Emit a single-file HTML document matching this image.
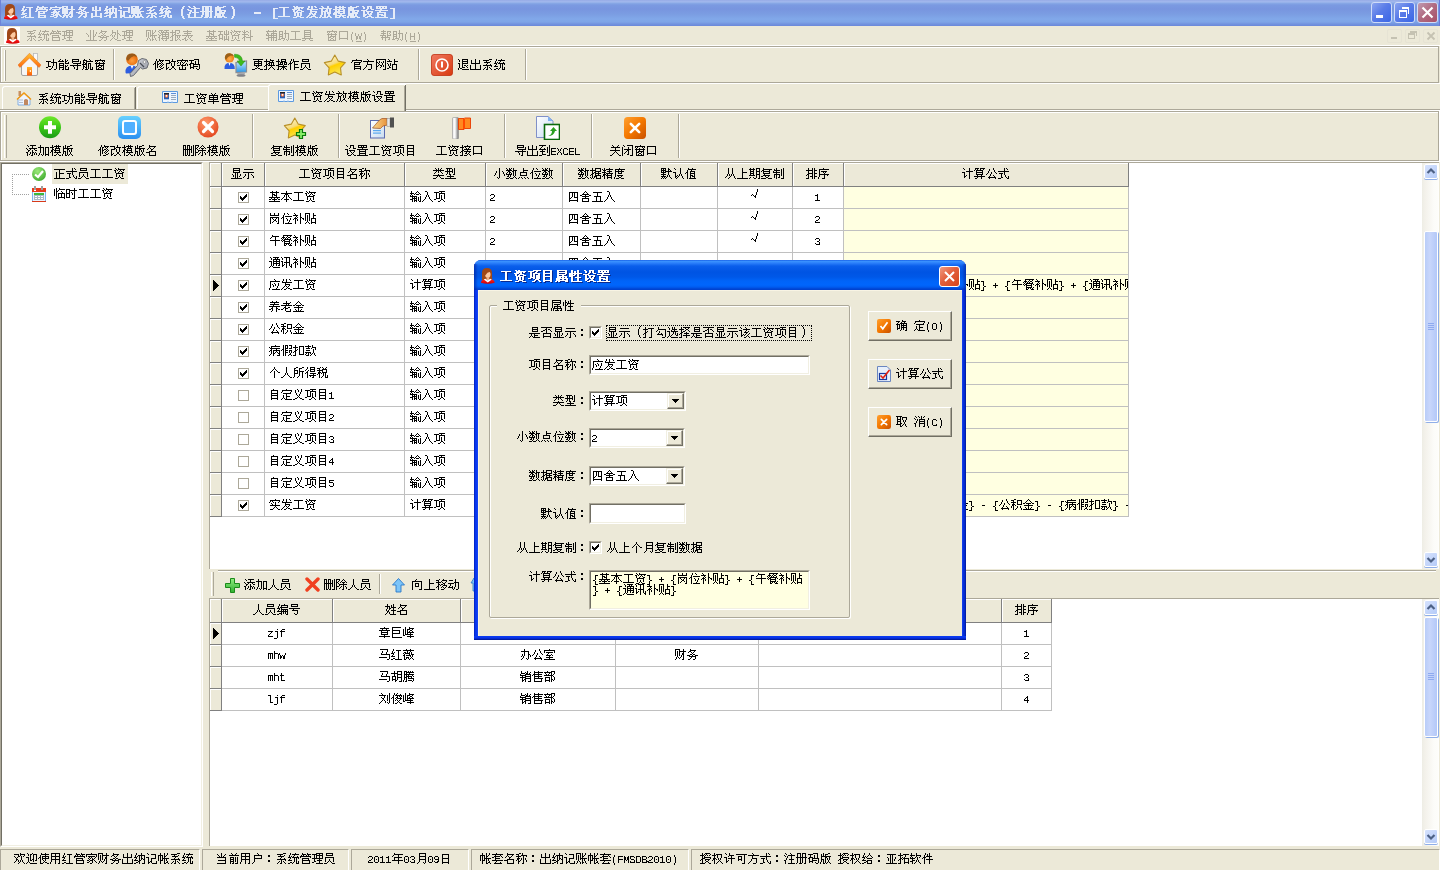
<!DOCTYPE html><html><head><meta charset="utf-8"><title>红管家财务出纳记账系统</title><style>
*{margin:0;padding:0;box-sizing:border-box}
html,body{width:1440px;height:870px;overflow:hidden}
body{position:relative;background:#ece9d8;font-family:"Liberation Sans",sans-serif;font-size:12px;color:#000}
.a{position:absolute}
.t{white-space:nowrap;line-height:12px;height:12px}
</style></head><body>
<svg width="0" height="0" style="position:absolute"><defs><path id="g0" d="M2 0h1v1h-1zM2 1h1v1h-1zM5 1h6v1h-6zM1 2h1v1h-1zM8 2h1v1h-1zM1 3h1v1h-1zM4 3h1v1h-1zM8 3h1v1h-1zM0 4h4v1h-4zM8 4h1v1h-1zM2 5h1v1h-1zM8 5h1v1h-1zM1 6h1v1h-1zM8 6h1v1h-1zM1 7h1v1h-1zM3 7h2v1h-2zM8 7h1v1h-1zM0 8h3v1h-3zM8 8h1v1h-1zM4 9h1v1h-1zM8 9h1v1h-1zM2 10h2v1h-2zM8 10h1v1h-1zM0 11h2v1h-2zM4 11h8v1h-8z"/><path id="g1" d="M2 0h1v1h-1zM7 0h1v1h-1zM2 1h4v1h-4zM7 1h5v1h-5zM1 2h1v1h-1zM4 2h1v1h-1zM6 2h1v1h-1zM9 2h1v1h-1zM1 3h11v1h-11zM1 4h1v1h-1zM11 4h1v1h-1zM0 5h1v1h-1zM3 5h6v1h-6zM10 5h1v1h-1zM3 6h1v1h-1zM8 6h1v1h-1zM3 7h6v1h-6zM3 8h1v1h-1zM3 9h7v1h-7zM3 10h1v1h-1zM9 10h1v1h-1zM3 11h7v1h-7z"/><path id="g2" d="M6 0h1v1h-1zM1 1h11v1h-11zM1 2h1v1h-1zM10 2h1v1h-1zM0 3h1v1h-1zM3 3h7v1h-7zM5 4h1v1h-1zM4 5h1v1h-1zM6 5h1v1h-1zM9 5h1v1h-1zM2 6h2v1h-2zM5 6h2v1h-2zM8 6h1v1h-1zM4 7h1v1h-1zM7 7h2v1h-2zM2 8h2v1h-2zM6 8h2v1h-2zM9 8h1v1h-1zM4 9h2v1h-2zM7 9h1v1h-1zM10 9h1v1h-1zM1 10h3v1h-3zM7 10h1v1h-1zM11 10h1v1h-1zM5 11h2v1h-2z"/><path id="g3" d="M0 0h5v1h-5zM9 0h1v1h-1zM0 1h1v1h-1zM4 1h1v1h-1zM9 1h1v1h-1zM0 2h1v1h-1zM2 2h1v1h-1zM4 2h1v1h-1zM9 2h1v1h-1zM0 3h1v1h-1zM2 3h1v1h-1zM4 3h1v1h-1zM6 3h6v1h-6zM0 4h1v1h-1zM2 4h1v1h-1zM4 4h1v1h-1zM9 4h1v1h-1zM0 5h1v1h-1zM2 5h1v1h-1zM4 5h1v1h-1zM8 5h2v1h-2zM0 6h1v1h-1zM2 6h1v1h-1zM4 6h1v1h-1zM7 6h1v1h-1zM9 6h1v1h-1zM0 7h1v1h-1zM2 7h1v1h-1zM4 7h1v1h-1zM7 7h1v1h-1zM9 7h1v1h-1zM2 8h1v1h-1zM6 8h1v1h-1zM9 8h1v1h-1zM1 9h1v1h-1zM3 9h1v1h-1zM5 9h1v1h-1zM9 9h1v1h-1zM1 10h1v1h-1zM4 10h1v1h-1zM7 10h1v1h-1zM9 10h1v1h-1zM0 11h1v1h-1zM4 11h1v1h-1zM8 11h1v1h-1z"/><path id="g4" d="M4 0h1v1h-1zM3 1h7v1h-7zM3 2h1v1h-1zM8 2h1v1h-1zM2 3h1v1h-1zM4 3h1v1h-1zM7 3h1v1h-1zM5 4h2v1h-2zM3 5h2v1h-2zM7 5h2v1h-2zM0 6h3v1h-3zM5 6h1v1h-1zM9 6h3v1h-3zM2 7h8v1h-8zM5 8h1v1h-1zM9 8h1v1h-1zM4 9h1v1h-1zM9 9h1v1h-1zM3 10h1v1h-1zM7 10h1v1h-1zM9 10h1v1h-1zM2 11h1v1h-1zM8 11h1v1h-1z"/><path id="g5" d="M4 0h1v1h-1zM1 1h1v1h-1zM4 1h1v1h-1zM8 1h1v1h-1zM1 2h1v1h-1zM4 2h1v1h-1zM8 2h1v1h-1zM1 3h1v1h-1zM4 3h1v1h-1zM8 3h1v1h-1zM1 4h8v1h-8zM4 5h1v1h-1zM4 6h1v1h-1zM0 7h1v1h-1zM4 7h1v1h-1zM9 7h1v1h-1zM0 8h1v1h-1zM4 8h1v1h-1zM9 8h1v1h-1zM0 9h1v1h-1zM4 9h1v1h-1zM9 9h1v1h-1zM0 10h10v1h-10zM0 11h1v1h-1zM9 11h1v1h-1z"/><path id="g6" d="M2 0h1v1h-1zM8 0h1v1h-1zM2 1h1v1h-1zM8 1h1v1h-1zM1 2h1v1h-1zM5 2h7v1h-7zM1 3h1v1h-1zM3 3h1v1h-1zM5 3h1v1h-1zM8 3h1v1h-1zM11 3h1v1h-1zM0 4h3v1h-3zM5 4h1v1h-1zM8 4h1v1h-1zM11 4h1v1h-1zM2 5h1v1h-1zM5 5h1v1h-1zM8 5h1v1h-1zM11 5h1v1h-1zM1 6h1v1h-1zM3 6h1v1h-1zM5 6h1v1h-1zM7 6h1v1h-1zM9 6h1v1h-1zM11 6h1v1h-1zM0 7h3v1h-3zM5 7h1v1h-1zM7 7h1v1h-1zM10 7h2v1h-2zM5 8h2v1h-2zM11 8h1v1h-1zM2 9h2v1h-2zM5 9h1v1h-1zM11 9h1v1h-1zM0 10h2v1h-2zM5 10h1v1h-1zM11 10h1v1h-1zM5 11h1v1h-1zM9 11h3v1h-3z"/><path id="g7" d="M1 0h1v1h-1zM2 1h1v1h-1zM5 1h6v1h-6zM2 2h1v1h-1zM10 2h1v1h-1zM10 3h1v1h-1zM0 4h3v1h-3zM10 4h1v1h-1zM2 5h1v1h-1zM5 5h6v1h-6zM2 6h1v1h-1zM5 6h1v1h-1zM10 6h1v1h-1zM2 7h1v1h-1zM5 7h1v1h-1zM2 8h1v1h-1zM5 8h1v1h-1zM2 9h1v1h-1zM4 9h2v1h-2zM11 9h1v1h-1zM2 10h2v1h-2zM5 10h1v1h-1zM11 10h1v1h-1zM2 11h1v1h-1zM6 11h6v1h-6z"/><path id="g8" d="M0 0h5v1h-5zM6 0h1v1h-1zM0 1h1v1h-1zM4 1h1v1h-1zM6 1h1v1h-1zM10 1h1v1h-1zM0 2h1v1h-1zM2 2h1v1h-1zM4 2h1v1h-1zM6 2h1v1h-1zM9 2h1v1h-1zM0 3h1v1h-1zM2 3h1v1h-1zM4 3h1v1h-1zM6 3h1v1h-1zM8 3h1v1h-1zM0 4h1v1h-1zM2 4h1v1h-1zM4 4h1v1h-1zM6 4h2v1h-2zM0 5h1v1h-1zM2 5h1v1h-1zM4 5h8v1h-8zM0 6h1v1h-1zM2 6h1v1h-1zM4 6h1v1h-1zM6 6h1v1h-1zM8 6h1v1h-1zM0 7h1v1h-1zM2 7h1v1h-1zM4 7h1v1h-1zM6 7h1v1h-1zM8 7h1v1h-1zM2 8h1v1h-1zM6 8h1v1h-1zM9 8h1v1h-1zM1 9h1v1h-1zM3 9h1v1h-1zM6 9h1v1h-1zM9 9h1v1h-1zM1 10h1v1h-1zM4 10h1v1h-1zM6 10h1v1h-1zM8 10h1v1h-1zM10 10h1v1h-1zM0 11h1v1h-1zM4 11h1v1h-1zM6 11h2v1h-2zM11 11h1v1h-1z"/><path id="g9" d="M6 0h4v1h-4zM0 1h6v1h-6zM4 2h1v1h-1zM3 3h1v1h-1zM7 3h1v1h-1zM1 4h6v1h-6zM4 5h1v1h-1zM3 6h1v1h-1zM8 6h1v1h-1zM0 7h10v1h-10zM5 8h1v1h-1zM9 8h1v1h-1zM2 9h1v1h-1zM5 9h1v1h-1zM7 9h1v1h-1zM1 10h1v1h-1zM5 10h1v1h-1zM8 10h1v1h-1zM0 11h1v1h-1zM4 11h2v1h-2zM9 11h1v1h-1z"/><path id="g10" d="M2 0h1v1h-1zM7 0h1v1h-1zM2 1h1v1h-1zM8 1h1v1h-1zM1 2h1v1h-1zM4 2h8v1h-8zM1 3h1v1h-1zM3 3h1v1h-1zM7 3h1v1h-1zM0 4h3v1h-3zM6 4h1v1h-1zM9 4h1v1h-1zM2 5h1v1h-1zM5 5h6v1h-6zM1 6h1v1h-1zM3 6h1v1h-1zM6 6h1v1h-1zM8 6h1v1h-1zM10 6h1v1h-1zM0 7h3v1h-3zM6 7h1v1h-1zM8 7h1v1h-1zM6 8h1v1h-1zM8 8h1v1h-1zM2 9h2v1h-2zM5 9h1v1h-1zM8 9h1v1h-1zM11 9h1v1h-1zM0 10h2v1h-2zM5 10h1v1h-1zM8 10h1v1h-1zM11 10h1v1h-1zM4 11h1v1h-1zM9 11h3v1h-3z"/><path id="g11" d="M2 0h1v1h-1zM1 1h1v1h-1zM1 2h1v1h-1zM0 3h1v1h-1zM0 4h1v1h-1zM0 5h1v1h-1zM0 6h1v1h-1zM0 7h1v1h-1zM0 8h1v1h-1zM0 9h1v1h-1zM1 10h1v1h-1zM1 11h1v1h-1zM2 12h1v1h-1z"/><path id="g12" d="M1 0h1v1h-1zM6 0h1v1h-1zM2 1h1v1h-1zM7 1h1v1h-1zM4 2h8v1h-8zM0 3h1v1h-1zM7 3h1v1h-1zM1 4h1v1h-1zM3 4h1v1h-1zM7 4h1v1h-1zM3 5h1v1h-1zM7 5h1v1h-1zM2 6h1v1h-1zM5 6h6v1h-6zM2 7h1v1h-1zM7 7h1v1h-1zM0 8h2v1h-2zM7 8h1v1h-1zM1 9h1v1h-1zM7 9h1v1h-1zM1 10h1v1h-1zM7 10h1v1h-1zM1 11h1v1h-1zM3 11h9v1h-9z"/><path id="g13" d="M2 0h4v1h-4zM7 0h4v1h-4zM2 1h1v1h-1zM5 1h1v1h-1zM7 1h1v1h-1zM10 1h1v1h-1zM2 2h1v1h-1zM5 2h1v1h-1zM7 2h1v1h-1zM10 2h1v1h-1zM2 3h1v1h-1zM5 3h1v1h-1zM7 3h1v1h-1zM10 3h1v1h-1zM2 4h1v1h-1zM5 4h1v1h-1zM7 4h1v1h-1zM10 4h1v1h-1zM0 5h12v1h-12zM2 6h1v1h-1zM5 6h1v1h-1zM7 6h1v1h-1zM10 6h1v1h-1zM2 7h1v1h-1zM5 7h1v1h-1zM7 7h1v1h-1zM10 7h1v1h-1zM2 8h1v1h-1zM5 8h1v1h-1zM7 8h1v1h-1zM10 8h1v1h-1zM1 9h1v1h-1zM5 9h1v1h-1zM7 9h1v1h-1zM10 9h1v1h-1zM1 10h1v1h-1zM5 10h1v1h-1zM7 10h1v1h-1zM10 10h1v1h-1zM0 11h1v1h-1zM4 11h1v1h-1zM6 11h1v1h-1zM9 11h2v1h-2z"/><path id="g14" d="M3 0h1v1h-1zM9 0h2v1h-2zM1 1h1v1h-1zM3 1h1v1h-1zM5 1h4v1h-4zM1 2h1v1h-1zM3 2h1v1h-1zM5 2h1v1h-1zM1 3h1v1h-1zM3 3h1v1h-1zM5 3h1v1h-1zM1 4h10v1h-10zM1 5h1v1h-1zM5 5h2v1h-2zM10 5h1v1h-1zM1 6h1v1h-1zM5 6h1v1h-1zM7 6h1v1h-1zM9 6h1v1h-1zM1 7h3v1h-3zM5 7h1v1h-1zM7 7h1v1h-1zM9 7h1v1h-1zM1 8h1v1h-1zM3 8h1v1h-1zM5 8h1v1h-1zM8 8h1v1h-1zM1 9h1v1h-1zM3 9h1v1h-1zM5 9h1v1h-1zM8 9h1v1h-1zM0 10h1v1h-1zM3 10h1v1h-1zM5 10h1v1h-1zM7 10h1v1h-1zM9 10h1v1h-1zM0 11h1v1h-1zM3 11h2v1h-2zM6 11h1v1h-1zM10 11h2v1h-2z"/><path id="g15" d="M0 0h1v1h-1zM1 1h1v1h-1zM1 2h1v1h-1zM2 3h1v1h-1zM2 4h1v1h-1zM2 5h1v1h-1zM2 6h1v1h-1zM2 7h1v1h-1zM2 8h1v1h-1zM2 9h1v1h-1zM1 10h1v1h-1zM1 11h1v1h-1zM0 12h1v1h-1z"/><path id="g16" d="M0 0h4v1h-4zM0 1h1v1h-1zM0 2h1v1h-1zM0 3h1v1h-1zM0 4h1v1h-1zM0 5h1v1h-1zM0 6h1v1h-1zM0 7h1v1h-1zM0 8h1v1h-1zM0 9h1v1h-1zM0 10h4v1h-4z"/><path id="g17" d="M1 0h9v1h-9zM5 1h1v1h-1zM5 2h1v1h-1zM5 3h1v1h-1zM5 4h1v1h-1zM5 5h1v1h-1zM5 6h1v1h-1zM5 7h1v1h-1zM5 8h1v1h-1zM0 9h11v1h-11z"/><path id="g18" d="M1 0h1v1h-1zM4 0h1v1h-1zM2 1h1v1h-1zM4 1h7v1h-7zM2 2h1v1h-1zM4 2h1v1h-1zM6 2h1v1h-1zM9 2h1v1h-1zM0 3h2v1h-2zM3 3h1v1h-1zM6 3h1v1h-1zM1 4h1v1h-1zM5 4h1v1h-1zM7 4h2v1h-2zM1 5h1v1h-1zM4 5h1v1h-1zM9 5h2v1h-2zM2 6h7v1h-7zM2 7h1v1h-1zM5 7h1v1h-1zM8 7h1v1h-1zM2 8h1v1h-1zM5 8h1v1h-1zM8 8h1v1h-1zM2 9h1v1h-1zM5 9h1v1h-1zM8 9h1v1h-1zM4 10h1v1h-1zM6 10h2v1h-2zM1 11h3v1h-3zM8 11h3v1h-3z"/><path id="g19" d="M2 0h1v1h-1zM5 0h1v1h-1zM8 0h1v1h-1zM2 1h1v1h-1zM5 1h1v1h-1zM9 1h1v1h-1zM1 2h1v1h-1zM5 2h1v1h-1zM1 3h10v1h-10zM4 4h1v1h-1zM4 5h6v1h-6zM4 6h1v1h-1zM9 6h1v1h-1zM3 7h1v1h-1zM5 7h1v1h-1zM8 7h1v1h-1zM3 8h1v1h-1zM6 8h1v1h-1zM8 8h1v1h-1zM2 9h1v1h-1zM7 9h1v1h-1zM1 10h1v1h-1zM5 10h2v1h-2zM8 10h1v1h-1zM0 11h1v1h-1zM3 11h2v1h-2zM9 11h2v1h-2z"/><path id="g20" d="M2 0h1v1h-1zM8 0h1v1h-1zM3 1h1v1h-1zM8 1h1v1h-1zM0 2h6v1h-6zM7 2h5v1h-5zM2 3h1v1h-1zM7 3h1v1h-1zM10 3h1v1h-1zM2 4h1v1h-1zM6 4h2v1h-2zM10 4h1v1h-1zM2 5h4v1h-4zM7 5h1v1h-1zM10 5h1v1h-1zM2 6h1v1h-1zM5 6h1v1h-1zM8 6h1v1h-1zM10 6h1v1h-1zM2 7h1v1h-1zM5 7h1v1h-1zM8 7h1v1h-1zM10 7h1v1h-1zM2 8h1v1h-1zM5 8h1v1h-1zM9 8h1v1h-1zM1 9h1v1h-1zM5 9h1v1h-1zM9 9h1v1h-1zM1 10h1v1h-1zM5 10h1v1h-1zM8 10h1v1h-1zM10 10h1v1h-1zM0 11h1v1h-1zM3 11h2v1h-2zM6 11h2v1h-2zM11 11h1v1h-1z"/><path id="g21" d="M2 0h1v1h-1zM6 0h1v1h-1zM9 0h1v1h-1zM2 1h1v1h-1zM4 1h8v1h-8zM2 2h1v1h-1zM6 2h1v1h-1zM9 2h1v1h-1zM0 3h11v1h-11zM2 4h1v1h-1zM5 4h1v1h-1zM10 4h1v1h-1zM2 5h2v1h-2zM5 5h6v1h-6zM1 6h2v1h-2zM4 6h2v1h-2zM10 6h1v1h-1zM0 7h1v1h-1zM2 7h1v1h-1zM5 7h6v1h-6zM0 8h1v1h-1zM2 8h1v1h-1zM7 8h1v1h-1zM2 9h1v1h-1zM4 9h8v1h-8zM2 10h1v1h-1zM6 10h1v1h-1zM9 10h1v1h-1zM2 11h1v1h-1zM4 11h2v1h-2zM10 11h2v1h-2z"/><path id="g22" d="M1 0h1v1h-1zM6 0h4v1h-4zM2 1h1v1h-1zM6 1h1v1h-1zM9 1h1v1h-1zM2 2h1v1h-1zM6 2h1v1h-1zM9 2h1v1h-1zM5 3h1v1h-1zM10 3h2v1h-2zM0 4h3v1h-3zM4 4h1v1h-1zM2 5h1v1h-1zM5 5h6v1h-6zM2 6h1v1h-1zM6 6h1v1h-1zM10 6h1v1h-1zM2 7h1v1h-1zM6 7h1v1h-1zM9 7h1v1h-1zM2 8h1v1h-1zM4 8h1v1h-1zM7 8h1v1h-1zM9 8h1v1h-1zM2 9h2v1h-2zM8 9h1v1h-1zM2 10h1v1h-1zM6 10h2v1h-2zM9 10h1v1h-1zM4 11h2v1h-2zM10 11h2v1h-2z"/><path id="g23" d="M1 0h10v1h-10zM1 1h1v1h-1zM4 1h1v1h-1zM7 1h1v1h-1zM10 1h1v1h-1zM1 2h10v1h-10zM5 3h1v1h-1zM0 4h12v1h-12zM4 5h1v1h-1zM2 6h8v1h-8zM2 7h1v1h-1zM9 7h1v1h-1zM2 8h5v1h-5zM9 8h1v1h-1zM2 9h1v1h-1zM6 9h4v1h-4zM2 10h1v1h-1zM9 10h1v1h-1zM0 11h12v1h-12z"/><path id="g24" d="M0 0h4v1h-4zM3 1h1v1h-1zM3 2h1v1h-1zM3 3h1v1h-1zM3 4h1v1h-1zM3 5h1v1h-1zM3 6h1v1h-1zM3 7h1v1h-1zM3 8h1v1h-1zM3 9h1v1h-1zM0 10h4v1h-4z"/><path id="g25" d="M6 0h3v1h-3zM0 1h6v1h-6zM3 2h1v1h-1zM7 2h1v1h-1zM1 3h6v1h-6zM4 4h1v1h-1zM3 5h1v1h-1zM7 5h1v1h-1zM0 6h9v1h-9zM4 7h1v1h-1zM8 7h1v1h-1zM2 8h1v1h-1zM4 8h1v1h-1zM6 8h1v1h-1zM1 9h1v1h-1zM4 9h1v1h-1zM7 9h1v1h-1zM0 10h1v1h-1zM3 10h2v1h-2zM8 10h1v1h-1z"/><path id="g26" d="M2 0h1v1h-1zM7 0h1v1h-1zM2 1h1v1h-1zM4 1h7v1h-7zM1 2h1v1h-1zM6 2h1v1h-1zM1 3h1v1h-1zM3 3h1v1h-1zM5 3h1v1h-1zM9 3h1v1h-1zM0 4h3v1h-3zM4 4h7v1h-7zM2 5h1v1h-1zM6 5h1v1h-1zM8 5h1v1h-1zM10 5h1v1h-1zM1 6h1v1h-1zM6 6h1v1h-1zM8 6h1v1h-1zM0 7h4v1h-4zM6 7h1v1h-1zM8 7h1v1h-1zM6 8h1v1h-1zM8 8h1v1h-1zM10 8h1v1h-1zM2 9h2v1h-2zM5 9h1v1h-1zM8 9h1v1h-1zM10 9h1v1h-1zM0 10h2v1h-2zM4 10h1v1h-1zM8 10h3v1h-3z"/><path id="g27" d="M2 0h1v1h-1zM7 0h1v1h-1zM2 1h4v1h-4zM7 1h4v1h-4zM1 2h1v1h-1zM3 2h1v1h-1zM6 2h1v1h-1zM8 2h1v1h-1zM0 3h11v1h-11zM0 4h1v1h-1zM10 4h1v1h-1zM2 5h7v1h-7zM2 6h1v1h-1zM8 6h1v1h-1zM2 7h8v1h-8zM2 8h1v1h-1zM9 8h1v1h-1zM2 9h1v1h-1zM9 9h1v1h-1zM2 10h8v1h-8z"/><path id="g28" d="M4 0h7v1h-7zM0 1h5v1h-5zM7 1h1v1h-1zM10 1h1v1h-1zM2 2h1v1h-1zM4 2h7v1h-7zM2 3h1v1h-1zM4 3h1v1h-1zM7 3h1v1h-1zM10 3h1v1h-1zM2 4h1v1h-1zM4 4h1v1h-1zM7 4h1v1h-1zM10 4h1v1h-1zM0 5h11v1h-11zM2 6h1v1h-1zM7 6h1v1h-1zM2 7h1v1h-1zM5 7h5v1h-5zM2 8h2v1h-2zM7 8h1v1h-1zM0 9h2v1h-2zM7 9h1v1h-1zM4 10h7v1h-7z"/><path id="g29" d="M4 0h1v1h-1zM7 0h1v1h-1zM4 1h1v1h-1zM7 1h1v1h-1zM4 2h1v1h-1zM7 2h1v1h-1zM10 2h1v1h-1zM0 3h1v1h-1zM4 3h1v1h-1zM7 3h1v1h-1zM10 3h1v1h-1zM1 4h1v1h-1zM4 4h1v1h-1zM7 4h1v1h-1zM9 4h1v1h-1zM2 5h1v1h-1zM4 5h1v1h-1zM7 5h1v1h-1zM9 5h1v1h-1zM2 6h1v1h-1zM4 6h1v1h-1zM7 6h2v1h-2zM4 7h1v1h-1zM7 7h1v1h-1zM4 8h1v1h-1zM7 8h1v1h-1zM4 9h1v1h-1zM7 9h1v1h-1zM0 10h11v1h-11z"/><path id="g30" d="M3 0h1v1h-1zM3 1h6v1h-6zM2 2h2v1h-2zM7 2h1v1h-1zM1 3h1v1h-1zM4 3h1v1h-1zM6 3h1v1h-1zM5 4h1v1h-1zM3 5h2v1h-2zM6 5h2v1h-2zM0 6h3v1h-3zM5 6h1v1h-1zM8 6h3v1h-3zM2 7h7v1h-7zM4 8h1v1h-1zM8 8h1v1h-1zM3 9h1v1h-1zM8 9h1v1h-1zM1 10h2v1h-2zM6 10h2v1h-2z"/><path id="g31" d="M2 0h1v1h-1zM7 0h1v1h-1zM2 1h1v1h-1zM7 1h1v1h-1zM2 2h4v1h-4zM7 2h1v1h-1zM2 3h1v1h-1zM5 3h1v1h-1zM7 3h2v1h-2zM1 4h1v1h-1zM5 4h1v1h-1zM7 4h1v1h-1zM9 4h1v1h-1zM0 5h1v1h-1zM2 5h1v1h-1zM4 5h1v1h-1zM7 5h1v1h-1zM10 5h1v1h-1zM2 6h1v1h-1zM4 6h1v1h-1zM7 6h1v1h-1zM3 7h1v1h-1zM7 7h1v1h-1zM2 8h1v1h-1zM4 8h1v1h-1zM7 8h1v1h-1zM1 9h1v1h-1zM5 9h2v1h-2zM0 10h1v1h-1zM7 10h4v1h-4z"/><path id="g32" d="M0 0h5v1h-5zM6 0h1v1h-1zM9 0h1v1h-1zM0 1h1v1h-1zM4 1h1v1h-1zM6 1h1v1h-1zM9 1h1v1h-1zM0 2h1v1h-1zM2 2h1v1h-1zM4 2h1v1h-1zM6 2h1v1h-1zM8 2h1v1h-1zM0 3h1v1h-1zM2 3h1v1h-1zM4 3h1v1h-1zM6 3h2v1h-2zM0 4h1v1h-1zM2 4h1v1h-1zM4 4h1v1h-1zM6 4h1v1h-1zM0 5h1v1h-1zM2 5h1v1h-1zM4 5h7v1h-7zM0 6h1v1h-1zM2 6h1v1h-1zM4 6h1v1h-1zM6 6h1v1h-1zM8 6h1v1h-1zM2 7h1v1h-1zM6 7h1v1h-1zM8 7h1v1h-1zM1 8h1v1h-1zM3 8h1v1h-1zM6 8h1v1h-1zM9 8h1v1h-1zM1 9h1v1h-1zM4 9h1v1h-1zM6 9h2v1h-2zM9 9h1v1h-1zM0 10h1v1h-1zM4 10h1v1h-1zM6 10h1v1h-1zM10 10h1v1h-1z"/><path id="g33" d="M1 0h4v1h-4zM6 0h5v1h-5zM0 1h1v1h-1zM3 1h1v1h-1zM5 1h1v1h-1zM8 1h1v1h-1zM1 2h1v1h-1zM3 2h8v1h-8zM2 3h1v1h-1zM4 3h1v1h-1zM7 3h1v1h-1zM10 3h1v1h-1zM0 4h1v1h-1zM3 4h8v1h-8zM1 5h2v1h-2zM4 5h1v1h-1zM7 5h1v1h-1zM10 5h1v1h-1zM1 6h1v1h-1zM4 6h7v1h-7zM0 7h2v1h-2zM4 7h1v1h-1zM8 7h1v1h-1zM10 7h1v1h-1zM1 8h1v1h-1zM3 8h8v1h-8zM1 9h1v1h-1zM4 9h1v1h-1zM8 9h1v1h-1zM1 10h1v1h-1zM5 10h1v1h-1zM7 10h2v1h-2z"/><path id="g34" d="M2 0h1v1h-1zM5 0h5v1h-5zM2 1h1v1h-1zM5 1h1v1h-1zM9 1h1v1h-1zM0 2h6v1h-6zM9 2h1v1h-1zM2 3h1v1h-1zM5 3h1v1h-1zM7 3h2v1h-2zM2 4h1v1h-1zM4 4h2v1h-2zM2 5h2v1h-2zM5 5h6v1h-6zM1 6h2v1h-2zM5 6h1v1h-1zM7 6h1v1h-1zM9 6h1v1h-1zM0 7h1v1h-1zM2 7h1v1h-1zM5 7h1v1h-1zM7 7h1v1h-1zM9 7h1v1h-1zM2 8h1v1h-1zM5 8h1v1h-1zM8 8h1v1h-1zM2 9h1v1h-1zM5 9h1v1h-1zM7 9h1v1h-1zM9 9h1v1h-1zM0 10h3v1h-3zM5 10h2v1h-2zM10 10h1v1h-1z"/><path id="g35" d="M5 0h1v1h-1zM1 1h9v1h-9zM5 2h1v1h-1zM2 3h7v1h-7zM5 4h1v1h-1zM0 5h11v1h-11zM4 6h1v1h-1zM6 6h1v1h-1zM9 6h1v1h-1zM3 7h1v1h-1zM6 7h1v1h-1zM8 7h1v1h-1zM2 8h2v1h-2zM7 8h1v1h-1zM0 9h2v1h-2zM3 9h1v1h-1zM5 9h1v1h-1zM8 9h1v1h-1zM3 10h2v1h-2zM9 10h2v1h-2z"/><path id="g36" d="M3 0h1v1h-1zM7 0h1v1h-1zM1 1h9v1h-9zM3 2h1v1h-1zM7 2h1v1h-1zM3 3h3v1h-3zM7 3h1v1h-1zM3 4h1v1h-1zM5 4h3v1h-3zM3 5h1v1h-1zM7 5h1v1h-1zM0 6h11v1h-11zM2 7h1v1h-1zM5 7h1v1h-1zM8 7h1v1h-1zM0 8h2v1h-2zM3 8h5v1h-5zM9 8h2v1h-2zM5 9h1v1h-1zM0 10h11v1h-11z"/><path id="g37" d="M8 0h1v1h-1zM0 1h5v1h-5zM6 1h1v1h-1zM8 1h1v1h-1zM10 1h1v1h-1zM2 2h1v1h-1zM6 2h1v1h-1zM8 2h1v1h-1zM10 2h1v1h-1zM2 3h1v1h-1zM6 3h1v1h-1zM8 3h1v1h-1zM10 3h1v1h-1zM1 4h4v1h-4zM6 4h5v1h-5zM0 5h2v1h-2zM4 5h1v1h-1zM8 5h1v1h-1zM1 6h1v1h-1zM4 6h1v1h-1zM6 6h1v1h-1zM8 6h1v1h-1zM10 6h1v1h-1zM1 7h1v1h-1zM4 7h1v1h-1zM6 7h1v1h-1zM8 7h1v1h-1zM10 7h1v1h-1zM1 8h4v1h-4zM6 8h1v1h-1zM8 8h1v1h-1zM10 8h1v1h-1zM1 9h1v1h-1zM4 9h1v1h-1zM6 9h5v1h-5zM6 10h1v1h-1zM10 10h1v1h-1z"/><path id="g38" d="M1 0h1v1h-1zM4 0h1v1h-1zM2 1h1v1h-1zM4 1h7v1h-7zM0 2h2v1h-2zM3 2h1v1h-1zM6 2h1v1h-1zM9 2h1v1h-1zM1 3h1v1h-1zM5 3h1v1h-1zM7 3h1v1h-1zM1 4h1v1h-1zM4 4h1v1h-1zM8 4h2v1h-2zM2 5h7v1h-7zM2 6h1v1h-1zM8 6h1v1h-1zM2 7h1v1h-1zM5 7h1v1h-1zM8 7h1v1h-1zM2 8h1v1h-1zM5 8h1v1h-1zM8 8h1v1h-1zM4 9h1v1h-1zM6 9h1v1h-1zM1 10h3v1h-3zM7 10h3v1h-3z"/><path id="g39" d="M2 0h1v1h-1zM8 0h1v1h-1zM0 1h1v1h-1zM2 1h1v1h-1zM4 1h2v1h-2zM8 1h1v1h-1zM1 2h3v1h-3zM6 2h1v1h-1zM8 2h1v1h-1zM2 3h1v1h-1zM8 3h1v1h-1zM0 4h6v1h-6zM8 4h1v1h-1zM2 5h1v1h-1zM6 5h1v1h-1zM8 5h1v1h-1zM2 6h2v1h-2zM8 6h3v1h-3zM1 7h2v1h-2zM4 7h5v1h-5zM0 8h1v1h-1zM2 8h1v1h-1zM8 8h1v1h-1zM2 9h1v1h-1zM8 9h1v1h-1zM2 10h1v1h-1zM8 10h1v1h-1z"/><path id="g40" d="M2 0h1v1h-1zM7 0h1v1h-1zM9 0h1v1h-1zM0 1h11v1h-11zM1 2h1v1h-1zM7 2h1v1h-1zM1 3h2v1h-2zM5 3h6v1h-6zM0 4h1v1h-1zM2 4h1v1h-1zM5 4h1v1h-1zM7 4h1v1h-1zM10 4h1v1h-1zM0 5h11v1h-11zM2 6h1v1h-1zM5 6h1v1h-1zM7 6h1v1h-1zM10 6h1v1h-1zM2 7h9v1h-9zM0 8h3v1h-3zM5 8h1v1h-1zM7 8h1v1h-1zM10 8h1v1h-1zM2 9h1v1h-1zM5 9h1v1h-1zM7 9h1v1h-1zM10 9h1v1h-1zM2 10h1v1h-1zM5 10h1v1h-1zM7 10h1v1h-1zM9 10h2v1h-2z"/><path id="g41" d="M7 0h1v1h-1zM1 1h4v1h-4zM7 1h1v1h-1zM1 2h1v1h-1zM4 2h1v1h-1zM7 2h1v1h-1zM1 3h1v1h-1zM4 3h1v1h-1zM6 3h5v1h-5zM1 4h4v1h-4zM7 4h1v1h-1zM10 4h1v1h-1zM1 5h1v1h-1zM4 5h1v1h-1zM7 5h1v1h-1zM10 5h1v1h-1zM1 6h4v1h-4zM7 6h1v1h-1zM10 6h1v1h-1zM1 7h1v1h-1zM4 7h1v1h-1zM7 7h1v1h-1zM10 7h1v1h-1zM1 8h1v1h-1zM3 8h4v1h-4zM10 8h1v1h-1zM0 9h3v1h-3zM6 9h1v1h-1zM8 9h1v1h-1zM10 9h1v1h-1zM5 10h1v1h-1zM9 10h1v1h-1z"/><path id="g42" d="M1 0h9v1h-9zM5 1h1v1h-1zM5 2h1v1h-1zM5 3h1v1h-1zM5 4h1v1h-1zM5 5h1v1h-1zM5 6h1v1h-1zM5 7h1v1h-1zM0 8h11v1h-11z"/><path id="g43" d="M2 0h7v1h-7zM2 1h1v1h-1zM8 1h1v1h-1zM2 2h7v1h-7zM2 3h1v1h-1zM8 3h1v1h-1zM2 4h7v1h-7zM2 5h1v1h-1zM8 5h1v1h-1zM2 6h7v1h-7zM2 7h1v1h-1zM8 7h1v1h-1zM0 8h11v1h-11zM3 9h1v1h-1zM7 9h1v1h-1zM0 10h3v1h-3zM8 10h3v1h-3z"/><path id="g44" d="M5 0h1v1h-1zM0 1h10v1h-10zM0 2h1v1h-1zM2 2h1v1h-1zM7 2h1v1h-1zM9 2h1v1h-1zM1 3h1v1h-1zM4 3h1v1h-1zM8 3h1v1h-1zM0 4h10v1h-10zM1 5h1v1h-1zM4 5h1v1h-1zM8 5h1v1h-1zM1 6h1v1h-1zM3 6h6v1h-6zM1 7h3v1h-3zM6 7h1v1h-1zM8 7h1v1h-1zM1 8h1v1h-1zM4 8h2v1h-2zM8 8h1v1h-1zM1 9h1v1h-1zM3 9h1v1h-1zM6 9h1v1h-1zM8 9h1v1h-1zM1 10h8v1h-8z"/><path id="g45" d="M0 0h9v1h-9zM0 1h1v1h-1zM8 1h1v1h-1zM0 2h1v1h-1zM8 2h1v1h-1zM0 3h1v1h-1zM8 3h1v1h-1zM0 4h1v1h-1zM8 4h1v1h-1zM0 5h1v1h-1zM8 5h1v1h-1zM0 6h1v1h-1zM8 6h1v1h-1zM0 7h9v1h-9zM0 8h1v1h-1zM8 8h1v1h-1z"/><path id="g46" d="M1 0h1v1h-1zM1 1h1v1h-1zM0 2h1v1h-1zM0 3h1v1h-1zM0 4h1v1h-1zM0 5h1v1h-1zM0 6h1v1h-1zM0 7h1v1h-1zM1 8h1v1h-1zM1 9h1v1h-1z"/><path id="g47" d="M0 0h1v1h-1zM6 0h1v1h-1zM0 1h1v1h-1zM3 1h1v1h-1zM6 1h1v1h-1zM0 2h1v1h-1zM3 2h1v1h-1zM6 2h1v1h-1zM1 3h2v1h-2zM4 3h2v1h-2zM1 4h2v1h-2zM4 4h2v1h-2zM1 5h2v1h-2zM4 5h2v1h-2zM1 6h1v1h-1zM5 6h1v1h-1z"/><path id="g48" d="M1 0h1v1h-1zM1 1h1v1h-1zM2 2h1v1h-1zM2 3h1v1h-1zM2 4h1v1h-1zM2 5h1v1h-1zM2 6h1v1h-1zM2 7h1v1h-1zM1 8h1v1h-1zM1 9h1v1h-1z"/><path id="g49" d="M3 0h1v1h-1zM1 1h5v1h-5zM7 1h4v1h-4zM3 2h1v1h-1zM7 2h1v1h-1zM10 2h1v1h-1zM1 3h5v1h-5zM7 3h1v1h-1zM9 3h1v1h-1zM3 4h1v1h-1zM7 4h1v1h-1zM10 4h1v1h-1zM0 5h6v1h-6zM7 5h4v1h-4zM2 6h1v1h-1zM5 6h1v1h-1zM7 6h1v1h-1zM1 7h9v1h-9zM2 8h1v1h-1zM5 8h1v1h-1zM9 8h1v1h-1zM2 9h1v1h-1zM5 9h1v1h-1zM8 9h2v1h-2zM5 10h1v1h-1z"/><path id="g50" d="M0 0h1v1h-1zM4 0h1v1h-1zM0 1h1v1h-1zM4 1h1v1h-1zM0 2h1v1h-1zM4 2h1v1h-1zM0 3h5v1h-5zM0 4h1v1h-1zM4 4h1v1h-1zM0 5h1v1h-1zM4 5h1v1h-1zM0 6h1v1h-1zM4 6h1v1h-1z"/><path id="g51" d="M7 0h1v1h-1zM7 1h1v1h-1zM0 2h5v1h-5zM7 2h1v1h-1zM2 3h1v1h-1zM5 3h6v1h-6zM2 4h1v1h-1zM7 4h1v1h-1zM10 4h1v1h-1zM2 5h1v1h-1zM7 5h1v1h-1zM10 5h1v1h-1zM2 6h1v1h-1zM7 6h1v1h-1zM10 6h1v1h-1zM2 7h3v1h-3zM6 7h1v1h-1zM10 7h1v1h-1zM0 8h2v1h-2zM6 8h1v1h-1zM10 8h1v1h-1zM5 9h1v1h-1zM10 9h1v1h-1zM3 10h2v1h-2zM8 10h2v1h-2z"/><path id="g52" d="M2 0h1v1h-1zM7 0h1v1h-1zM1 1h1v1h-1zM4 1h1v1h-1zM7 1h1v1h-1zM9 1h1v1h-1zM0 2h6v1h-6zM7 2h2v1h-2zM7 3h1v1h-1zM10 3h1v1h-1zM1 4h5v1h-5zM7 4h4v1h-4zM1 5h1v1h-1zM5 5h1v1h-1zM1 6h5v1h-5zM7 6h1v1h-1zM9 6h1v1h-1zM1 7h1v1h-1zM5 7h1v1h-1zM7 7h2v1h-2zM1 8h5v1h-5zM7 8h1v1h-1zM10 8h1v1h-1zM1 9h1v1h-1zM5 9h1v1h-1zM7 9h1v1h-1zM10 9h1v1h-1zM1 10h1v1h-1zM4 10h2v1h-2zM7 10h4v1h-4z"/><path id="g53" d="M2 0h7v1h-7zM2 1h1v1h-1zM8 1h1v1h-1zM2 2h7v1h-7zM10 2h1v1h-1zM2 3h1v1h-1zM10 3h1v1h-1zM3 4h8v1h-8zM7 5h1v1h-1zM0 6h11v1h-11zM3 7h1v1h-1zM7 7h1v1h-1zM4 8h1v1h-1zM7 8h1v1h-1zM4 9h1v1h-1zM7 9h1v1h-1zM6 10h2v1h-2z"/><path id="g54" d="M2 0h1v1h-1zM7 0h1v1h-1zM1 1h4v1h-4zM8 1h1v1h-1zM1 2h1v1h-1zM4 2h7v1h-7zM1 3h2v1h-2zM4 3h1v1h-1zM1 4h1v1h-1zM3 4h2v1h-2zM6 4h3v1h-3zM0 5h5v1h-5zM6 5h1v1h-1zM8 5h1v1h-1zM1 6h1v1h-1zM4 6h1v1h-1zM6 6h1v1h-1zM8 6h1v1h-1zM1 7h2v1h-2zM4 7h1v1h-1zM6 7h1v1h-1zM8 7h1v1h-1zM1 8h1v1h-1zM3 8h2v1h-2zM6 8h1v1h-1zM8 8h1v1h-1zM10 8h1v1h-1zM1 9h1v1h-1zM4 9h1v1h-1zM6 9h1v1h-1zM8 9h1v1h-1zM10 9h1v1h-1zM0 10h1v1h-1zM3 10h3v1h-3zM8 10h3v1h-3z"/><path id="g55" d="M3 0h1v1h-1zM6 0h1v1h-1zM3 1h1v1h-1zM6 1h5v1h-5zM2 2h1v1h-1zM4 2h2v1h-2zM7 2h1v1h-1zM9 2h1v1h-1zM2 3h1v1h-1zM4 3h1v1h-1zM8 3h1v1h-1zM1 4h2v1h-2zM4 4h1v1h-1zM6 4h2v1h-2zM9 4h1v1h-1zM0 5h1v1h-1zM2 5h1v1h-1zM4 5h2v1h-2zM8 5h1v1h-1zM10 5h1v1h-1zM2 6h1v1h-1zM4 6h1v1h-1zM7 6h1v1h-1zM9 6h1v1h-1zM2 7h1v1h-1zM4 7h1v1h-1zM6 7h1v1h-1zM8 7h1v1h-1zM2 8h1v1h-1zM4 8h1v1h-1zM7 8h1v1h-1zM10 8h1v1h-1zM2 9h1v1h-1zM8 9h2v1h-2zM2 10h1v1h-1zM5 10h3v1h-3z"/><path id="g56" d="M7 0h1v1h-1zM0 1h5v1h-5zM7 1h1v1h-1zM4 2h1v1h-1zM6 2h5v1h-5zM4 3h2v1h-2zM9 3h1v1h-1zM1 4h4v1h-4zM6 4h1v1h-1zM9 4h1v1h-1zM1 5h1v1h-1zM6 5h1v1h-1zM9 5h1v1h-1zM1 6h1v1h-1zM6 6h1v1h-1zM9 6h1v1h-1zM1 7h1v1h-1zM7 7h2v1h-2zM1 8h1v1h-1zM3 8h1v1h-1zM7 8h2v1h-2zM1 9h2v1h-2zM6 9h1v1h-1zM9 9h1v1h-1zM1 10h1v1h-1zM4 10h2v1h-2zM10 10h1v1h-1z"/><path id="g57" d="M5 0h1v1h-1zM0 1h11v1h-11zM0 2h1v1h-1zM4 2h1v1h-1zM8 2h1v1h-1zM10 2h1v1h-1zM1 3h1v1h-1zM3 3h1v1h-1zM5 3h1v1h-1zM7 3h1v1h-1zM0 4h1v1h-1zM3 4h1v1h-1zM6 4h1v1h-1zM9 4h1v1h-1zM3 5h1v1h-1zM5 5h1v1h-1zM8 5h1v1h-1zM10 5h1v1h-1zM0 6h3v1h-3zM4 6h5v1h-5zM10 6h1v1h-1zM5 7h1v1h-1zM2 8h1v1h-1zM5 8h1v1h-1zM8 8h1v1h-1zM2 9h1v1h-1zM5 9h1v1h-1zM8 9h1v1h-1zM2 10h7v1h-7z"/><path id="g58" d="M5 0h5v1h-5zM0 1h5v1h-5zM9 1h1v1h-1zM2 2h1v1h-1zM6 2h1v1h-1zM9 2h1v1h-1zM2 3h1v1h-1zM6 3h1v1h-1zM9 3h1v1h-1zM1 4h4v1h-4zM6 4h1v1h-1zM9 4h1v1h-1zM0 5h2v1h-2zM4 5h7v1h-7zM1 6h1v1h-1zM4 6h1v1h-1zM10 6h1v1h-1zM1 7h1v1h-1zM4 7h5v1h-5zM10 7h1v1h-1zM1 8h4v1h-4zM10 8h1v1h-1zM1 9h1v1h-1zM4 9h1v1h-1zM7 9h1v1h-1zM10 9h1v1h-1zM8 10h2v1h-2z"/><path id="g59" d="M1 0h10v1h-10zM6 1h1v1h-1zM2 2h8v1h-8zM2 3h1v1h-1zM6 3h1v1h-1zM9 3h1v1h-1zM2 4h8v1h-8zM2 5h1v1h-1zM6 5h1v1h-1zM9 5h1v1h-1zM2 6h8v1h-8zM4 7h1v1h-1zM6 7h1v1h-1zM5 8h1v1h-1zM3 9h2v1h-2zM6 9h2v1h-2zM0 10h3v1h-3zM8 10h3v1h-3z"/><path id="g60" d="M2 0h1v1h-1zM6 0h1v1h-1zM2 1h1v1h-1zM6 1h4v1h-4zM0 2h6v1h-6zM8 2h1v1h-1zM2 3h1v1h-1zM5 3h5v1h-5zM2 4h1v1h-1zM4 4h2v1h-2zM7 4h1v1h-1zM9 4h1v1h-1zM2 5h2v1h-2zM5 5h1v1h-1zM7 5h1v1h-1zM9 5h1v1h-1zM1 6h2v1h-2zM4 6h7v1h-7zM0 7h1v1h-1zM2 7h1v1h-1zM7 7h1v1h-1zM2 8h1v1h-1zM6 8h1v1h-1zM8 8h1v1h-1zM2 9h1v1h-1zM5 9h1v1h-1zM9 9h1v1h-1zM0 10h3v1h-3zM4 10h1v1h-1zM10 10h1v1h-1z"/><path id="g61" d="M2 0h1v1h-1zM5 0h5v1h-5zM2 1h1v1h-1zM5 1h1v1h-1zM9 1h1v1h-1zM0 2h4v1h-4zM5 2h5v1h-5zM2 3h1v1h-1zM4 3h3v1h-3zM8 3h3v1h-3zM2 4h1v1h-1zM4 4h1v1h-1zM6 4h1v1h-1zM8 4h1v1h-1zM10 4h1v1h-1zM2 5h5v1h-5zM8 5h3v1h-3zM0 6h3v1h-3zM7 6h1v1h-1zM2 7h9v1h-9zM2 8h1v1h-1zM6 8h3v1h-3zM2 9h1v1h-1zM5 9h1v1h-1zM7 9h1v1h-1zM9 9h1v1h-1zM1 10h2v1h-2zM4 10h1v1h-1zM7 10h1v1h-1zM10 10h1v1h-1z"/><path id="g62" d="M3 0h1v1h-1zM5 0h1v1h-1zM3 1h1v1h-1zM5 1h1v1h-1zM2 2h1v1h-1zM5 2h6v1h-6zM2 3h1v1h-1zM4 3h1v1h-1zM6 3h1v1h-1zM1 4h3v1h-3zM6 4h1v1h-1zM0 5h1v1h-1zM2 5h1v1h-1zM6 5h4v1h-4zM2 6h1v1h-1zM6 6h1v1h-1zM2 7h1v1h-1zM6 7h1v1h-1zM2 8h1v1h-1zM6 8h5v1h-5zM2 9h1v1h-1zM6 9h1v1h-1zM2 10h1v1h-1zM6 10h1v1h-1z"/><path id="g63" d="M2 0h7v1h-7zM2 1h1v1h-1zM8 1h1v1h-1zM2 2h7v1h-7zM1 4h9v1h-9zM1 5h1v1h-1zM9 5h1v1h-1zM1 6h1v1h-1zM5 6h1v1h-1zM9 6h1v1h-1zM1 7h1v1h-1zM5 7h1v1h-1zM9 7h1v1h-1zM1 8h1v1h-1zM4 8h1v1h-1zM6 8h1v1h-1zM9 8h1v1h-1zM3 9h1v1h-1zM7 9h1v1h-1zM0 10h3v1h-3zM8 10h3v1h-3z"/><path id="g64" d="M5 0h1v1h-1zM1 1h10v1h-10zM1 2h1v1h-1zM10 2h1v1h-1zM0 3h1v1h-1zM3 3h7v1h-7zM3 4h1v1h-1zM8 4h1v1h-1zM3 5h6v1h-6zM3 6h1v1h-1zM3 7h7v1h-7zM3 8h1v1h-1zM9 8h1v1h-1zM3 9h7v1h-7zM3 10h1v1h-1zM9 10h1v1h-1z"/><path id="g65" d="M4 0h1v1h-1zM5 1h1v1h-1zM0 2h11v1h-11zM4 3h1v1h-1zM4 4h1v1h-1zM4 5h5v1h-5zM3 6h1v1h-1zM8 6h1v1h-1zM3 7h1v1h-1zM8 7h1v1h-1zM2 8h1v1h-1zM8 8h1v1h-1zM1 9h1v1h-1zM8 9h1v1h-1zM0 10h1v1h-1zM5 10h3v1h-3z"/><path id="g66" d="M0 0h10v1h-10zM0 1h1v1h-1zM9 1h1v1h-1zM0 2h1v1h-1zM3 2h1v1h-1zM7 2h1v1h-1zM9 2h1v1h-1zM0 3h2v1h-2zM3 3h1v1h-1zM5 3h1v1h-1zM7 3h1v1h-1zM9 3h1v1h-1zM0 4h1v1h-1zM2 4h1v1h-1zM6 4h1v1h-1zM9 4h1v1h-1zM0 5h1v1h-1zM3 5h1v1h-1zM6 5h1v1h-1zM9 5h1v1h-1zM0 6h1v1h-1zM2 6h1v1h-1zM4 6h2v1h-2zM7 6h1v1h-1zM9 6h1v1h-1zM0 7h2v1h-2zM5 7h1v1h-1zM7 7h1v1h-1zM9 7h1v1h-1zM0 8h1v1h-1zM4 8h1v1h-1zM9 8h1v1h-1zM0 9h1v1h-1zM9 9h1v1h-1zM0 10h1v1h-1zM7 10h3v1h-3z"/><path id="g67" d="M1 0h1v1h-1zM7 0h1v1h-1zM2 1h1v1h-1zM7 1h1v1h-1zM0 2h5v1h-5zM7 2h4v1h-4zM7 3h1v1h-1zM0 4h1v1h-1zM3 4h1v1h-1zM7 4h1v1h-1zM1 5h1v1h-1zM3 5h1v1h-1zM5 5h5v1h-5zM1 6h1v1h-1zM3 6h1v1h-1zM5 6h1v1h-1zM9 6h1v1h-1zM2 7h1v1h-1zM5 7h1v1h-1zM9 7h1v1h-1zM2 8h2v1h-2zM5 8h1v1h-1zM9 8h1v1h-1zM0 9h2v1h-2zM5 9h1v1h-1zM9 9h1v1h-1zM5 10h5v1h-5z"/><path id="g68" d="M0 0h1v1h-1zM4 0h6v1h-6zM1 1h1v1h-1zM4 1h1v1h-1zM9 1h1v1h-1zM1 2h1v1h-1zM4 2h6v1h-6zM4 3h1v1h-1zM9 3h1v1h-1zM0 4h2v1h-2zM4 4h6v1h-6zM1 5h1v1h-1zM4 5h1v1h-1zM1 6h1v1h-1zM4 6h1v1h-1zM6 6h2v1h-2zM9 6h1v1h-1zM1 7h1v1h-1zM4 7h1v1h-1zM8 7h1v1h-1zM1 8h1v1h-1zM4 8h3v1h-3zM9 8h1v1h-1zM0 9h1v1h-1zM2 9h2v1h-2zM0 10h1v1h-1zM4 10h7v1h-7z"/><path id="g69" d="M5 0h1v1h-1zM1 1h1v1h-1zM5 1h1v1h-1zM9 1h1v1h-1zM1 2h1v1h-1zM5 2h1v1h-1zM9 2h1v1h-1zM1 3h1v1h-1zM5 3h1v1h-1zM9 3h1v1h-1zM1 4h9v1h-9zM5 5h1v1h-1zM0 6h1v1h-1zM5 6h1v1h-1zM10 6h1v1h-1zM0 7h1v1h-1zM5 7h1v1h-1zM10 7h1v1h-1zM0 8h1v1h-1zM5 8h1v1h-1zM10 8h1v1h-1zM0 9h1v1h-1zM5 9h1v1h-1zM10 9h1v1h-1zM0 10h11v1h-11z"/><path id="g70" d="M3 0h1v1h-1zM7 0h1v1h-1zM4 1h1v1h-1zM6 1h1v1h-1zM1 2h9v1h-9zM1 3h1v1h-1zM5 3h1v1h-1zM9 3h1v1h-1zM1 4h9v1h-9zM1 5h1v1h-1zM5 5h1v1h-1zM9 5h1v1h-1zM1 6h9v1h-9zM5 7h1v1h-1zM0 8h11v1h-11zM5 9h1v1h-1zM5 10h1v1h-1z"/><path id="g71" d="M2 0h1v1h-1zM5 0h1v1h-1zM8 0h1v1h-1zM2 1h1v1h-1zM5 1h1v1h-1zM9 1h1v1h-1zM1 2h1v1h-1zM5 2h1v1h-1zM1 3h10v1h-10zM4 4h1v1h-1zM4 5h5v1h-5zM4 6h1v1h-1zM8 6h1v1h-1zM3 7h1v1h-1zM5 7h1v1h-1zM7 7h1v1h-1zM2 8h1v1h-1zM6 8h1v1h-1zM1 9h1v1h-1zM5 9h1v1h-1zM7 9h2v1h-2zM0 10h1v1h-1zM3 10h2v1h-2zM9 10h2v1h-2z"/><path id="g72" d="M2 0h1v1h-1zM7 0h1v1h-1zM3 1h1v1h-1zM7 1h1v1h-1zM0 2h6v1h-6zM7 2h4v1h-4zM2 3h1v1h-1zM6 3h1v1h-1zM9 3h1v1h-1zM2 4h1v1h-1zM5 4h1v1h-1zM7 4h1v1h-1zM9 4h1v1h-1zM2 5h3v1h-3zM7 5h1v1h-1zM9 5h1v1h-1zM2 6h1v1h-1zM4 6h1v1h-1zM7 6h1v1h-1zM9 6h1v1h-1zM2 7h1v1h-1zM4 7h1v1h-1zM8 7h1v1h-1zM1 8h1v1h-1zM4 8h1v1h-1zM7 8h2v1h-2zM1 9h1v1h-1zM4 9h1v1h-1zM6 9h1v1h-1zM9 9h1v1h-1zM0 10h1v1h-1zM3 10h1v1h-1zM5 10h1v1h-1zM10 10h1v1h-1z"/><path id="g73" d="M2 0h1v1h-1zM6 0h1v1h-1zM8 0h1v1h-1zM2 1h1v1h-1zM4 1h7v1h-7zM0 2h4v1h-4zM6 2h1v1h-1zM8 2h1v1h-1zM2 3h1v1h-1zM5 3h5v1h-5zM2 4h2v1h-2zM5 4h1v1h-1zM9 4h1v1h-1zM1 5h2v1h-2zM4 5h6v1h-6zM1 6h2v1h-2zM5 6h1v1h-1zM9 6h1v1h-1zM0 7h1v1h-1zM2 7h1v1h-1zM4 7h7v1h-7zM2 8h1v1h-1zM7 8h1v1h-1zM2 9h1v1h-1zM6 9h1v1h-1zM8 9h1v1h-1zM2 10h1v1h-1zM4 10h2v1h-2zM9 10h2v1h-2z"/><path id="g74" d="M3 0h1v1h-1zM8 0h2v1h-2zM1 1h1v1h-1zM3 1h1v1h-1zM5 1h3v1h-3zM1 2h1v1h-1zM3 2h1v1h-1zM5 2h1v1h-1zM1 3h10v1h-10zM1 4h1v1h-1zM5 4h2v1h-2zM9 4h1v1h-1zM1 5h1v1h-1zM5 5h1v1h-1zM7 5h1v1h-1zM9 5h1v1h-1zM1 6h3v1h-3zM5 6h1v1h-1zM7 6h1v1h-1zM9 6h1v1h-1zM1 7h1v1h-1zM3 7h1v1h-1zM5 7h1v1h-1zM8 7h1v1h-1zM1 8h1v1h-1zM3 8h1v1h-1zM5 8h1v1h-1zM8 8h1v1h-1zM0 9h1v1h-1zM3 9h1v1h-1zM5 9h1v1h-1zM7 9h1v1h-1zM9 9h1v1h-1zM0 10h1v1h-1zM3 10h2v1h-2zM6 10h1v1h-1zM10 10h1v1h-1z"/><path id="g75" d="M1 0h1v1h-1zM5 0h4v1h-4zM2 1h1v1h-1zM5 1h1v1h-1zM8 1h1v1h-1zM5 2h1v1h-1zM8 2h1v1h-1zM4 3h1v1h-1zM8 3h3v1h-3zM0 4h3v1h-3zM2 5h1v1h-1zM4 5h6v1h-6zM2 6h1v1h-1zM5 6h1v1h-1zM9 6h1v1h-1zM2 7h1v1h-1zM6 7h1v1h-1zM8 7h1v1h-1zM2 8h2v1h-2zM7 8h1v1h-1zM2 9h1v1h-1zM6 9h1v1h-1zM8 9h1v1h-1zM3 10h3v1h-3zM9 10h2v1h-2z"/><path id="g76" d="M1 0h9v1h-9zM1 1h1v1h-1zM4 1h1v1h-1zM6 1h1v1h-1zM9 1h1v1h-1zM1 2h9v1h-9zM5 3h1v1h-1zM0 4h11v1h-11zM2 5h1v1h-1zM8 5h1v1h-1zM2 6h7v1h-7zM2 7h1v1h-1zM8 7h1v1h-1zM2 8h7v1h-7zM2 9h1v1h-1zM8 9h1v1h-1zM0 10h11v1h-11z"/><path id="g77" d="M1 0h1v1h-1zM4 0h6v1h-6zM2 1h1v1h-1zM6 1h1v1h-1zM6 2h1v1h-1zM0 3h1v1h-1zM3 3h8v1h-8zM1 4h1v1h-1zM4 4h1v1h-1zM8 4h1v1h-1zM2 5h2v1h-2zM6 5h1v1h-1zM9 5h2v1h-2zM2 6h1v1h-1zM6 6h1v1h-1zM0 7h2v1h-2zM4 7h1v1h-1zM6 7h2v1h-2zM9 7h1v1h-1zM1 8h1v1h-1zM4 8h1v1h-1zM6 8h1v1h-1zM8 8h1v1h-1zM10 8h1v1h-1zM1 9h1v1h-1zM3 9h1v1h-1zM6 9h1v1h-1zM8 9h1v1h-1zM10 9h1v1h-1zM1 10h1v1h-1zM5 10h2v1h-2z"/><path id="g78" d="M2 0h1v1h-1zM2 1h1v1h-1zM0 2h6v1h-6zM7 2h4v1h-4zM2 3h1v1h-1zM5 3h1v1h-1zM7 3h1v1h-1zM10 3h1v1h-1zM2 4h1v1h-1zM5 4h1v1h-1zM7 4h1v1h-1zM10 4h1v1h-1zM2 5h1v1h-1zM5 5h1v1h-1zM7 5h1v1h-1zM10 5h1v1h-1zM2 6h1v1h-1zM5 6h1v1h-1zM7 6h1v1h-1zM10 6h1v1h-1zM2 7h1v1h-1zM5 7h1v1h-1zM7 7h1v1h-1zM10 7h1v1h-1zM1 8h1v1h-1zM5 8h1v1h-1zM7 8h1v1h-1zM10 8h1v1h-1zM1 9h1v1h-1zM3 9h1v1h-1zM5 9h1v1h-1zM7 9h4v1h-4zM0 10h1v1h-1zM4 10h1v1h-1zM7 10h1v1h-1zM10 10h1v1h-1z"/><path id="g79" d="M3 0h1v1h-1zM3 1h7v1h-7zM3 2h1v1h-1zM8 2h1v1h-1zM2 3h1v1h-1zM4 3h1v1h-1zM7 3h1v1h-1zM1 4h1v1h-1zM5 4h2v1h-2zM5 5h1v1h-1zM3 6h7v1h-7zM0 7h4v1h-4zM9 7h1v1h-1zM3 8h1v1h-1zM9 8h1v1h-1zM3 9h1v1h-1zM9 9h1v1h-1zM3 10h7v1h-7z"/><path id="g80" d="M0 0h3v1h-3zM4 0h3v1h-3zM10 0h1v1h-1zM0 1h1v1h-1zM2 1h1v1h-1zM4 1h1v1h-1zM6 1h1v1h-1zM8 1h1v1h-1zM10 1h1v1h-1zM0 2h1v1h-1zM2 2h1v1h-1zM4 2h1v1h-1zM6 2h1v1h-1zM8 2h1v1h-1zM10 2h1v1h-1zM0 3h1v1h-1zM2 3h1v1h-1zM4 3h1v1h-1zM6 3h1v1h-1zM8 3h1v1h-1zM10 3h1v1h-1zM0 4h9v1h-9zM10 4h1v1h-1zM0 5h1v1h-1zM2 5h1v1h-1zM4 5h1v1h-1zM6 5h1v1h-1zM8 5h1v1h-1zM10 5h1v1h-1zM0 6h1v1h-1zM2 6h1v1h-1zM4 6h1v1h-1zM6 6h1v1h-1zM8 6h1v1h-1zM10 6h1v1h-1zM0 7h1v1h-1zM2 7h1v1h-1zM4 7h1v1h-1zM6 7h1v1h-1zM8 7h1v1h-1zM10 7h1v1h-1zM0 8h1v1h-1zM2 8h1v1h-1zM4 8h1v1h-1zM6 8h1v1h-1zM10 8h1v1h-1zM0 9h1v1h-1zM2 9h1v1h-1zM4 9h1v1h-1zM6 9h1v1h-1zM10 9h1v1h-1zM0 10h1v1h-1zM2 10h2v1h-2zM5 10h2v1h-2zM8 10h3v1h-3z"/><path id="g81" d="M0 0h4v1h-4zM7 0h1v1h-1zM0 1h1v1h-1zM3 1h1v1h-1zM6 1h1v1h-1zM8 1h1v1h-1zM0 2h1v1h-1zM2 2h1v1h-1zM5 2h1v1h-1zM9 2h1v1h-1zM0 3h2v1h-2zM4 3h1v1h-1zM6 3h3v1h-3zM10 3h1v1h-1zM0 4h1v1h-1zM2 4h1v1h-1zM7 4h1v1h-1zM0 5h1v1h-1zM3 5h8v1h-8zM0 6h1v1h-1zM3 6h1v1h-1zM7 6h1v1h-1zM0 7h3v1h-3zM5 7h1v1h-1zM7 7h1v1h-1zM9 7h1v1h-1zM0 8h1v1h-1zM4 8h1v1h-1zM7 8h1v1h-1zM10 8h1v1h-1zM0 9h1v1h-1zM3 9h1v1h-1zM7 9h1v1h-1zM10 9h1v1h-1zM0 10h1v1h-1zM6 10h2v1h-2z"/><path id="g82" d="M2 0h1v1h-1zM2 1h9v1h-9zM1 2h2v1h-2zM8 2h1v1h-1zM0 3h1v1h-1zM2 3h7v1h-7zM2 4h1v1h-1zM8 4h1v1h-1zM2 5h7v1h-7zM3 6h1v1h-1zM2 7h7v1h-7zM0 8h2v1h-2zM4 8h1v1h-1zM7 8h1v1h-1zM5 9h2v1h-2zM0 10h5v1h-5zM7 10h4v1h-4z"/><path id="g83" d="M3 0h1v1h-1zM10 0h1v1h-1zM1 1h1v1h-1zM3 1h1v1h-1zM8 1h1v1h-1zM10 1h1v1h-1zM1 2h6v1h-6zM8 2h1v1h-1zM10 2h1v1h-1zM0 3h1v1h-1zM3 3h1v1h-1zM8 3h1v1h-1zM10 3h1v1h-1zM0 4h7v1h-7zM8 4h1v1h-1zM10 4h1v1h-1zM3 5h1v1h-1zM8 5h1v1h-1zM10 5h1v1h-1zM1 6h6v1h-6zM8 6h1v1h-1zM10 6h1v1h-1zM1 7h1v1h-1zM3 7h1v1h-1zM6 7h1v1h-1zM8 7h1v1h-1zM10 7h1v1h-1zM1 8h1v1h-1zM3 8h1v1h-1zM6 8h1v1h-1zM10 8h1v1h-1zM1 9h1v1h-1zM3 9h1v1h-1zM5 9h2v1h-2zM10 9h1v1h-1zM3 10h1v1h-1zM8 10h3v1h-3z"/><path id="g84" d="M5 0h6v1h-6zM0 1h5v1h-5zM7 1h1v1h-1zM2 2h1v1h-1zM5 2h6v1h-6zM2 3h1v1h-1zM5 3h1v1h-1zM10 3h1v1h-1zM2 4h1v1h-1zM5 4h1v1h-1zM7 4h1v1h-1zM10 4h1v1h-1zM2 5h1v1h-1zM5 5h1v1h-1zM7 5h1v1h-1zM10 5h1v1h-1zM2 6h1v1h-1zM5 6h1v1h-1zM7 6h1v1h-1zM10 6h1v1h-1zM2 7h4v1h-4zM7 7h1v1h-1zM10 7h1v1h-1zM0 8h2v1h-2zM7 8h2v1h-2zM6 9h1v1h-1zM9 9h1v1h-1zM4 10h2v1h-2zM10 10h1v1h-1z"/><path id="g85" d="M0 0h7v1h-7zM0 1h1v1h-1zM6 1h1v1h-1zM0 2h1v1h-1zM6 2h1v1h-1zM0 3h7v1h-7zM0 4h1v1h-1zM6 4h1v1h-1zM0 5h1v1h-1zM6 5h1v1h-1zM0 6h7v1h-7zM0 7h1v1h-1zM6 7h1v1h-1zM0 8h1v1h-1zM6 8h1v1h-1zM0 9h7v1h-7zM0 10h1v1h-1zM6 10h1v1h-1z"/><path id="g86" d="M2 0h1v1h-1zM7 0h1v1h-1zM2 1h1v1h-1zM4 1h7v1h-7zM0 2h4v1h-4zM5 2h1v1h-1zM9 2h1v1h-1zM2 3h1v1h-1zM6 3h1v1h-1zM8 3h1v1h-1zM2 4h1v1h-1zM4 4h7v1h-7zM2 5h2v1h-2zM7 5h1v1h-1zM1 6h2v1h-2zM4 6h7v1h-7zM0 7h1v1h-1zM2 7h1v1h-1zM6 7h1v1h-1zM9 7h1v1h-1zM2 8h1v1h-1zM5 8h2v1h-2zM8 8h1v1h-1zM2 9h1v1h-1zM7 9h1v1h-1zM9 9h1v1h-1zM0 10h3v1h-3zM4 10h3v1h-3zM10 10h1v1h-1z"/><path id="g87" d="M2 0h1v1h-1zM8 0h1v1h-1zM3 1h1v1h-1zM7 1h1v1h-1zM1 2h9v1h-9zM5 3h1v1h-1zM5 4h1v1h-1zM0 5h10v1h-10zM5 6h1v1h-1zM4 7h1v1h-1zM6 7h1v1h-1zM3 8h1v1h-1zM7 8h1v1h-1zM2 9h1v1h-1zM8 9h1v1h-1zM0 10h2v1h-2zM9 10h2v1h-2z"/><path id="g88" d="M1 0h1v1h-1zM5 0h6v1h-6zM2 1h1v1h-1zM10 1h1v1h-1zM0 2h1v1h-1zM6 2h1v1h-1zM10 2h1v1h-1zM0 3h1v1h-1zM6 3h1v1h-1zM10 3h1v1h-1zM0 4h1v1h-1zM2 4h7v1h-7zM10 4h1v1h-1zM0 5h1v1h-1zM5 5h2v1h-2zM10 5h1v1h-1zM0 6h1v1h-1zM4 6h1v1h-1zM6 6h1v1h-1zM10 6h1v1h-1zM0 7h1v1h-1zM3 7h1v1h-1zM6 7h1v1h-1zM10 7h1v1h-1zM0 8h1v1h-1zM2 8h1v1h-1zM6 8h1v1h-1zM10 8h1v1h-1zM0 9h1v1h-1zM5 9h2v1h-2zM10 9h1v1h-1zM0 10h1v1h-1zM8 10h3v1h-3z"/><path id="g89" d="M0 0h7v1h-7zM10 0h1v1h-1zM3 1h1v1h-1zM10 1h1v1h-1zM2 2h1v1h-1zM8 2h1v1h-1zM10 2h1v1h-1zM1 3h1v1h-1zM5 3h1v1h-1zM8 3h1v1h-1zM10 3h1v1h-1zM0 4h7v1h-7zM8 4h1v1h-1zM10 4h1v1h-1zM3 5h1v1h-1zM8 5h1v1h-1zM10 5h1v1h-1zM1 6h5v1h-5zM8 6h1v1h-1zM10 6h1v1h-1zM3 7h1v1h-1zM8 7h1v1h-1zM10 7h1v1h-1zM3 8h1v1h-1zM10 8h1v1h-1zM3 9h4v1h-4zM10 9h1v1h-1zM0 10h3v1h-3zM8 10h3v1h-3z"/><path id="g90" d="M0 0h5v1h-5zM0 1h1v1h-1zM0 2h1v1h-1zM0 3h5v1h-5zM0 4h1v1h-1zM0 5h1v1h-1zM0 6h5v1h-5z"/><path id="g91" d="M1 0h1v1h-1zM5 0h1v1h-1zM2 1h1v1h-1zM4 1h1v1h-1zM2 2h1v1h-1zM4 2h1v1h-1zM3 3h1v1h-1zM2 4h1v1h-1zM4 4h1v1h-1zM1 5h1v1h-1zM5 5h1v1h-1zM1 6h1v1h-1zM5 6h1v1h-1z"/><path id="g92" d="M1 0h3v1h-3zM0 1h1v1h-1zM4 1h1v1h-1zM0 2h1v1h-1zM0 3h1v1h-1zM0 4h1v1h-1zM0 5h1v1h-1zM4 5h1v1h-1zM1 6h4v1h-4z"/><path id="g93" d="M0 0h1v1h-1zM0 1h1v1h-1zM0 2h1v1h-1zM0 3h1v1h-1zM0 4h1v1h-1zM0 5h1v1h-1zM0 6h5v1h-5z"/><path id="g94" d="M0 0h11v1h-11zM5 1h1v1h-1zM5 2h1v1h-1zM2 3h1v1h-1zM5 3h1v1h-1zM2 4h1v1h-1zM5 4h5v1h-5zM2 5h1v1h-1zM5 5h1v1h-1zM2 6h1v1h-1zM5 6h1v1h-1zM2 7h1v1h-1zM5 7h1v1h-1zM2 8h1v1h-1zM5 8h1v1h-1zM0 9h11v1h-11z"/><path id="g95" d="M6 0h1v1h-1zM8 0h1v1h-1zM6 1h1v1h-1zM9 1h1v1h-1zM6 2h1v1h-1zM0 3h11v1h-11zM6 4h1v1h-1zM1 5h4v1h-4zM6 5h1v1h-1zM3 6h1v1h-1zM6 6h1v1h-1zM3 7h1v1h-1zM7 7h1v1h-1zM3 8h1v1h-1zM7 8h1v1h-1zM10 8h1v1h-1zM3 9h2v1h-2zM8 9h1v1h-1zM10 9h1v1h-1zM0 10h3v1h-3zM9 10h2v1h-2z"/><path id="g96" d="M2 0h1v1h-1zM5 0h1v1h-1zM0 1h1v1h-1zM2 1h1v1h-1zM5 1h6v1h-6zM0 2h1v1h-1zM2 2h1v1h-1zM4 2h1v1h-1zM0 3h1v1h-1zM2 3h2v1h-2zM7 3h1v1h-1zM0 4h1v1h-1zM2 4h1v1h-1zM8 4h1v1h-1zM0 5h1v1h-1zM2 5h1v1h-1zM4 5h7v1h-7zM0 6h1v1h-1zM2 6h1v1h-1zM4 6h1v1h-1zM7 6h1v1h-1zM10 6h1v1h-1zM0 7h1v1h-1zM2 7h1v1h-1zM4 7h1v1h-1zM7 7h1v1h-1zM10 7h1v1h-1zM2 8h1v1h-1zM4 8h1v1h-1zM7 8h1v1h-1zM10 8h1v1h-1zM2 9h1v1h-1zM4 9h7v1h-7zM2 10h1v1h-1zM4 10h1v1h-1zM10 10h1v1h-1z"/><path id="g97" d="M8 0h1v1h-1zM0 1h4v1h-4zM8 1h1v1h-1zM0 2h1v1h-1zM3 2h8v1h-8zM0 3h1v1h-1zM3 3h1v1h-1zM8 3h1v1h-1zM0 4h1v1h-1zM3 4h1v1h-1zM5 4h1v1h-1zM8 4h1v1h-1zM0 5h4v1h-4zM6 5h1v1h-1zM8 5h1v1h-1zM0 6h1v1h-1zM3 6h1v1h-1zM6 6h1v1h-1zM8 6h1v1h-1zM0 7h1v1h-1zM3 7h1v1h-1zM8 7h1v1h-1zM0 8h1v1h-1zM3 8h1v1h-1zM8 8h1v1h-1zM0 9h4v1h-4zM8 9h1v1h-1zM6 10h3v1h-3z"/><path id="g98" d="M2 0h7v1h-7zM2 1h1v1h-1zM8 1h1v1h-1zM2 2h7v1h-7zM2 3h1v1h-1zM8 3h1v1h-1zM2 4h7v1h-7zM4 5h1v1h-1zM6 5h1v1h-1zM1 6h1v1h-1zM4 6h1v1h-1zM6 6h1v1h-1zM9 6h1v1h-1zM2 7h1v1h-1zM4 7h1v1h-1zM6 7h1v1h-1zM9 7h1v1h-1zM2 8h1v1h-1zM4 8h1v1h-1zM6 8h1v1h-1zM8 8h1v1h-1zM4 9h1v1h-1zM6 9h1v1h-1zM0 10h11v1h-11z"/><path id="g99" d="M1 0h9v1h-9zM0 3h11v1h-11zM5 4h1v1h-1zM2 5h1v1h-1zM5 5h1v1h-1zM8 5h1v1h-1zM2 6h1v1h-1zM5 6h1v1h-1zM9 6h1v1h-1zM1 7h1v1h-1zM5 7h1v1h-1zM10 7h1v1h-1zM0 8h1v1h-1zM5 8h1v1h-1zM10 8h1v1h-1zM4 9h2v1h-2z"/><path id="g100" d="M3 0h2v1h-2zM6 0h1v1h-1zM0 1h3v1h-3zM6 1h1v1h-1zM2 2h1v1h-1zM5 2h6v1h-6zM0 3h5v1h-5zM7 3h1v1h-1zM10 3h1v1h-1zM2 4h1v1h-1zM7 4h1v1h-1zM1 5h3v1h-3zM5 5h1v1h-1zM7 5h1v1h-1zM9 5h1v1h-1zM1 6h2v1h-2zM5 6h1v1h-1zM7 6h1v1h-1zM9 6h1v1h-1zM0 7h1v1h-1zM2 7h1v1h-1zM4 7h1v1h-1zM7 7h1v1h-1zM10 7h1v1h-1zM2 8h2v1h-2zM7 8h1v1h-1zM10 8h1v1h-1zM2 9h1v1h-1zM7 9h1v1h-1zM2 10h1v1h-1zM6 10h2v1h-2z"/><path id="g101" d="M2 0h1v1h-1zM5 0h1v1h-1zM8 0h1v1h-1zM3 1h1v1h-1zM5 1h1v1h-1zM7 1h1v1h-1zM0 2h11v1h-11zM3 3h1v1h-1zM5 3h1v1h-1zM7 3h1v1h-1zM2 4h1v1h-1zM5 4h1v1h-1zM8 4h1v1h-1zM1 5h1v1h-1zM9 5h1v1h-1zM5 6h1v1h-1zM0 7h11v1h-11zM4 8h1v1h-1zM6 8h1v1h-1zM3 9h1v1h-1zM7 9h1v1h-1zM0 10h3v1h-3zM8 10h3v1h-3z"/><path id="g102" d="M1 0h6v1h-6zM9 0h1v1h-1zM2 1h1v1h-1zM4 1h1v1h-1zM7 1h1v1h-1zM9 1h1v1h-1zM2 2h1v1h-1zM4 2h1v1h-1zM7 2h1v1h-1zM9 2h1v1h-1zM0 3h8v1h-8zM9 3h1v1h-1zM2 4h1v1h-1zM4 4h1v1h-1zM7 4h1v1h-1zM9 4h1v1h-1zM2 5h1v1h-1zM4 5h1v1h-1zM9 5h1v1h-1zM1 6h1v1h-1zM4 6h2v1h-2zM8 6h2v1h-2zM5 7h1v1h-1zM2 8h7v1h-7zM5 9h1v1h-1zM0 10h11v1h-11z"/><path id="g103" d="M5 0h1v1h-1zM5 1h1v1h-1zM5 2h1v1h-1zM2 3h1v1h-1zM5 3h1v1h-1zM8 3h1v1h-1zM2 4h1v1h-1zM5 4h1v1h-1zM9 4h1v1h-1zM1 5h1v1h-1zM5 5h1v1h-1zM9 5h1v1h-1zM1 6h1v1h-1zM5 6h1v1h-1zM10 6h1v1h-1zM0 7h1v1h-1zM5 7h1v1h-1zM10 7h1v1h-1zM5 8h1v1h-1zM3 9h1v1h-1zM5 9h1v1h-1zM4 10h1v1h-1z"/><path id="g104" d="M0 0h1v1h-1zM3 0h1v1h-1zM5 0h1v1h-1zM7 0h1v1h-1zM1 1h1v1h-1zM3 1h2v1h-2zM7 1h1v1h-1zM0 2h6v1h-6zM7 2h4v1h-4zM2 3h2v1h-2zM6 3h2v1h-2zM9 3h1v1h-1zM1 4h1v1h-1zM3 4h2v1h-2zM7 4h1v1h-1zM9 4h1v1h-1zM0 5h1v1h-1zM3 5h1v1h-1zM5 5h1v1h-1zM7 5h1v1h-1zM9 5h1v1h-1zM0 6h6v1h-6zM7 6h1v1h-1zM9 6h1v1h-1zM2 7h1v1h-1zM4 7h1v1h-1zM7 7h1v1h-1zM9 7h1v1h-1zM1 8h2v1h-2zM4 8h1v1h-1zM8 8h1v1h-1zM3 9h1v1h-1zM7 9h1v1h-1zM9 9h1v1h-1zM0 10h3v1h-3zM4 10h3v1h-3zM10 10h1v1h-1z"/><path id="g105" d="M5 0h1v1h-1zM5 1h1v1h-1zM5 2h5v1h-5zM5 3h1v1h-1zM2 4h7v1h-7zM2 5h1v1h-1zM8 5h1v1h-1zM2 6h1v1h-1zM8 6h1v1h-1zM2 7h7v1h-7zM1 9h1v1h-1zM3 9h1v1h-1zM6 9h1v1h-1zM9 9h1v1h-1zM0 10h1v1h-1zM4 10h1v1h-1zM7 10h1v1h-1zM10 10h1v1h-1z"/><path id="g106" d="M3 0h1v1h-1zM6 0h1v1h-1zM3 1h1v1h-1zM7 1h1v1h-1zM2 2h1v1h-1zM2 3h1v1h-1zM4 3h7v1h-7zM1 4h2v1h-2zM0 5h1v1h-1zM2 5h1v1h-1zM5 5h1v1h-1zM9 5h1v1h-1zM2 6h1v1h-1zM6 6h1v1h-1zM9 6h1v1h-1zM2 7h1v1h-1zM6 7h1v1h-1zM8 7h1v1h-1zM2 8h1v1h-1zM8 8h1v1h-1zM2 9h1v1h-1zM7 9h1v1h-1zM2 10h1v1h-1zM4 10h7v1h-7z"/><path id="g107" d="M2 0h1v1h-1zM5 0h6v1h-6zM2 1h1v1h-1zM5 1h1v1h-1zM10 1h1v1h-1zM0 2h6v1h-6zM10 2h1v1h-1zM2 3h1v1h-1zM5 3h6v1h-6zM2 4h1v1h-1zM4 4h2v1h-2zM8 4h1v1h-1zM2 5h2v1h-2zM5 5h6v1h-6zM1 6h2v1h-2zM5 6h1v1h-1zM8 6h1v1h-1zM0 7h1v1h-1zM2 7h1v1h-1zM5 7h6v1h-6zM2 8h1v1h-1zM4 8h3v1h-3zM10 8h1v1h-1zM0 9h1v1h-1zM2 9h1v1h-1zM4 9h1v1h-1zM6 9h1v1h-1zM10 9h1v1h-1zM1 10h1v1h-1zM3 10h1v1h-1zM6 10h5v1h-5z"/><path id="g108" d="M2 0h1v1h-1zM7 0h1v1h-1zM0 1h1v1h-1zM2 1h1v1h-1zM4 1h7v1h-7zM1 2h3v1h-3zM7 2h1v1h-1zM2 3h1v1h-1zM5 3h5v1h-5zM0 4h4v1h-4zM7 4h1v1h-1zM2 5h1v1h-1zM4 5h7v1h-7zM1 6h3v1h-3zM5 6h1v1h-1zM9 6h1v1h-1zM1 7h2v1h-2zM4 7h6v1h-6zM0 8h1v1h-1zM2 8h1v1h-1zM5 8h1v1h-1zM9 8h1v1h-1zM2 9h1v1h-1zM5 9h5v1h-5zM2 10h1v1h-1zM5 10h1v1h-1zM9 10h1v1h-1z"/><path id="g109" d="M5 0h1v1h-1zM1 1h10v1h-10zM1 2h1v1h-1zM4 2h1v1h-1zM7 2h1v1h-1zM1 3h9v1h-9zM1 4h1v1h-1zM4 4h1v1h-1zM7 4h1v1h-1zM1 5h1v1h-1zM4 5h4v1h-4zM1 6h1v1h-1zM1 7h1v1h-1zM3 7h6v1h-6zM1 8h1v1h-1zM4 8h1v1h-1zM7 8h1v1h-1zM0 9h1v1h-1zM5 9h2v1h-2zM0 10h1v1h-1zM2 10h3v1h-3zM7 10h3v1h-3z"/><path id="g110" d="M0 0h5v1h-5zM7 0h1v1h-1zM0 1h1v1h-1zM2 1h1v1h-1zM4 1h1v1h-1zM7 1h2v1h-2zM0 2h5v1h-5zM7 2h1v1h-1zM9 2h1v1h-1zM0 3h1v1h-1zM2 3h1v1h-1zM4 3h7v1h-7zM0 4h5v1h-5zM7 4h1v1h-1zM2 5h1v1h-1zM7 5h1v1h-1zM0 6h5v1h-5zM7 6h1v1h-1zM2 7h1v1h-1zM6 7h1v1h-1zM8 7h1v1h-1zM0 8h5v1h-5zM6 8h1v1h-1zM8 8h1v1h-1zM1 9h1v1h-1zM3 9h1v1h-1zM5 9h1v1h-1zM9 9h1v1h-1zM0 10h1v1h-1zM2 10h1v1h-1zM4 10h1v1h-1zM10 10h1v1h-1z"/><path id="g111" d="M1 0h1v1h-1zM7 0h1v1h-1zM2 1h1v1h-1zM7 1h1v1h-1zM7 2h1v1h-1zM7 3h1v1h-1zM0 4h3v1h-3zM7 4h1v1h-1zM2 5h1v1h-1zM7 5h1v1h-1zM2 6h1v1h-1zM6 6h1v1h-1zM8 6h1v1h-1zM2 7h1v1h-1zM4 7h1v1h-1zM6 7h1v1h-1zM8 7h1v1h-1zM2 8h2v1h-2zM5 8h1v1h-1zM9 8h1v1h-1zM2 9h1v1h-1zM4 9h1v1h-1zM9 9h1v1h-1zM3 10h1v1h-1zM10 10h1v1h-1z"/><path id="g112" d="M3 0h1v1h-1zM7 0h1v1h-1zM3 1h8v1h-8zM2 2h1v1h-1zM6 2h1v1h-1zM2 3h1v1h-1zM5 3h5v1h-5zM1 4h2v1h-2zM5 4h1v1h-1zM9 4h1v1h-1zM0 5h1v1h-1zM2 5h1v1h-1zM5 5h5v1h-5zM2 6h1v1h-1zM5 6h1v1h-1zM9 6h1v1h-1zM2 7h1v1h-1zM5 7h3v1h-3zM9 7h1v1h-1zM2 8h1v1h-1zM5 8h1v1h-1zM7 8h3v1h-3zM2 9h1v1h-1zM5 9h1v1h-1zM9 9h1v1h-1zM2 10h1v1h-1zM4 10h7v1h-7z"/><path id="g113" d="M3 0h1v1h-1zM7 0h1v1h-1zM3 1h1v1h-1zM7 1h1v1h-1zM3 2h1v1h-1zM7 2h1v1h-1zM3 3h1v1h-1zM7 3h1v1h-1zM3 4h1v1h-1zM7 4h1v1h-1zM3 5h1v1h-1zM7 5h1v1h-1zM2 6h1v1h-1zM4 6h1v1h-1zM6 6h1v1h-1zM8 6h1v1h-1zM2 7h1v1h-1zM4 7h1v1h-1zM6 7h1v1h-1zM8 7h1v1h-1zM1 8h1v1h-1zM5 8h1v1h-1zM9 8h1v1h-1zM0 9h1v1h-1zM4 9h1v1h-1zM9 9h1v1h-1zM3 10h1v1h-1zM10 10h1v1h-1z"/><path id="g114" d="M5 0h1v1h-1zM5 1h1v1h-1zM5 2h1v1h-1zM5 3h1v1h-1zM5 4h5v1h-5zM5 5h1v1h-1zM5 6h1v1h-1zM5 7h1v1h-1zM5 8h1v1h-1zM5 9h1v1h-1zM0 10h11v1h-11z"/><path id="g115" d="M1 0h1v1h-1zM4 0h1v1h-1zM7 0h4v1h-4zM0 1h6v1h-6zM7 1h1v1h-1zM10 1h1v1h-1zM1 2h1v1h-1zM4 2h1v1h-1zM7 2h1v1h-1zM10 2h1v1h-1zM1 3h4v1h-4zM7 3h4v1h-4zM1 4h1v1h-1zM4 4h1v1h-1zM7 4h1v1h-1zM10 4h1v1h-1zM1 5h4v1h-4zM7 5h1v1h-1zM10 5h1v1h-1zM1 6h1v1h-1zM4 6h1v1h-1zM7 6h4v1h-4zM0 7h6v1h-6zM7 7h1v1h-1zM10 7h1v1h-1zM7 8h1v1h-1zM10 8h1v1h-1zM1 9h1v1h-1zM4 9h1v1h-1zM7 9h1v1h-1zM10 9h1v1h-1zM0 10h1v1h-1zM5 10h2v1h-2zM9 10h2v1h-2z"/><path id="g116" d="M2 0h1v1h-1zM6 0h1v1h-1zM8 0h1v1h-1zM2 1h1v1h-1zM6 1h1v1h-1zM8 1h1v1h-1zM0 2h7v1h-7zM8 2h3v1h-3zM2 3h1v1h-1zM6 3h1v1h-1zM8 3h1v1h-1zM2 4h1v1h-1zM6 4h1v1h-1zM8 4h1v1h-1zM2 5h5v1h-5zM8 5h3v1h-3zM1 6h2v1h-2zM6 6h1v1h-1zM8 6h1v1h-1zM0 7h1v1h-1zM2 7h1v1h-1zM6 7h1v1h-1zM8 7h1v1h-1zM2 8h1v1h-1zM4 8h3v1h-3zM8 8h3v1h-3zM2 9h1v1h-1zM6 9h1v1h-1zM8 9h1v1h-1zM0 10h3v1h-3zM6 10h1v1h-1zM8 10h1v1h-1z"/><path id="g117" d="M5 0h1v1h-1zM1 1h10v1h-10zM1 2h1v1h-1zM1 3h1v1h-1zM3 3h6v1h-6zM1 4h1v1h-1zM5 4h1v1h-1zM7 4h1v1h-1zM1 5h1v1h-1zM6 5h1v1h-1zM1 6h10v1h-10zM1 7h1v1h-1zM6 7h1v1h-1zM9 7h1v1h-1zM1 8h1v1h-1zM6 8h1v1h-1zM0 9h1v1h-1zM6 9h1v1h-1zM0 10h1v1h-1zM4 10h3v1h-3z"/><path id="g118" d="M1 0h1v1h-1zM7 0h1v1h-1zM2 1h1v1h-1zM7 1h1v1h-1zM7 2h1v1h-1zM4 3h7v1h-7zM0 4h3v1h-3zM7 4h1v1h-1zM2 5h1v1h-1zM7 5h1v1h-1zM2 6h1v1h-1zM7 6h1v1h-1zM2 7h1v1h-1zM4 7h1v1h-1zM7 7h1v1h-1zM2 8h2v1h-2zM7 8h1v1h-1zM2 9h1v1h-1zM7 9h1v1h-1zM7 10h1v1h-1z"/><path id="g119" d="M1 0h4v1h-4zM6 0h5v1h-5zM1 1h1v1h-1zM3 1h1v1h-1zM6 1h1v1h-1zM9 1h1v1h-1zM0 2h1v1h-1zM2 2h7v1h-7zM2 3h1v1h-1zM8 3h1v1h-1zM2 4h7v1h-7zM2 5h1v1h-1zM8 5h1v1h-1zM2 6h7v1h-7zM3 7h1v1h-1zM7 7h1v1h-1zM0 8h11v1h-11zM3 9h1v1h-1zM7 9h1v1h-1zM1 10h2v1h-2zM7 10h1v1h-1z"/><path id="g120" d="M7 0h1v1h-1zM3 1h1v1h-1zM7 1h1v1h-1zM3 2h1v1h-1zM8 2h1v1h-1zM2 3h1v1h-1zM8 3h1v1h-1zM2 4h1v1h-1zM5 4h1v1h-1zM9 4h1v1h-1zM1 5h1v1h-1zM5 5h1v1h-1zM10 5h1v1h-1zM0 6h1v1h-1zM4 6h1v1h-1zM4 7h1v1h-1zM7 7h1v1h-1zM3 8h1v1h-1zM8 8h1v1h-1zM2 9h8v1h-8zM3 10h1v1h-1zM9 10h1v1h-1z"/><path id="g121" d="M5 0h1v1h-1zM5 1h1v1h-1zM0 2h11v1h-11zM4 3h3v1h-3zM3 4h1v1h-1zM5 4h1v1h-1zM7 4h1v1h-1zM3 5h1v1h-1zM5 5h1v1h-1zM7 5h1v1h-1zM2 6h1v1h-1zM5 6h1v1h-1zM8 6h1v1h-1zM1 7h1v1h-1zM5 7h1v1h-1zM9 7h1v1h-1zM0 8h1v1h-1zM3 8h5v1h-5zM10 8h1v1h-1zM5 9h1v1h-1zM5 10h1v1h-1z"/><path id="g122" d="M1 0h1v1h-1zM7 0h1v1h-1zM1 1h1v1h-1zM6 1h1v1h-1zM8 1h1v1h-1zM0 2h4v1h-4zM5 2h1v1h-1zM9 2h1v1h-1zM1 3h1v1h-1zM4 3h1v1h-1zM6 3h3v1h-3zM10 3h1v1h-1zM0 4h1v1h-1zM2 4h1v1h-1zM0 5h7v1h-7zM10 5h1v1h-1zM2 6h1v1h-1zM4 6h1v1h-1zM6 6h1v1h-1zM8 6h1v1h-1zM10 6h1v1h-1zM2 7h5v1h-5zM8 7h1v1h-1zM10 7h1v1h-1zM0 8h3v1h-3zM4 8h1v1h-1zM6 8h1v1h-1zM8 8h1v1h-1zM10 8h1v1h-1zM2 9h1v1h-1zM4 9h3v1h-3zM8 9h1v1h-1zM10 9h1v1h-1zM2 10h1v1h-1zM4 10h1v1h-1zM6 10h1v1h-1zM9 10h2v1h-2z"/><path id="g123" d="M3 0h2v1h-2zM5 1h1v1h-1zM5 2h1v1h-1zM5 3h1v1h-1zM4 4h1v1h-1zM6 4h1v1h-1zM4 5h1v1h-1zM6 5h1v1h-1zM3 6h1v1h-1zM7 6h1v1h-1zM3 7h1v1h-1zM7 7h1v1h-1zM2 8h1v1h-1zM8 8h1v1h-1zM1 9h1v1h-1zM9 9h1v1h-1zM0 10h1v1h-1zM10 10h1v1h-1z"/><path id="g124" d="M1 0h3v1h-3zM0 1h1v1h-1zM4 1h1v1h-1zM4 2h1v1h-1zM3 3h1v1h-1zM1 4h2v1h-2zM0 5h1v1h-1zM0 6h5v1h-5z"/><path id="g125" d="M0 0h9v1h-9zM0 1h1v1h-1zM3 1h1v1h-1zM5 1h1v1h-1zM8 1h1v1h-1zM0 2h1v1h-1zM3 2h1v1h-1zM5 2h1v1h-1zM8 2h1v1h-1zM0 3h1v1h-1zM3 3h1v1h-1zM5 3h1v1h-1zM8 3h1v1h-1zM0 4h1v1h-1zM3 4h1v1h-1zM5 4h1v1h-1zM8 4h1v1h-1zM0 5h1v1h-1zM2 5h1v1h-1zM5 5h4v1h-4zM0 6h2v1h-2zM8 6h1v1h-1zM0 7h1v1h-1zM8 7h1v1h-1zM0 8h9v1h-9zM0 9h1v1h-1zM8 9h1v1h-1z"/><path id="g126" d="M5 0h1v1h-1zM4 1h1v1h-1zM6 1h1v1h-1zM3 2h1v1h-1zM7 2h1v1h-1zM2 3h7v1h-7zM0 4h2v1h-2zM5 4h1v1h-1zM9 4h2v1h-2zM2 5h7v1h-7zM5 6h1v1h-1zM2 7h7v1h-7zM2 8h1v1h-1zM8 8h1v1h-1zM2 9h1v1h-1zM8 9h1v1h-1zM2 10h7v1h-7z"/><path id="g127" d="M1 0h9v1h-9zM5 1h1v1h-1zM5 2h1v1h-1zM5 3h1v1h-1zM2 4h7v1h-7zM4 5h1v1h-1zM8 5h1v1h-1zM4 6h1v1h-1zM8 6h1v1h-1zM4 7h1v1h-1zM8 7h1v1h-1zM4 8h1v1h-1zM8 8h1v1h-1zM0 9h11v1h-11z"/><path id="g128" d="M2 0h1v1h-1zM0 1h3v1h-3zM2 2h1v1h-1zM2 3h1v1h-1zM2 4h1v1h-1zM2 5h1v1h-1zM0 6h5v1h-5z"/><path id="g129" d="M0 0h1v1h-1zM4 0h1v1h-1zM8 0h1v1h-1zM0 1h1v1h-1zM4 1h1v1h-1zM8 1h1v1h-1zM0 2h9v1h-9zM0 4h9v1h-9zM0 5h1v1h-1zM2 5h1v1h-1zM6 5h1v1h-1zM8 5h1v1h-1zM0 6h1v1h-1zM3 6h1v1h-1zM5 6h1v1h-1zM8 6h1v1h-1zM0 7h1v1h-1zM4 7h2v1h-2zM8 7h1v1h-1zM0 8h1v1h-1zM3 8h1v1h-1zM6 8h1v1h-1zM8 8h1v1h-1zM0 9h1v1h-1zM2 9h1v1h-1zM8 9h1v1h-1zM0 10h1v1h-1zM7 10h2v1h-2z"/><path id="g130" d="M1 0h1v1h-1zM7 0h1v1h-1zM2 1h1v1h-1zM7 1h1v1h-1zM0 2h5v1h-5zM7 2h1v1h-1zM3 3h1v1h-1zM7 3h1v1h-1zM2 4h1v1h-1zM4 4h1v1h-1zM7 4h2v1h-2zM1 5h3v1h-3zM7 5h1v1h-1zM9 5h2v1h-2zM0 6h1v1h-1zM2 6h1v1h-1zM4 6h1v1h-1zM7 6h1v1h-1zM10 6h1v1h-1zM2 7h1v1h-1zM4 7h1v1h-1zM7 7h1v1h-1zM2 8h1v1h-1zM7 8h1v1h-1zM2 9h1v1h-1zM7 9h1v1h-1zM2 10h1v1h-1zM7 10h1v1h-1z"/><path id="g131" d="M0 0h5v1h-5zM8 0h1v1h-1zM0 1h1v1h-1zM4 1h1v1h-1zM8 1h1v1h-1zM0 2h1v1h-1zM2 2h1v1h-1zM4 2h1v1h-1zM8 2h3v1h-3zM0 3h1v1h-1zM2 3h1v1h-1zM4 3h1v1h-1zM8 3h1v1h-1zM0 4h1v1h-1zM2 4h1v1h-1zM4 4h1v1h-1zM8 4h1v1h-1zM0 5h1v1h-1zM2 5h1v1h-1zM4 5h1v1h-1zM6 5h5v1h-5zM0 6h1v1h-1zM2 6h1v1h-1zM4 6h1v1h-1zM6 6h1v1h-1zM10 6h1v1h-1zM0 7h1v1h-1zM2 7h1v1h-1zM4 7h1v1h-1zM6 7h1v1h-1zM10 7h1v1h-1zM2 8h1v1h-1zM6 8h1v1h-1zM10 8h1v1h-1zM1 9h1v1h-1zM3 9h1v1h-1zM6 9h5v1h-5zM0 10h1v1h-1zM4 10h1v1h-1zM6 10h1v1h-1zM10 10h1v1h-1z"/><path id="g132" d="M2 0h1v1h-1zM2 1h7v1h-7zM1 2h1v1h-1zM5 2h1v1h-1zM0 3h1v1h-1zM5 3h1v1h-1zM5 4h1v1h-1zM0 5h10v1h-10zM5 6h1v1h-1zM5 7h1v1h-1zM5 8h1v1h-1zM5 9h1v1h-1zM5 10h1v1h-1z"/><path id="g133" d="M2 0h9v1h-9zM2 1h1v1h-1zM6 1h1v1h-1zM9 1h1v1h-1zM1 2h3v1h-3zM5 2h1v1h-1zM7 2h2v1h-2zM0 3h1v1h-1zM2 3h1v1h-1zM4 3h1v1h-1zM6 3h1v1h-1zM9 3h1v1h-1zM1 4h1v1h-1zM3 4h7v1h-7zM0 5h1v1h-1zM2 5h2v1h-2zM8 5h1v1h-1zM10 5h1v1h-1zM1 6h1v1h-1zM3 6h6v1h-6zM3 7h1v1h-1zM8 7h1v1h-1zM3 8h6v1h-6zM10 8h1v1h-1zM3 9h1v1h-1zM5 9h1v1h-1zM7 9h1v1h-1zM9 9h1v1h-1zM3 10h2v1h-2zM8 10h3v1h-3z"/><path id="g134" d="M1 0h3v1h-3zM0 1h1v1h-1zM4 1h1v1h-1zM4 2h1v1h-1zM2 3h2v1h-2zM4 4h1v1h-1zM0 5h1v1h-1zM4 5h1v1h-1zM1 6h4v1h-4z"/><path id="g135" d="M1 0h1v1h-1zM4 0h6v1h-6zM2 1h1v1h-1zM6 1h1v1h-1zM8 1h1v1h-1zM2 2h1v1h-1zM4 2h7v1h-7zM4 3h1v1h-1zM7 3h1v1h-1zM10 3h1v1h-1zM0 4h3v1h-3zM4 4h7v1h-7zM2 5h1v1h-1zM4 5h1v1h-1zM7 5h1v1h-1zM10 5h1v1h-1zM2 6h1v1h-1zM4 6h7v1h-7zM2 7h1v1h-1zM4 7h1v1h-1zM7 7h1v1h-1zM10 7h1v1h-1zM2 8h1v1h-1zM4 8h1v1h-1zM7 8h1v1h-1zM9 8h2v1h-2zM1 9h1v1h-1zM3 9h1v1h-1zM0 10h1v1h-1zM4 10h7v1h-7z"/><path id="g136" d="M0 0h1v1h-1zM3 0h6v1h-6zM1 1h1v1h-1zM5 1h1v1h-1zM8 1h1v1h-1zM1 2h1v1h-1zM5 2h1v1h-1zM8 2h1v1h-1zM5 3h1v1h-1zM8 3h1v1h-1zM0 4h2v1h-2zM5 4h1v1h-1zM8 4h1v1h-1zM1 5h1v1h-1zM3 5h6v1h-6zM1 6h1v1h-1zM5 6h1v1h-1zM8 6h1v1h-1zM1 7h1v1h-1zM3 7h1v1h-1zM5 7h1v1h-1zM8 7h1v1h-1zM10 7h1v1h-1zM1 8h2v1h-2zM5 8h1v1h-1zM8 8h1v1h-1zM10 8h1v1h-1zM1 9h1v1h-1zM5 9h1v1h-1zM9 9h2v1h-2zM5 10h1v1h-1zM10 10h1v1h-1z"/><path id="g137" d="M3 0h1v1h-1zM2 1h2v1h-2zM1 2h1v1h-1zM3 2h1v1h-1zM0 3h1v1h-1zM3 3h1v1h-1zM0 4h5v1h-5zM3 5h1v1h-1zM3 6h1v1h-1z"/><path id="g138" d="M5 0h1v1h-1zM6 1h1v1h-1zM1 2h10v1h-10zM1 3h1v1h-1zM1 4h1v1h-1zM5 4h1v1h-1zM9 4h1v1h-1zM1 5h1v1h-1zM3 5h1v1h-1zM6 5h1v1h-1zM9 5h1v1h-1zM1 6h1v1h-1zM4 6h1v1h-1zM6 6h1v1h-1zM9 6h1v1h-1zM1 7h1v1h-1zM4 7h1v1h-1zM8 7h1v1h-1zM1 8h1v1h-1zM8 8h1v1h-1zM0 9h1v1h-1zM7 9h1v1h-1zM0 10h1v1h-1zM3 10h8v1h-8z"/><path id="g139" d="M0 0h5v1h-5zM0 1h1v1h-1zM0 2h4v1h-4zM4 3h1v1h-1zM4 4h1v1h-1zM0 5h1v1h-1zM4 5h1v1h-1zM1 6h3v1h-3z"/><path id="g140" d="M2 0h3v1h-3zM2 1h1v1h-1zM2 2h1v1h-1zM2 3h1v1h-1zM2 4h1v1h-1zM0 5h2v1h-2zM2 6h1v1h-1zM2 7h1v1h-1zM2 8h1v1h-1zM2 9h3v1h-3z"/><path id="g141" d="M0 0h3v1h-3zM2 1h1v1h-1zM2 2h1v1h-1zM2 3h1v1h-1zM2 4h1v1h-1zM3 5h2v1h-2zM2 6h1v1h-1zM2 7h1v1h-1zM2 8h1v1h-1zM0 9h3v1h-3z"/><path id="g142" d="M2 0h1v1h-1zM2 1h1v1h-1zM0 2h5v1h-5zM2 3h1v1h-1zM2 4h1v1h-1z"/><path id="g143" d="M3 0h1v1h-1zM7 0h1v1h-1zM1 1h9v1h-9zM5 2h1v1h-1zM1 3h9v1h-9zM4 4h1v1h-1zM0 5h11v1h-11zM3 6h1v1h-1zM7 6h1v1h-1zM2 7h2v1h-2zM7 7h2v1h-2zM0 8h2v1h-2zM3 8h1v1h-1zM7 8h1v1h-1zM9 8h2v1h-2zM3 9h1v1h-1zM7 9h1v1h-1zM2 10h1v1h-1zM7 10h1v1h-1z"/><path id="g144" d="M5 0h1v1h-1zM5 1h1v1h-1zM9 1h1v1h-1zM2 2h7v1h-7zM5 3h1v1h-1zM7 3h1v1h-1zM0 4h11v1h-11zM4 5h1v1h-1zM3 6h2v1h-2zM7 6h2v1h-2zM2 7h1v1h-1zM4 7h3v1h-3zM0 8h2v1h-2zM4 8h1v1h-1zM9 8h1v1h-1zM4 9h1v1h-1zM9 9h1v1h-1zM5 10h5v1h-5z"/><path id="g145" d="M5 0h1v1h-1zM4 1h1v1h-1zM6 1h1v1h-1zM3 2h1v1h-1zM7 2h1v1h-1zM2 3h1v1h-1zM8 3h1v1h-1zM0 4h2v1h-2zM3 4h5v1h-5zM9 4h2v1h-2zM5 5h1v1h-1zM1 6h9v1h-9zM5 7h1v1h-1zM2 8h1v1h-1zM5 8h1v1h-1zM8 8h1v1h-1zM3 9h1v1h-1zM5 9h1v1h-1zM7 9h1v1h-1zM0 10h11v1h-11z"/><path id="g146" d="M1 0h3v1h-3zM0 1h2v1h-2zM4 1h1v1h-1zM0 2h1v1h-1zM0 3h5v1h-5zM0 4h1v1h-1zM4 4h1v1h-1zM0 5h1v1h-1zM4 5h1v1h-1zM1 6h3v1h-3z"/><path id="g147" d="M3 0h2v1h-2zM0 1h3v1h-3zM6 1h5v1h-5zM2 2h1v1h-1zM6 2h1v1h-1zM10 2h1v1h-1zM0 3h5v1h-5zM6 3h1v1h-1zM10 3h1v1h-1zM2 4h1v1h-1zM6 4h1v1h-1zM10 4h1v1h-1zM1 5h3v1h-3zM6 5h5v1h-5zM1 6h2v1h-2zM4 6h1v1h-1zM0 7h1v1h-1zM2 7h1v1h-1zM6 7h1v1h-1zM9 7h1v1h-1zM0 8h1v1h-1zM2 8h1v1h-1zM6 8h1v1h-1zM9 8h1v1h-1zM2 9h1v1h-1zM5 9h1v1h-1zM10 9h1v1h-1zM2 10h1v1h-1zM4 10h1v1h-1zM10 10h1v1h-1z"/><path id="g148" d="M0 0h5v1h-5zM4 1h1v1h-1zM3 2h1v1h-1zM2 3h1v1h-1zM2 4h1v1h-1zM2 5h1v1h-1zM1 6h1v1h-1z"/><path id="g149" d="M6 0h1v1h-1zM2 1h9v1h-9zM0 2h1v1h-1zM2 2h1v1h-1zM1 3h10v1h-10zM2 4h1v1h-1zM7 4h1v1h-1zM1 5h2v1h-2zM4 5h7v1h-7zM0 6h1v1h-1zM2 6h1v1h-1zM4 6h1v1h-1zM7 6h1v1h-1zM10 6h1v1h-1zM2 7h1v1h-1zM4 7h1v1h-1zM6 7h1v1h-1zM8 7h1v1h-1zM10 7h1v1h-1zM2 8h1v1h-1zM4 8h2v1h-2zM9 8h2v1h-2zM1 9h1v1h-1zM4 9h1v1h-1zM10 9h1v1h-1zM0 10h1v1h-1zM4 10h1v1h-1zM8 10h3v1h-3z"/><path id="g150" d="M2 0h1v1h-1zM4 0h3v1h-3zM8 0h3v1h-3zM2 1h1v1h-1zM4 1h1v1h-1zM6 1h1v1h-1zM10 1h1v1h-1zM2 2h1v1h-1zM4 2h1v1h-1zM6 2h1v1h-1zM10 2h1v1h-1zM2 3h1v1h-1zM4 3h3v1h-3zM8 3h3v1h-3zM1 4h2v1h-2zM4 4h1v1h-1zM0 5h1v1h-1zM2 5h1v1h-1zM4 5h3v1h-3zM8 5h3v1h-3zM2 6h1v1h-1zM4 6h1v1h-1zM8 6h1v1h-1zM10 6h1v1h-1zM2 7h1v1h-1zM4 7h3v1h-3zM8 7h1v1h-1zM10 7h1v1h-1zM2 8h1v1h-1zM4 8h1v1h-1zM9 8h1v1h-1zM2 9h1v1h-1zM4 9h1v1h-1zM8 9h2v1h-2zM2 10h1v1h-1zM4 10h1v1h-1zM7 10h1v1h-1zM10 10h1v1h-1z"/><path id="g151" d="M2 0h1v1h-1zM2 1h1v1h-1zM6 1h5v1h-5zM0 2h5v1h-5zM6 2h1v1h-1zM10 2h1v1h-1zM2 3h1v1h-1zM6 3h1v1h-1zM10 3h1v1h-1zM2 4h1v1h-1zM4 4h1v1h-1zM6 4h1v1h-1zM10 4h1v1h-1zM2 5h2v1h-2zM6 5h1v1h-1zM10 5h1v1h-1zM1 6h2v1h-2zM6 6h1v1h-1zM10 6h1v1h-1zM0 7h1v1h-1zM2 7h1v1h-1zM6 7h1v1h-1zM10 7h1v1h-1zM2 8h1v1h-1zM6 8h1v1h-1zM10 8h1v1h-1zM2 9h1v1h-1zM6 9h5v1h-5zM0 10h3v1h-3z"/><path id="g152" d="M3 0h1v1h-1zM7 0h1v1h-1zM0 1h6v1h-6zM7 1h1v1h-1zM3 2h1v1h-1zM7 2h4v1h-4zM1 3h4v1h-4zM6 3h1v1h-1zM10 3h1v1h-1zM8 4h1v1h-1zM10 4h1v1h-1zM1 5h4v1h-4zM8 5h1v1h-1zM8 6h1v1h-1zM0 7h6v1h-6zM8 7h1v1h-1zM1 8h1v1h-1zM3 8h1v1h-1zM5 8h1v1h-1zM7 8h1v1h-1zM9 8h1v1h-1zM0 9h1v1h-1zM3 9h1v1h-1zM6 9h1v1h-1zM9 9h1v1h-1zM1 10h3v1h-3zM5 10h1v1h-1zM10 10h1v1h-1z"/><path id="g153" d="M1 0h3v1h-3zM0 1h1v1h-1zM4 1h1v1h-1zM0 2h1v1h-1zM4 2h1v1h-1zM1 3h3v1h-3zM0 4h1v1h-1zM4 4h1v1h-1zM0 5h1v1h-1zM4 5h1v1h-1zM0 6h5v1h-5z"/><path id="g154" d="M4 0h1v1h-1zM4 1h1v1h-1zM3 2h1v1h-1zM5 2h1v1h-1zM2 3h1v1h-1zM6 3h1v1h-1zM1 4h1v1h-1zM4 4h1v1h-1zM7 4h1v1h-1zM0 5h1v1h-1zM4 5h1v1h-1zM8 5h2v1h-2zM4 6h1v1h-1zM4 7h1v1h-1zM4 8h1v1h-1zM4 9h1v1h-1zM4 10h1v1h-1z"/><path id="g155" d="M5 0h1v1h-1zM5 1h1v1h-1zM5 2h1v1h-1zM5 3h1v1h-1zM5 4h1v1h-1zM5 5h1v1h-1zM4 6h1v1h-1zM6 6h1v1h-1zM4 7h1v1h-1zM6 7h1v1h-1zM3 8h1v1h-1zM7 8h1v1h-1zM2 9h1v1h-1zM8 9h1v1h-1zM0 10h2v1h-2zM9 10h2v1h-2z"/><path id="g156" d="M3 0h2v1h-2zM9 0h2v1h-2zM1 1h2v1h-2zM6 1h3v1h-3zM1 2h1v1h-1zM6 2h1v1h-1zM1 3h4v1h-4zM6 3h1v1h-1zM1 4h1v1h-1zM4 4h1v1h-1zM6 4h5v1h-5zM1 5h1v1h-1zM4 5h1v1h-1zM6 5h1v1h-1zM9 5h1v1h-1zM1 6h4v1h-4zM6 6h1v1h-1zM9 6h1v1h-1zM1 7h1v1h-1zM6 7h1v1h-1zM9 7h1v1h-1zM1 8h1v1h-1zM6 8h1v1h-1zM9 8h1v1h-1zM1 9h1v1h-1zM5 9h1v1h-1zM9 9h1v1h-1zM0 10h1v1h-1zM4 10h1v1h-1zM9 10h1v1h-1z"/><path id="g157" d="M2 0h1v1h-1zM5 0h5v1h-5zM2 1h1v1h-1zM5 1h1v1h-1zM9 1h1v1h-1zM1 2h1v1h-1zM5 2h5v1h-5zM0 3h1v1h-1zM3 3h1v1h-1zM5 3h1v1h-1zM9 3h1v1h-1zM2 4h1v1h-1zM5 4h5v1h-5zM1 5h2v1h-2zM0 6h1v1h-1zM2 6h1v1h-1zM5 6h6v1h-6zM2 7h1v1h-1zM8 7h1v1h-1zM2 8h1v1h-1zM4 8h7v1h-7zM2 9h1v1h-1zM5 9h1v1h-1zM8 9h1v1h-1zM2 10h1v1h-1zM7 10h2v1h-2z"/><path id="g158" d="M3 0h1v1h-1zM5 0h1v1h-1zM9 0h1v1h-1zM0 1h3v1h-3zM6 1h1v1h-1zM8 1h1v1h-1zM2 2h1v1h-1zM5 2h5v1h-5zM0 3h6v1h-6zM9 3h1v1h-1zM2 4h1v1h-1zM5 4h1v1h-1zM9 4h1v1h-1zM1 5h3v1h-3zM5 5h5v1h-5zM1 6h2v1h-2zM4 6h1v1h-1zM6 6h1v1h-1zM8 6h1v1h-1zM0 7h1v1h-1zM2 7h1v1h-1zM6 7h1v1h-1zM8 7h1v1h-1zM2 8h1v1h-1zM6 8h1v1h-1zM8 8h1v1h-1zM10 8h1v1h-1zM2 9h1v1h-1zM5 9h1v1h-1zM8 9h1v1h-1zM10 9h1v1h-1zM2 10h1v1h-1zM4 10h1v1h-1zM8 10h3v1h-3z"/><path id="g159" d="M1 0h3v1h-3zM0 1h1v1h-1zM4 1h1v1h-1zM0 2h1v1h-1zM4 2h1v1h-1zM1 3h4v1h-4zM4 4h1v1h-1zM0 5h1v1h-1zM3 5h2v1h-2zM1 6h3v1h-3z"/><path id="g160" d="M2 0h1v1h-1zM0 1h7v1h-7zM0 2h1v1h-1zM6 2h1v1h-1zM0 3h1v1h-1zM6 3h1v1h-1zM0 4h7v1h-7zM0 5h1v1h-1zM6 5h1v1h-1zM0 6h7v1h-7zM0 7h1v1h-1zM6 7h1v1h-1zM0 8h1v1h-1zM6 8h1v1h-1zM0 9h7v1h-7zM0 10h1v1h-1zM6 10h1v1h-1z"/><path id="g161" d="M5 0h1v1h-1zM1 1h10v1h-10zM1 2h1v1h-1zM10 2h1v1h-1zM0 3h1v1h-1zM9 3h1v1h-1zM2 4h8v1h-8zM5 5h1v1h-1zM2 6h1v1h-1zM5 6h1v1h-1zM2 7h1v1h-1zM5 7h4v1h-4zM2 8h1v1h-1zM5 8h1v1h-1zM1 9h1v1h-1zM3 9h1v1h-1zM5 9h1v1h-1zM0 10h1v1h-1zM4 10h7v1h-7z"/><path id="g162" d="M4 0h1v1h-1zM8 0h1v1h-1zM2 1h1v1h-1zM5 1h1v1h-1zM8 1h1v1h-1zM2 2h1v1h-1zM5 2h1v1h-1zM8 2h1v1h-1zM2 3h1v1h-1zM7 3h1v1h-1zM3 4h1v1h-1zM7 4h1v1h-1zM3 5h1v1h-1zM6 5h1v1h-1zM4 6h1v1h-1zM6 6h1v1h-1zM5 7h1v1h-1zM4 8h1v1h-1zM6 8h1v1h-1zM2 9h2v1h-2zM7 9h2v1h-2zM0 10h2v1h-2zM9 10h2v1h-2z"/><path id="g163" d="M1 0h3v1h-3zM0 1h1v1h-1zM4 1h1v1h-1zM0 2h1v1h-1zM4 2h1v1h-1zM0 3h1v1h-1zM2 3h1v1h-1zM4 3h1v1h-1zM0 4h1v1h-1zM4 4h1v1h-1zM0 5h1v1h-1zM4 5h1v1h-1zM1 6h3v1h-3z"/><path id="g164" d="M6 0h1v1h-1zM1 1h10v1h-10zM1 2h1v1h-1zM3 2h1v1h-1zM10 2h1v1h-1zM0 3h1v1h-1zM4 3h1v1h-1zM6 3h1v1h-1zM9 3h1v1h-1zM2 4h1v1h-1zM6 4h1v1h-1zM3 5h1v1h-1zM6 5h1v1h-1zM1 6h10v1h-10zM6 7h1v1h-1zM5 8h1v1h-1zM7 8h1v1h-1zM4 9h1v1h-1zM8 9h1v1h-1zM1 10h3v1h-3zM9 10h2v1h-2z"/><path id="g165" d="M0 0h3v1h-3z"/><path id="g166" d="M4 0h1v1h-1zM3 1h1v1h-1zM0 2h10v1h-10zM0 3h1v1h-1zM9 3h1v1h-1zM0 4h1v1h-1zM3 4h4v1h-4zM9 4h1v1h-1zM0 5h1v1h-1zM3 5h1v1h-1zM6 5h1v1h-1zM9 5h1v1h-1zM0 6h1v1h-1zM3 6h1v1h-1zM6 6h1v1h-1zM9 6h1v1h-1zM0 7h1v1h-1zM3 7h4v1h-4zM9 7h1v1h-1zM0 8h1v1h-1zM9 8h1v1h-1zM0 9h1v1h-1zM9 9h1v1h-1zM0 10h1v1h-1zM7 10h3v1h-3z"/><path id="g167" d="M3 0h1v1h-1zM7 0h1v1h-1zM0 1h3v1h-3zM6 1h5v1h-5zM2 2h1v1h-1zM5 2h1v1h-1zM10 2h1v1h-1zM0 3h5v1h-5zM6 3h1v1h-1zM9 3h1v1h-1zM2 4h1v1h-1zM7 4h2v1h-2zM2 5h2v1h-2zM5 5h2v1h-2zM8 5h1v1h-1zM2 6h1v1h-1zM4 6h1v1h-1zM7 6h4v1h-4zM1 7h2v1h-2zM6 7h1v1h-1zM10 7h1v1h-1zM0 8h1v1h-1zM2 8h1v1h-1zM5 8h1v1h-1zM7 8h1v1h-1zM9 8h1v1h-1zM2 9h1v1h-1zM8 9h1v1h-1zM2 10h1v1h-1zM5 10h3v1h-3z"/><path id="g168" d="M7 0h1v1h-1zM1 1h4v1h-4zM7 1h1v1h-1zM7 2h1v1h-1zM6 3h5v1h-5zM0 4h6v1h-6zM7 4h1v1h-1zM10 4h1v1h-1zM2 5h1v1h-1zM7 5h1v1h-1zM10 5h1v1h-1zM2 6h1v1h-1zM7 6h1v1h-1zM10 6h1v1h-1zM1 7h1v1h-1zM4 7h1v1h-1zM7 7h1v1h-1zM10 7h1v1h-1zM0 8h5v1h-5zM6 8h1v1h-1zM10 8h1v1h-1zM4 9h1v1h-1zM6 9h1v1h-1zM10 9h1v1h-1zM5 10h1v1h-1zM8 10h2v1h-2z"/><path id="g169" d="M2 0h1v1h-1zM7 0h1v1h-1zM2 1h1v1h-1zM4 1h7v1h-7zM1 2h1v1h-1zM4 2h1v1h-1zM10 2h1v1h-1zM1 3h1v1h-1zM3 3h8v1h-8zM0 4h3v1h-3zM4 4h1v1h-1zM2 5h1v1h-1zM4 5h7v1h-7zM1 6h1v1h-1zM4 6h1v1h-1zM6 6h1v1h-1zM8 6h1v1h-1zM10 6h1v1h-1zM0 7h11v1h-11zM4 8h1v1h-1zM6 8h1v1h-1zM8 8h1v1h-1zM10 8h1v1h-1zM2 9h3v1h-3zM6 9h1v1h-1zM8 9h1v1h-1zM10 9h1v1h-1zM0 10h2v1h-2zM4 10h1v1h-1zM9 10h2v1h-2z"/><path id="g170" d="M2 0h7v1h-7zM2 1h1v1h-1zM8 1h1v1h-1zM2 2h7v1h-7zM0 4h11v1h-11zM4 5h1v1h-1zM3 6h6v1h-6zM8 7h1v1h-1zM8 8h1v1h-1zM5 9h1v1h-1zM8 9h1v1h-1zM6 10h2v1h-2z"/><path id="g171" d="M2 0h1v1h-1zM8 0h1v1h-1zM2 1h1v1h-1zM6 1h1v1h-1zM8 1h1v1h-1zM0 2h5v1h-5zM6 2h1v1h-1zM8 2h1v1h-1zM2 3h1v1h-1zM4 3h1v1h-1zM6 3h5v1h-5zM2 4h1v1h-1zM4 4h2v1h-2zM8 4h1v1h-1zM1 5h1v1h-1zM4 5h1v1h-1zM8 5h1v1h-1zM1 6h1v1h-1zM3 6h1v1h-1zM6 6h5v1h-5zM2 7h2v1h-2zM8 7h1v1h-1zM2 8h1v1h-1zM4 8h1v1h-1zM8 8h1v1h-1zM1 9h1v1h-1zM4 9h1v1h-1zM8 9h1v1h-1zM0 10h1v1h-1zM5 10h6v1h-6z"/><path id="g172" d="M3 0h1v1h-1zM7 0h4v1h-4zM0 1h8v1h-8zM10 1h1v1h-1zM1 2h1v1h-1zM5 2h1v1h-1zM7 2h1v1h-1zM10 2h1v1h-1zM2 3h1v1h-1zM4 3h1v1h-1zM7 3h1v1h-1zM9 3h1v1h-1zM0 4h9v1h-9zM7 5h1v1h-1zM9 5h1v1h-1zM1 6h5v1h-5zM7 6h1v1h-1zM10 6h1v1h-1zM1 7h1v1h-1zM5 7h1v1h-1zM7 7h1v1h-1zM10 7h1v1h-1zM1 8h1v1h-1zM5 8h1v1h-1zM7 8h2v1h-2zM10 8h1v1h-1zM1 9h5v1h-5zM7 9h1v1h-1zM9 9h1v1h-1zM1 10h1v1h-1zM5 10h1v1h-1zM7 10h1v1h-1z"/><path id="g173" d="M1 0h1v1h-1zM4 0h6v1h-6zM2 1h1v1h-1zM9 1h1v1h-1zM0 2h1v1h-1zM9 2h1v1h-1zM0 3h1v1h-1zM9 3h1v1h-1zM0 4h1v1h-1zM9 4h1v1h-1zM0 5h1v1h-1zM9 5h1v1h-1zM0 6h1v1h-1zM9 6h1v1h-1zM0 7h1v1h-1zM9 7h1v1h-1zM0 8h1v1h-1zM9 8h1v1h-1zM0 9h1v1h-1zM9 9h1v1h-1zM0 10h1v1h-1zM7 10h3v1h-3z"/><path id="g174" d="M0 0h11v1h-11zM1 1h1v1h-1zM4 1h1v1h-1zM6 1h1v1h-1zM10 1h1v1h-1zM1 2h1v1h-1zM4 2h1v1h-1zM6 2h1v1h-1zM10 2h1v1h-1zM1 3h4v1h-4zM6 3h1v1h-1zM10 3h1v1h-1zM1 4h1v1h-1zM4 4h1v1h-1zM6 4h1v1h-1zM10 4h1v1h-1zM1 5h4v1h-4zM6 5h5v1h-5zM1 6h1v1h-1zM4 6h1v1h-1zM1 7h1v1h-1zM4 7h2v1h-2zM7 7h1v1h-1zM9 7h1v1h-1zM0 8h5v1h-5zM7 8h1v1h-1zM9 8h1v1h-1zM4 9h1v1h-1zM6 9h1v1h-1zM10 9h1v1h-1zM4 10h2v1h-2zM10 10h1v1h-1z"/><path id="g175" d="M3 0h1v1h-1zM3 1h6v1h-6zM2 2h2v1h-2zM7 2h1v1h-1zM1 3h1v1h-1zM4 3h3v1h-3zM4 4h1v1h-1zM6 4h2v1h-2zM2 5h2v1h-2zM8 5h3v1h-3zM0 6h9v1h-9zM2 7h1v1h-1zM5 7h1v1h-1zM8 7h1v1h-1zM2 8h7v1h-7zM2 9h1v1h-1zM5 9h1v1h-1zM8 9h1v1h-1zM2 10h7v1h-7z"/><path id="g176" d="M1 0h1v1h-1zM6 0h1v1h-1zM2 1h1v1h-1zM7 1h1v1h-1zM0 2h1v1h-1zM4 2h7v1h-7zM1 3h1v1h-1zM3 3h1v1h-1zM7 3h1v1h-1zM3 4h1v1h-1zM7 4h1v1h-1zM2 5h1v1h-1zM7 5h1v1h-1zM2 6h1v1h-1zM5 6h5v1h-5zM0 7h2v1h-2zM7 7h1v1h-1zM1 8h1v1h-1zM7 8h1v1h-1zM1 9h1v1h-1zM7 9h1v1h-1zM1 10h1v1h-1zM4 10h7v1h-7z"/><path id="g177" d="M0 0h5v1h-5zM3 1h1v1h-1zM2 2h1v1h-1zM1 3h1v1h-1zM0 4h1v1h-1zM0 5h5v1h-5z"/><path id="g178" d="M3 0h1v1h-1zM1 2h3v1h-3zM3 3h1v1h-1zM3 4h1v1h-1zM3 5h1v1h-1zM3 6h1v1h-1zM3 7h1v1h-1zM3 8h1v1h-1zM0 9h3v1h-3z"/><path id="g179" d="M2 0h3v1h-3zM1 1h1v1h-1zM0 2h5v1h-5zM1 3h1v1h-1zM1 4h1v1h-1zM1 5h1v1h-1zM1 6h1v1h-1zM1 7h1v1h-1z"/><path id="g180" d="M5 0h1v1h-1zM1 1h9v1h-9zM3 2h1v1h-1zM7 2h1v1h-1zM0 3h11v1h-11zM2 4h1v1h-1zM8 4h1v1h-1zM2 5h7v1h-7zM2 6h1v1h-1zM8 6h1v1h-1zM2 7h7v1h-7zM5 8h1v1h-1zM0 9h11v1h-11zM5 10h1v1h-1z"/><path id="g181" d="M0 0h9v1h-9zM0 1h1v1h-1zM0 2h1v1h-1zM0 3h8v1h-8zM0 4h1v1h-1zM7 4h1v1h-1zM0 5h1v1h-1zM7 5h1v1h-1zM0 6h8v1h-8zM0 7h1v1h-1zM0 8h1v1h-1zM0 9h1v1h-1zM0 10h10v1h-10z"/><path id="g182" d="M2 0h1v1h-1zM6 0h1v1h-1zM2 1h1v1h-1zM6 1h5v1h-5zM0 2h1v1h-1zM2 2h1v1h-1zM4 2h3v1h-3zM9 2h1v1h-1zM0 3h1v1h-1zM2 3h1v1h-1zM4 3h1v1h-1zM7 3h2v1h-2zM0 4h1v1h-1zM2 4h1v1h-1zM4 4h1v1h-1zM6 4h1v1h-1zM9 4h1v1h-1zM0 5h1v1h-1zM2 5h1v1h-1zM4 5h7v1h-7zM0 6h1v1h-1zM2 6h1v1h-1zM4 6h1v1h-1zM7 6h1v1h-1zM0 7h1v1h-1zM2 7h8v1h-8zM0 8h2v1h-2zM7 8h1v1h-1zM4 9h7v1h-7zM7 10h1v1h-1z"/><path id="g183" d="M0 0h5v1h-5zM0 1h1v1h-1zM2 1h1v1h-1zM4 1h1v1h-1zM0 2h1v1h-1zM2 2h1v1h-1zM4 2h1v1h-1zM0 3h1v1h-1zM2 3h1v1h-1zM4 3h1v1h-1zM0 4h1v1h-1zM2 4h1v1h-1zM4 4h1v1h-1zM0 5h1v1h-1zM2 5h1v1h-1zM4 5h1v1h-1z"/><path id="g184" d="M0 0h1v1h-1zM0 1h1v1h-1zM0 2h4v1h-4zM0 3h1v1h-1zM4 3h1v1h-1zM0 4h1v1h-1zM4 4h1v1h-1zM0 5h1v1h-1zM4 5h1v1h-1zM0 6h1v1h-1zM4 6h1v1h-1zM0 7h1v1h-1zM4 7h1v1h-1z"/><path id="g185" d="M0 0h1v1h-1zM6 0h1v1h-1zM0 1h1v1h-1zM6 1h1v1h-1zM1 2h1v1h-1zM3 2h1v1h-1zM5 2h1v1h-1zM1 3h2v1h-2zM4 3h2v1h-2zM1 4h2v1h-2zM4 4h2v1h-2zM1 5h1v1h-1zM4 5h2v1h-2z"/><path id="g186" d="M1 0h8v1h-8zM8 1h1v1h-1zM3 2h1v1h-1zM8 2h1v1h-1zM3 3h1v1h-1zM7 3h1v1h-1zM2 4h1v1h-1zM7 4h1v1h-1zM2 5h9v1h-9zM10 6h1v1h-1zM10 7h1v1h-1zM0 8h8v1h-8zM10 8h1v1h-1zM10 9h1v1h-1zM8 10h2v1h-2z"/><path id="g187" d="M2 0h1v1h-1zM2 1h1v1h-1zM5 1h5v1h-5zM1 2h1v1h-1zM7 2h1v1h-1zM1 3h1v1h-1zM3 3h1v1h-1zM7 3h1v1h-1zM0 4h3v1h-3zM7 4h1v1h-1zM2 5h1v1h-1zM7 5h1v1h-1zM1 6h1v1h-1zM7 6h1v1h-1zM0 7h4v1h-4zM7 7h1v1h-1zM7 8h1v1h-1zM2 9h2v1h-2zM7 9h1v1h-1zM0 10h2v1h-2zM4 10h7v1h-7z"/><path id="g188" d="M3 0h1v1h-1zM7 0h1v1h-1zM0 1h11v1h-11zM4 2h1v1h-1zM7 2h1v1h-1zM1 3h2v1h-2zM4 3h1v1h-1zM6 3h1v1h-1zM8 3h1v1h-1zM0 4h1v1h-1zM2 4h5v1h-5zM8 4h1v1h-1zM1 5h1v1h-1zM6 5h1v1h-1zM8 5h3v1h-3zM0 6h2v1h-2zM3 6h5v1h-5zM9 6h1v1h-1zM1 7h1v1h-1zM7 7h1v1h-1zM9 7h1v1h-1zM1 8h1v1h-1zM3 8h3v1h-3zM8 8h1v1h-1zM1 9h1v1h-1zM3 9h1v1h-1zM5 9h1v1h-1zM7 9h1v1h-1zM9 9h1v1h-1zM1 10h2v1h-2zM6 10h1v1h-1zM10 10h1v1h-1z"/><path id="g189" d="M3 0h1v1h-1zM3 1h1v1h-1zM0 2h8v1h-8zM3 3h1v1h-1zM7 3h1v1h-1zM3 4h1v1h-1zM7 4h1v1h-1zM1 5h1v1h-1zM3 5h1v1h-1zM7 5h2v1h-2zM1 6h1v1h-1zM3 6h1v1h-1zM7 6h1v1h-1zM9 6h1v1h-1zM0 7h1v1h-1zM2 7h1v1h-1zM7 7h1v1h-1zM9 7h1v1h-1zM2 8h1v1h-1zM7 8h1v1h-1zM1 9h1v1h-1zM5 9h1v1h-1zM7 9h1v1h-1zM0 10h1v1h-1zM6 10h1v1h-1z"/><path id="g190" d="M5 0h1v1h-1zM0 1h11v1h-11zM0 2h1v1h-1zM10 2h1v1h-1zM0 3h1v1h-1zM2 3h7v1h-7zM10 3h1v1h-1zM4 4h1v1h-1zM3 5h1v1h-1zM7 5h1v1h-1zM2 6h5v1h-5zM8 6h1v1h-1zM5 7h1v1h-1zM2 8h7v1h-7zM5 9h1v1h-1zM0 10h11v1h-11z"/><path id="g191" d="M0 0h5v1h-5zM8 0h1v1h-1zM0 1h1v1h-1zM4 1h1v1h-1zM8 1h1v1h-1zM0 2h1v1h-1zM2 2h1v1h-1zM4 2h7v1h-7zM0 3h1v1h-1zM2 3h1v1h-1zM4 3h1v1h-1zM8 3h1v1h-1zM0 4h1v1h-1zM2 4h1v1h-1zM4 4h1v1h-1zM7 4h2v1h-2zM0 5h1v1h-1zM2 5h1v1h-1zM4 5h1v1h-1zM7 5h2v1h-2zM0 6h1v1h-1zM2 6h1v1h-1zM4 6h1v1h-1zM6 6h1v1h-1zM8 6h1v1h-1zM2 7h1v1h-1zM6 7h1v1h-1zM8 7h1v1h-1zM1 8h1v1h-1zM3 8h1v1h-1zM5 8h1v1h-1zM8 8h1v1h-1zM1 9h1v1h-1zM4 9h1v1h-1zM8 9h1v1h-1zM0 10h1v1h-1zM7 10h2v1h-2z"/><path id="g192" d="M1 0h1v1h-1zM1 1h1v1h-1zM0 2h4v1h-4zM1 3h1v1h-1zM1 4h1v1h-1zM1 5h1v1h-1zM1 6h1v1h-1zM1 7h4v1h-4z"/><path id="g193" d="M3 0h1v1h-1zM6 0h5v1h-5zM3 1h1v1h-1zM6 1h1v1h-1zM10 1h1v1h-1zM0 2h7v1h-7zM10 2h1v1h-1zM3 3h1v1h-1zM6 3h5v1h-5zM3 4h1v1h-1zM6 4h1v1h-1zM10 4h1v1h-1zM1 5h4v1h-4zM6 5h1v1h-1zM10 5h1v1h-1zM1 6h1v1h-1zM4 6h1v1h-1zM6 6h5v1h-5zM1 7h1v1h-1zM4 7h1v1h-1zM6 7h1v1h-1zM10 7h1v1h-1zM1 8h4v1h-4zM6 8h1v1h-1zM10 8h1v1h-1zM1 9h1v1h-1zM4 9h2v1h-2zM10 9h1v1h-1zM4 10h1v1h-1zM8 10h3v1h-3z"/><path id="g194" d="M1 0h3v1h-3zM5 0h1v1h-1zM7 0h1v1h-1zM9 0h1v1h-1zM1 1h1v1h-1zM3 1h8v1h-8zM1 2h1v1h-1zM3 2h1v1h-1zM6 2h1v1h-1zM1 3h10v1h-10zM1 4h1v1h-1zM3 4h1v1h-1zM5 4h1v1h-1zM9 4h1v1h-1zM1 5h1v1h-1zM3 5h6v1h-6zM10 5h1v1h-1zM1 6h3v1h-3zM5 6h1v1h-1zM8 6h1v1h-1zM1 7h1v1h-1zM3 7h1v1h-1zM5 7h6v1h-6zM1 8h1v1h-1zM3 8h1v1h-1zM10 8h1v1h-1zM0 9h1v1h-1zM3 9h1v1h-1zM5 9h4v1h-4zM10 9h1v1h-1zM0 10h1v1h-1zM2 10h2v1h-2zM9 10h1v1h-1z"/><path id="g195" d="M1 0h1v1h-1zM7 0h1v1h-1zM1 1h1v1h-1zM5 1h1v1h-1zM7 1h1v1h-1zM10 1h1v1h-1zM1 2h4v1h-4zM6 2h2v1h-2zM9 2h1v1h-1zM0 3h1v1h-1zM5 3h6v1h-6zM0 4h6v1h-6zM10 4h1v1h-1zM2 5h1v1h-1zM5 5h6v1h-6zM0 6h6v1h-6zM10 6h1v1h-1zM2 7h1v1h-1zM5 7h6v1h-6zM2 8h1v1h-1zM4 8h2v1h-2zM10 8h1v1h-1zM2 9h2v1h-2zM5 9h1v1h-1zM10 9h1v1h-1zM2 10h1v1h-1zM5 10h1v1h-1zM8 10h3v1h-3z"/><path id="g196" d="M2 0h1v1h-1zM6 0h1v1h-1zM2 1h9v1h-9zM2 2h1v1h-1zM6 2h1v1h-1zM1 3h9v1h-9zM0 4h1v1h-1zM2 4h1v1h-1zM6 4h1v1h-1zM2 5h8v1h-8zM2 6h1v1h-1zM6 6h1v1h-1zM2 7h9v1h-9zM2 8h1v1h-1zM9 8h1v1h-1zM2 9h1v1h-1zM9 9h1v1h-1zM2 10h8v1h-8z"/><path id="g197" d="M0 0h3v1h-3zM2 1h1v1h-1zM2 2h1v1h-1zM2 3h1v1h-1zM2 4h1v1h-1zM2 5h1v1h-1zM2 6h1v1h-1zM2 7h3v1h-3z"/><path id="g198" d="M2 0h1v1h-1zM10 0h1v1h-1zM3 1h1v1h-1zM10 1h1v1h-1zM0 2h7v1h-7zM8 2h1v1h-1zM10 2h1v1h-1zM5 3h1v1h-1zM8 3h1v1h-1zM10 3h1v1h-1zM2 4h1v1h-1zM5 4h1v1h-1zM8 4h1v1h-1zM10 4h1v1h-1zM3 5h2v1h-2zM8 5h1v1h-1zM10 5h1v1h-1zM4 6h1v1h-1zM8 6h1v1h-1zM10 6h1v1h-1zM3 7h1v1h-1zM5 7h1v1h-1zM8 7h1v1h-1zM10 7h1v1h-1zM2 8h1v1h-1zM6 8h1v1h-1zM10 8h1v1h-1zM1 9h1v1h-1zM6 9h1v1h-1zM8 9h1v1h-1zM10 9h1v1h-1zM0 10h1v1h-1zM9 10h1v1h-1z"/><path id="g199" d="M3 0h1v1h-1zM6 0h1v1h-1zM3 1h1v1h-1zM5 1h1v1h-1zM9 1h1v1h-1zM2 2h1v1h-1zM4 2h7v1h-7zM2 3h1v1h-1zM6 3h1v1h-1zM8 3h1v1h-1zM10 3h1v1h-1zM1 4h2v1h-2zM5 4h2v1h-2zM9 4h1v1h-1zM0 5h1v1h-1zM2 5h1v1h-1zM4 5h1v1h-1zM6 5h5v1h-5zM2 6h1v1h-1zM5 6h1v1h-1zM9 6h1v1h-1zM2 7h1v1h-1zM4 7h1v1h-1zM6 7h1v1h-1zM8 7h1v1h-1zM2 8h1v1h-1zM7 8h1v1h-1zM2 9h1v1h-1zM6 9h1v1h-1zM8 9h1v1h-1zM2 10h1v1h-1zM4 10h2v1h-2zM9 10h2v1h-2z"/><path id="g200" d="M6 0h1v1h-1zM0 1h5v1h-5zM6 1h5v1h-5zM4 2h1v1h-1zM6 2h1v1h-1zM10 2h1v1h-1zM0 3h1v1h-1zM4 3h2v1h-2zM7 3h1v1h-1zM9 3h1v1h-1zM1 4h1v1h-1zM3 4h1v1h-1zM7 4h1v1h-1zM2 5h1v1h-1zM7 5h1v1h-1zM2 6h2v1h-2zM7 6h1v1h-1zM2 7h1v1h-1zM4 7h1v1h-1zM6 7h1v1h-1zM8 7h1v1h-1zM1 8h1v1h-1zM4 8h1v1h-1zM6 8h1v1h-1zM8 8h1v1h-1zM0 9h1v1h-1zM5 9h1v1h-1zM9 9h1v1h-1zM4 10h1v1h-1zM10 10h1v1h-1z"/><path id="g201" d="M1 0h1v1h-1zM6 0h1v1h-1zM2 1h1v1h-1zM4 1h2v1h-2zM7 1h4v1h-4zM2 2h1v1h-1zM4 2h1v1h-1zM7 2h1v1h-1zM10 2h1v1h-1zM4 3h1v1h-1zM7 3h1v1h-1zM10 3h1v1h-1zM0 4h3v1h-3zM4 4h1v1h-1zM7 4h1v1h-1zM10 4h1v1h-1zM2 5h1v1h-1zM4 5h1v1h-1zM7 5h1v1h-1zM10 5h1v1h-1zM2 6h1v1h-1zM4 6h1v1h-1zM6 6h2v1h-2zM10 6h1v1h-1zM2 7h1v1h-1zM4 7h2v1h-2zM7 7h1v1h-1zM9 7h2v1h-2zM2 8h1v1h-1zM7 8h1v1h-1zM1 9h1v1h-1zM3 9h1v1h-1zM0 10h1v1h-1zM4 10h7v1h-7z"/><path id="g202" d="M3 0h1v1h-1zM7 0h1v1h-1zM3 1h8v1h-8zM2 2h1v1h-1zM7 2h1v1h-1zM2 3h1v1h-1zM4 3h7v1h-7zM1 4h2v1h-2zM4 4h1v1h-1zM7 4h1v1h-1zM10 4h1v1h-1zM0 5h1v1h-1zM2 5h1v1h-1zM4 5h7v1h-7zM2 6h1v1h-1zM4 6h1v1h-1zM7 6h1v1h-1zM2 7h1v1h-1zM5 7h1v1h-1zM7 7h1v1h-1zM2 8h1v1h-1zM6 8h1v1h-1zM2 9h1v1h-1zM5 9h1v1h-1zM7 9h2v1h-2zM2 10h3v1h-3zM9 10h2v1h-2z"/><path id="g203" d="M1 0h9v1h-9zM1 1h1v1h-1zM5 1h1v1h-1zM9 1h1v1h-1zM1 2h1v1h-1zM5 2h1v1h-1zM9 2h1v1h-1zM1 3h9v1h-9zM1 4h1v1h-1zM5 4h1v1h-1zM9 4h1v1h-1zM1 5h1v1h-1zM5 5h1v1h-1zM9 5h1v1h-1zM1 6h9v1h-9zM1 7h1v1h-1zM5 7h1v1h-1zM9 7h1v1h-1zM1 8h1v1h-1zM5 8h1v1h-1zM9 8h1v1h-1zM0 9h1v1h-1zM5 9h1v1h-1zM9 9h1v1h-1zM0 10h1v1h-1zM5 10h1v1h-1zM8 10h2v1h-2z"/><path id="g204" d="M5 0h1v1h-1zM0 1h11v1h-11zM0 2h1v1h-1zM10 2h1v1h-1zM0 3h1v1h-1zM2 3h7v1h-7zM10 3h1v1h-1zM3 4h1v1h-1zM5 4h1v1h-1zM9 4h1v1h-1zM2 5h1v1h-1zM4 5h1v1h-1zM6 5h1v1h-1zM8 5h1v1h-1zM3 6h1v1h-1zM6 6h2v1h-2zM1 7h2v1h-2zM4 7h3v1h-3zM8 7h1v1h-1zM3 8h1v1h-1zM6 8h1v1h-1zM9 8h1v1h-1zM1 9h2v1h-2zM6 9h1v1h-1zM10 9h1v1h-1zM4 10h2v1h-2z"/><path id="g205" d="M2 0h1v1h-1zM7 0h1v1h-1zM2 1h1v1h-1zM7 1h1v1h-1zM1 2h1v1h-1zM4 2h7v1h-7zM1 3h1v1h-1zM3 3h1v1h-1zM5 3h1v1h-1zM7 3h1v1h-1zM10 3h1v1h-1zM0 4h3v1h-3zM5 4h1v1h-1zM7 4h1v1h-1zM10 4h1v1h-1zM2 5h1v1h-1zM5 5h1v1h-1zM7 5h2v1h-2zM10 5h1v1h-1zM1 6h1v1h-1zM5 6h1v1h-1zM7 6h1v1h-1zM9 6h2v1h-2zM0 7h4v1h-4zM5 7h2v1h-2zM10 7h1v1h-1zM4 8h2v1h-2zM10 8h1v1h-1zM2 9h2v1h-2zM5 9h1v1h-1zM10 9h1v1h-1zM0 10h2v1h-2zM5 10h1v1h-1zM8 10h3v1h-3z"/><path id="g206" d="M1 0h1v1h-1zM2 1h1v1h-1zM5 1h5v1h-5zM9 2h1v1h-1zM9 3h1v1h-1zM0 4h3v1h-3zM9 4h1v1h-1zM2 5h1v1h-1zM5 5h5v1h-5zM2 6h1v1h-1zM5 6h1v1h-1zM2 7h1v1h-1zM5 7h1v1h-1zM2 8h1v1h-1zM4 8h2v1h-2zM10 8h1v1h-1zM2 9h2v1h-2zM5 9h1v1h-1zM10 9h1v1h-1zM2 10h1v1h-1zM6 10h5v1h-5z"/><path id="g207" d="M2 0h1v1h-1zM6 0h1v1h-1zM9 0h1v1h-1zM2 1h1v1h-1zM6 1h1v1h-1zM9 1h1v1h-1zM0 2h5v1h-5zM6 2h1v1h-1zM8 2h1v1h-1zM0 3h1v1h-1zM2 3h1v1h-1zM4 3h1v1h-1zM6 3h2v1h-2zM0 4h1v1h-1zM2 4h1v1h-1zM4 4h1v1h-1zM6 4h1v1h-1zM0 5h1v1h-1zM2 5h1v1h-1zM4 5h7v1h-7zM0 6h1v1h-1zM2 6h1v1h-1zM4 6h1v1h-1zM6 6h1v1h-1zM8 6h1v1h-1zM0 7h1v1h-1zM2 7h3v1h-3zM6 7h1v1h-1zM8 7h1v1h-1zM2 8h1v1h-1zM6 8h1v1h-1zM9 8h1v1h-1zM2 9h1v1h-1zM6 9h1v1h-1zM8 9h2v1h-2zM2 10h1v1h-1zM6 10h2v1h-2zM10 10h1v1h-1z"/><path id="g208" d="M4 0h1v1h-1zM0 1h1v1h-1zM4 1h1v1h-1zM8 1h1v1h-1zM1 2h1v1h-1zM4 2h1v1h-1zM7 2h1v1h-1zM2 3h1v1h-1zM4 3h1v1h-1zM6 3h1v1h-1zM0 4h9v1h-9zM8 5h1v1h-1zM8 6h1v1h-1zM1 7h8v1h-8zM8 8h1v1h-1zM8 9h1v1h-1zM0 10h9v1h-9z"/><path id="g209" d="M2 0h1v1h-1zM7 0h1v1h-1zM3 1h1v1h-1zM6 1h1v1h-1zM0 2h10v1h-10zM1 4h4v1h-4zM6 4h1v1h-1zM8 4h1v1h-1zM1 5h1v1h-1zM4 5h1v1h-1zM6 5h1v1h-1zM8 5h1v1h-1zM1 6h4v1h-4zM6 6h1v1h-1zM8 6h1v1h-1zM1 7h1v1h-1zM4 7h1v1h-1zM6 7h1v1h-1zM8 7h1v1h-1zM1 8h4v1h-4zM6 8h1v1h-1zM8 8h1v1h-1zM1 9h1v1h-1zM4 9h1v1h-1zM8 9h1v1h-1zM1 10h1v1h-1zM3 10h2v1h-2zM6 10h3v1h-3z"/><path id="g210" d="M5 0h1v1h-1zM6 1h1v1h-1zM2 2h8v1h-8zM2 3h1v1h-1zM9 3h1v1h-1zM2 4h1v1h-1zM9 4h1v1h-1zM2 5h8v1h-8zM2 6h1v1h-1zM2 7h1v1h-1zM2 8h1v1h-1zM1 9h1v1h-1zM0 10h1v1h-1z"/><path id="g211" d="M0 0h2v1h-2zM0 1h2v1h-2zM0 5h2v1h-2zM0 6h2v1h-2z"/><path id="g212" d="M2 0h1v1h-1zM2 1h9v1h-9zM1 2h1v1h-1zM6 2h1v1h-1zM0 3h1v1h-1zM6 3h1v1h-1zM2 4h8v1h-8zM2 5h1v1h-1zM6 5h1v1h-1zM2 6h1v1h-1zM6 6h1v1h-1zM0 7h11v1h-11zM6 8h1v1h-1zM6 9h1v1h-1zM6 10h1v1h-1z"/><path id="g213" d="M2 0h7v1h-7zM2 1h1v1h-1zM8 1h1v1h-1zM2 2h1v1h-1zM8 2h1v1h-1zM2 3h7v1h-7zM2 4h1v1h-1zM8 4h1v1h-1zM2 5h1v1h-1zM8 5h1v1h-1zM2 6h7v1h-7zM2 7h1v1h-1zM8 7h1v1h-1zM2 8h1v1h-1zM8 8h1v1h-1zM1 9h1v1h-1zM6 9h1v1h-1zM8 9h1v1h-1zM0 10h1v1h-1zM7 10h1v1h-1z"/><path id="g214" d="M0 0h7v1h-7zM0 1h1v1h-1zM6 1h1v1h-1zM0 2h1v1h-1zM6 2h1v1h-1zM0 3h1v1h-1zM6 3h1v1h-1zM0 4h7v1h-7zM0 5h1v1h-1zM6 5h1v1h-1zM0 6h1v1h-1zM6 6h1v1h-1zM0 7h1v1h-1zM6 7h1v1h-1zM0 8h7v1h-7zM0 9h1v1h-1zM6 9h1v1h-1z"/><path id="g215" d="M4 0h1v1h-1zM0 1h11v1h-11zM3 2h1v1h-1zM8 2h1v1h-1zM2 3h6v1h-6zM9 3h1v1h-1zM0 4h2v1h-2zM3 4h1v1h-1zM10 4h1v1h-1zM3 5h5v1h-5zM3 6h1v1h-1zM0 7h11v1h-11zM4 8h1v1h-1zM3 9h1v1h-1zM8 9h1v1h-1zM2 10h8v1h-8z"/><path id="g216" d="M0 0h5v1h-5zM0 1h1v1h-1zM0 2h1v1h-1zM0 3h5v1h-5zM0 4h1v1h-1zM0 5h1v1h-1zM0 6h1v1h-1z"/><path id="g217" d="M0 0h1v1h-1zM4 0h1v1h-1zM0 1h2v1h-2zM3 1h2v1h-2zM0 2h2v1h-2zM3 2h2v1h-2zM0 3h2v1h-2zM3 3h2v1h-2zM0 4h1v1h-1zM2 4h1v1h-1zM4 4h1v1h-1zM0 5h1v1h-1zM4 5h1v1h-1zM0 6h1v1h-1zM4 6h1v1h-1z"/><path id="g218" d="M1 0h4v1h-4zM1 1h1v1h-1zM5 1h1v1h-1zM1 2h1v1h-1zM2 3h3v1h-3zM5 4h1v1h-1zM1 5h1v1h-1zM5 5h1v1h-1zM1 6h5v1h-5z"/><path id="g219" d="M0 0h4v1h-4zM0 1h1v1h-1zM4 1h1v1h-1zM0 2h1v1h-1zM4 2h1v1h-1zM0 3h1v1h-1zM4 3h1v1h-1zM0 4h1v1h-1zM4 4h1v1h-1zM0 5h1v1h-1zM4 5h1v1h-1zM0 6h4v1h-4z"/><path id="g220" d="M0 0h4v1h-4zM0 1h1v1h-1zM4 1h1v1h-1zM0 2h1v1h-1zM4 2h1v1h-1zM0 3h4v1h-4zM0 4h1v1h-1zM4 4h1v1h-1zM0 5h1v1h-1zM4 5h2v1h-2zM0 6h5v1h-5z"/><path id="g221" d="M2 0h1v1h-1zM5 0h5v1h-5zM2 1h1v1h-1zM4 1h1v1h-1zM6 1h1v1h-1zM10 1h1v1h-1zM0 2h4v1h-4zM5 2h1v1h-1zM7 2h1v1h-1zM9 2h1v1h-1zM2 3h1v1h-1zM4 3h1v1h-1zM2 4h1v1h-1zM4 4h7v1h-7zM2 5h3v1h-3zM10 5h1v1h-1zM1 6h2v1h-2zM5 6h5v1h-5zM0 7h1v1h-1zM2 7h1v1h-1zM5 7h1v1h-1zM8 7h1v1h-1zM2 8h1v1h-1zM6 8h2v1h-2zM2 9h1v1h-1zM5 9h1v1h-1zM8 9h1v1h-1zM0 10h5v1h-5zM9 10h2v1h-2z"/><path id="g222" d="M2 0h1v1h-1zM2 1h1v1h-1zM4 1h6v1h-6zM0 2h4v1h-4zM5 2h1v1h-1zM9 2h1v1h-1zM2 3h1v1h-1zM5 3h1v1h-1zM9 3h1v1h-1zM2 4h1v1h-1zM5 4h1v1h-1zM9 4h1v1h-1zM1 5h3v1h-3zM6 5h1v1h-1zM8 5h1v1h-1zM1 6h2v1h-2zM4 6h1v1h-1zM6 6h1v1h-1zM8 6h1v1h-1zM0 7h1v1h-1zM2 7h1v1h-1zM7 7h1v1h-1zM2 8h1v1h-1zM6 8h1v1h-1zM8 8h1v1h-1zM2 9h1v1h-1zM5 9h1v1h-1zM9 9h1v1h-1zM2 10h1v1h-1zM4 10h1v1h-1zM10 10h1v1h-1z"/><path id="g223" d="M1 0h1v1h-1zM5 0h1v1h-1zM2 1h1v1h-1zM5 1h1v1h-1zM5 2h5v1h-5zM4 3h1v1h-1zM7 3h1v1h-1zM0 4h3v1h-3zM7 4h1v1h-1zM2 5h1v1h-1zM4 5h7v1h-7zM2 6h1v1h-1zM7 6h1v1h-1zM2 7h1v1h-1zM4 7h1v1h-1zM7 7h1v1h-1zM2 8h2v1h-2zM7 8h1v1h-1zM2 9h1v1h-1zM7 9h1v1h-1zM7 10h1v1h-1z"/><path id="g224" d="M0 0h11v1h-11zM8 1h1v1h-1zM2 2h4v1h-4zM8 2h1v1h-1zM2 3h1v1h-1zM5 3h1v1h-1zM8 3h1v1h-1zM2 4h1v1h-1zM5 4h1v1h-1zM8 4h1v1h-1zM2 5h4v1h-4zM8 5h1v1h-1zM2 6h1v1h-1zM5 6h1v1h-1zM8 6h1v1h-1zM8 7h1v1h-1zM8 8h1v1h-1zM6 9h3v1h-3z"/><path id="g225" d="M1 0h4v1h-4zM6 0h4v1h-4zM1 1h1v1h-1zM4 1h1v1h-1zM6 1h1v1h-1zM9 1h1v1h-1zM1 2h1v1h-1zM4 2h1v1h-1zM6 2h1v1h-1zM9 2h1v1h-1zM1 3h1v1h-1zM4 3h1v1h-1zM6 3h1v1h-1zM9 3h1v1h-1zM0 4h11v1h-11zM1 5h1v1h-1zM4 5h1v1h-1zM6 5h1v1h-1zM9 5h1v1h-1zM1 6h1v1h-1zM4 6h1v1h-1zM6 6h1v1h-1zM9 6h1v1h-1zM1 7h1v1h-1zM4 7h1v1h-1zM6 7h1v1h-1zM9 7h1v1h-1zM1 8h1v1h-1zM4 8h1v1h-1zM6 8h1v1h-1zM9 8h1v1h-1zM1 9h1v1h-1zM4 9h1v1h-1zM6 9h1v1h-1zM9 9h1v1h-1zM0 10h1v1h-1zM3 10h3v1h-3zM8 10h2v1h-2z"/><path id="g226" d="M2 0h1v1h-1zM7 0h1v1h-1zM2 1h1v1h-1zM7 1h1v1h-1zM1 2h1v1h-1zM6 2h1v1h-1zM8 2h1v1h-1zM1 3h1v1h-1zM3 3h1v1h-1zM5 3h1v1h-1zM9 3h1v1h-1zM0 4h3v1h-3zM4 4h1v1h-1zM10 4h1v1h-1zM2 5h1v1h-1zM5 5h5v1h-5zM1 6h1v1h-1zM0 7h4v1h-4zM5 7h5v1h-5zM4 8h2v1h-2zM9 8h1v1h-1zM2 9h2v1h-2zM5 9h1v1h-1zM9 9h1v1h-1zM0 10h2v1h-2zM5 10h5v1h-5z"/><path id="g227" d="M1 0h9v1h-9zM4 1h1v1h-1zM6 1h1v1h-1zM4 2h1v1h-1zM6 2h1v1h-1zM1 3h1v1h-1zM4 3h1v1h-1zM6 3h1v1h-1zM9 3h1v1h-1zM2 4h1v1h-1zM4 4h1v1h-1zM6 4h1v1h-1zM9 4h1v1h-1zM2 5h1v1h-1zM4 5h1v1h-1zM6 5h1v1h-1zM8 5h1v1h-1zM2 6h1v1h-1zM4 6h1v1h-1zM6 6h1v1h-1zM8 6h1v1h-1zM4 7h1v1h-1zM6 7h1v1h-1zM4 8h1v1h-1zM6 8h1v1h-1zM0 9h11v1h-11z"/><path id="g228" d="M2 0h1v1h-1zM2 1h1v1h-1zM5 1h6v1h-6zM0 2h5v1h-5zM7 2h1v1h-1zM2 3h1v1h-1zM7 3h1v1h-1zM2 4h1v1h-1zM4 4h1v1h-1zM6 4h1v1h-1zM2 5h2v1h-2zM5 5h6v1h-6zM1 6h2v1h-2zM4 6h1v1h-1zM6 6h1v1h-1zM10 6h1v1h-1zM0 7h1v1h-1zM2 7h1v1h-1zM6 7h1v1h-1zM10 7h1v1h-1zM2 8h1v1h-1zM6 8h1v1h-1zM10 8h1v1h-1zM2 9h1v1h-1zM6 9h5v1h-5zM0 10h3v1h-3zM6 10h1v1h-1zM10 10h1v1h-1z"/><path id="g229" d="M1 0h1v1h-1zM6 0h1v1h-1zM1 1h1v1h-1zM6 1h1v1h-1zM0 2h5v1h-5zM6 2h5v1h-5zM1 3h1v1h-1zM6 3h1v1h-1zM10 3h1v1h-1zM0 4h1v1h-1zM2 4h1v1h-1zM5 4h1v1h-1zM7 4h1v1h-1zM9 4h1v1h-1zM0 5h5v1h-5zM7 5h1v1h-1zM2 6h1v1h-1zM7 6h1v1h-1zM2 7h3v1h-3zM6 7h1v1h-1zM8 7h1v1h-1zM0 8h3v1h-3zM6 8h1v1h-1zM8 8h1v1h-1zM2 9h1v1h-1zM5 9h1v1h-1zM9 9h1v1h-1zM2 10h1v1h-1zM4 10h1v1h-1zM10 10h1v1h-1z"/><path id="g230" d="M3 0h1v1h-1zM7 0h1v1h-1zM3 1h1v1h-1zM5 1h1v1h-1zM7 1h1v1h-1zM2 2h1v1h-1zM5 2h1v1h-1zM7 2h1v1h-1zM2 3h1v1h-1zM4 3h6v1h-6zM1 4h3v1h-3zM7 4h1v1h-1zM0 5h1v1h-1zM2 5h1v1h-1zM7 5h1v1h-1zM2 6h1v1h-1zM4 6h7v1h-7zM2 7h1v1h-1zM7 7h1v1h-1zM2 8h1v1h-1zM7 8h1v1h-1zM2 9h1v1h-1zM7 9h1v1h-1zM2 10h1v1h-1zM7 10h1v1h-1z"/><path id="g231" d="M5 0h7v1h-7zM0 1h5v1h-5zM8 1h1v1h-1zM2 2h1v1h-1zM7 2h1v1h-1zM2 3h1v1h-1zM5 3h6v1h-6zM2 4h1v1h-1zM5 4h1v1h-1zM10 4h1v1h-1zM2 5h1v1h-1zM5 5h1v1h-1zM8 5h1v1h-1zM10 5h1v1h-1zM2 6h1v1h-1zM5 6h1v1h-1zM8 6h1v1h-1zM10 6h1v1h-1zM2 7h4v1h-4zM8 7h1v1h-1zM10 7h1v1h-1zM0 8h2v1h-2zM5 8h1v1h-1zM8 8h1v1h-1zM10 8h1v1h-1zM7 9h1v1h-1zM9 9h1v1h-1zM6 10h1v1h-1zM10 10h1v1h-1zM4 11h2v1h-2zM11 11h1v1h-1z"/><path id="g232" d="M0 0h8v1h-8zM0 1h1v1h-1zM7 1h1v1h-1zM0 2h1v1h-1zM7 2h1v1h-1zM0 3h8v1h-8zM0 4h1v1h-1zM7 4h1v1h-1zM0 5h1v1h-1zM7 5h1v1h-1zM0 6h8v1h-8zM0 7h1v1h-1zM7 7h1v1h-1zM0 8h1v1h-1zM7 8h1v1h-1zM0 9h1v1h-1zM7 9h1v1h-1zM0 10h8v1h-8zM0 11h1v1h-1zM7 11h1v1h-1z"/><path id="g233" d="M2 0h9v1h-9zM2 1h1v1h-1zM10 1h1v1h-1zM2 2h9v1h-9zM2 3h1v1h-1zM10 3h1v1h-1zM2 4h1v1h-1zM4 4h6v1h-6zM2 5h1v1h-1zM7 5h1v1h-1zM2 6h1v1h-1zM4 6h7v1h-7zM2 7h1v1h-1zM4 7h1v1h-1zM7 7h1v1h-1zM10 7h1v1h-1zM1 8h1v1h-1zM3 8h9v1h-9zM1 9h1v1h-1zM3 9h1v1h-1zM7 9h1v1h-1zM11 9h1v1h-1zM1 10h1v1h-1zM3 10h1v1h-1zM5 10h5v1h-5zM11 10h1v1h-1zM0 11h1v1h-1zM3 11h1v1h-1zM10 11h2v1h-2z"/><path id="g234" d="M2 0h1v1h-1zM8 0h1v1h-1zM2 1h1v1h-1zM5 1h1v1h-1zM8 1h1v1h-1zM2 2h1v1h-1zM5 2h1v1h-1zM8 2h1v1h-1zM0 3h1v1h-1zM2 3h2v1h-2zM5 3h7v1h-7zM0 4h1v1h-1zM2 4h1v1h-1zM5 4h1v1h-1zM8 4h1v1h-1zM0 5h1v1h-1zM2 5h1v1h-1zM4 5h1v1h-1zM8 5h1v1h-1zM0 6h1v1h-1zM2 6h1v1h-1zM8 6h1v1h-1zM2 7h1v1h-1zM6 7h5v1h-5zM2 8h1v1h-1zM8 8h1v1h-1zM2 9h1v1h-1zM8 9h1v1h-1zM2 10h1v1h-1zM8 10h1v1h-1zM2 11h1v1h-1zM4 11h8v1h-8z"/><path id="g235" d="M1 0h9v1h-9zM1 1h1v1h-1zM9 1h1v1h-1zM1 2h9v1h-9zM1 3h1v1h-1zM9 3h1v1h-1zM1 4h1v1h-1zM3 4h6v1h-6zM1 5h1v1h-1zM6 5h1v1h-1zM1 6h1v1h-1zM3 6h7v1h-7zM1 7h1v1h-1zM3 7h1v1h-1zM6 7h1v1h-1zM9 7h1v1h-1zM0 8h1v1h-1zM2 8h9v1h-9zM0 9h1v1h-1zM2 9h1v1h-1zM6 9h1v1h-1zM10 9h1v1h-1zM0 10h1v1h-1zM2 10h1v1h-1zM4 10h4v1h-4zM9 10h2v1h-2z"/><path id="g236" d="M2 0h1v1h-1zM7 0h1v1h-1zM2 1h1v1h-1zM5 1h1v1h-1zM7 1h1v1h-1zM0 2h1v1h-1zM2 2h2v1h-2zM5 2h1v1h-1zM7 2h1v1h-1zM0 3h1v1h-1zM2 3h1v1h-1zM4 3h7v1h-7zM0 4h1v1h-1zM2 4h1v1h-1zM4 4h1v1h-1zM7 4h1v1h-1zM0 5h1v1h-1zM2 5h2v1h-2zM7 5h1v1h-1zM2 6h1v1h-1zM5 6h5v1h-5zM2 7h1v1h-1zM7 7h1v1h-1zM2 8h1v1h-1zM7 8h1v1h-1zM2 9h1v1h-1zM7 9h1v1h-1zM2 10h1v1h-1zM4 10h7v1h-7z"/><path id="g237" d="M3 0h6v1h-6zM3 1h1v1h-1zM8 1h1v1h-1zM3 2h6v1h-6zM3 3h1v1h-1zM8 3h1v1h-1zM3 4h6v1h-6zM0 6h11v1h-11zM2 7h1v1h-1zM5 7h1v1h-1zM2 8h1v1h-1zM5 8h4v1h-4zM1 9h1v1h-1zM3 9h1v1h-1zM5 9h1v1h-1zM0 10h1v1h-1zM4 10h7v1h-7z"/><path id="g238" d="M0 0h11v1h-11zM5 1h1v1h-1zM4 2h2v1h-2zM7 2h2v1h-2zM2 3h2v1h-2zM5 3h1v1h-1zM9 3h1v1h-1zM0 4h2v1h-2zM5 4h1v1h-1zM10 4h1v1h-1zM5 5h1v1h-1zM2 6h8v1h-8zM2 7h1v1h-1zM9 7h1v1h-1zM2 8h1v1h-1zM9 8h1v1h-1zM2 9h8v1h-8zM2 10h1v1h-1zM9 10h1v1h-1z"/><path id="g239" d="M2 0h1v1h-1zM1 1h1v1h-1zM1 2h1v1h-1zM0 3h1v1h-1zM0 4h1v1h-1zM0 5h1v1h-1zM0 6h1v1h-1zM0 7h1v1h-1zM0 8h1v1h-1zM1 9h1v1h-1zM1 10h1v1h-1zM2 11h1v1h-1z"/><path id="g240" d="M2 0h1v1h-1zM2 1h1v1h-1zM5 1h6v1h-6zM0 2h5v1h-5zM8 2h1v1h-1zM2 3h1v1h-1zM8 3h1v1h-1zM2 4h1v1h-1zM4 4h1v1h-1zM8 4h1v1h-1zM2 5h2v1h-2zM8 5h1v1h-1zM1 6h2v1h-2zM8 6h1v1h-1zM0 7h1v1h-1zM2 7h1v1h-1zM8 7h1v1h-1zM2 8h1v1h-1zM8 8h1v1h-1zM2 9h1v1h-1zM8 9h1v1h-1zM0 10h3v1h-3zM6 10h3v1h-3z"/><path id="g241" d="M2 0h1v1h-1zM2 1h1v1h-1zM2 2h8v1h-8zM1 3h1v1h-1zM9 3h1v1h-1zM0 4h1v1h-1zM3 4h1v1h-1zM9 4h1v1h-1zM3 5h1v1h-1zM9 5h1v1h-1zM2 6h1v1h-1zM5 6h1v1h-1zM9 6h1v1h-1zM1 7h6v1h-6zM9 7h1v1h-1zM6 8h1v1h-1zM9 8h1v1h-1zM9 9h1v1h-1zM6 10h3v1h-3z"/><path id="g242" d="M1 0h1v1h-1zM5 0h1v1h-1zM7 0h1v1h-1zM2 1h1v1h-1zM5 1h1v1h-1zM7 1h1v1h-1zM2 2h1v1h-1zM5 2h5v1h-5zM4 3h1v1h-1zM7 3h1v1h-1zM0 4h3v1h-3zM4 4h7v1h-7zM2 5h1v1h-1zM6 5h1v1h-1zM8 5h1v1h-1zM2 6h1v1h-1zM6 6h1v1h-1zM8 6h1v1h-1zM10 6h1v1h-1zM2 7h1v1h-1zM5 7h1v1h-1zM8 7h1v1h-1zM10 7h1v1h-1zM2 8h1v1h-1zM4 8h1v1h-1zM9 8h2v1h-2zM1 9h1v1h-1zM3 9h1v1h-1zM0 10h1v1h-1zM4 10h7v1h-7z"/><path id="g243" d="M2 0h1v1h-1zM4 0h7v1h-7zM2 1h1v1h-1zM6 1h1v1h-1zM9 1h1v1h-1zM0 2h5v1h-5zM7 2h2v1h-2zM2 3h1v1h-1zM6 3h1v1h-1zM9 3h1v1h-1zM2 4h1v1h-1zM4 4h2v1h-2zM10 4h1v1h-1zM2 5h2v1h-2zM7 5h1v1h-1zM1 6h2v1h-2zM5 6h5v1h-5zM0 7h1v1h-1zM2 7h1v1h-1zM7 7h1v1h-1zM2 8h1v1h-1zM4 8h7v1h-7zM2 9h1v1h-1zM7 9h1v1h-1zM0 10h3v1h-3zM7 10h1v1h-1z"/><path id="g244" d="M1 0h1v1h-1zM6 0h1v1h-1zM2 1h1v1h-1zM7 1h1v1h-1zM4 2h7v1h-7zM0 3h3v1h-3zM7 3h1v1h-1zM2 4h1v1h-1zM6 4h1v1h-1zM9 4h1v1h-1zM2 5h1v1h-1zM5 5h4v1h-4zM2 6h1v1h-1zM7 6h1v1h-1zM10 6h1v1h-1zM2 7h1v1h-1zM4 7h1v1h-1zM6 7h1v1h-1zM9 7h1v1h-1zM2 8h2v1h-2zM5 8h1v1h-1zM8 8h1v1h-1zM2 9h1v1h-1zM7 9h1v1h-1zM9 9h1v1h-1zM5 10h2v1h-2zM10 10h1v1h-1z"/><path id="g245" d="M0 0h1v1h-1zM1 1h1v1h-1zM1 2h1v1h-1zM2 3h1v1h-1zM2 4h1v1h-1zM2 5h1v1h-1zM2 6h1v1h-1zM2 7h1v1h-1zM2 8h1v1h-1zM1 9h1v1h-1zM1 10h1v1h-1zM0 11h1v1h-1z"/><path id="g246" d="M6 0h1v1h-1zM0 1h4v1h-4zM6 1h4v1h-4zM2 2h1v1h-1zM5 2h1v1h-1zM8 2h1v1h-1zM1 3h1v1h-1zM4 3h7v1h-7zM0 4h4v1h-4zM5 4h1v1h-1zM7 4h1v1h-1zM10 4h1v1h-1zM1 5h1v1h-1zM3 5h1v1h-1zM5 5h6v1h-6zM1 6h1v1h-1zM3 6h1v1h-1zM5 6h1v1h-1zM7 6h1v1h-1zM10 6h1v1h-1zM1 7h1v1h-1zM3 7h1v1h-1zM5 7h6v1h-6zM1 8h3v1h-3zM5 8h1v1h-1zM7 8h1v1h-1zM10 8h1v1h-1zM1 9h1v1h-1zM5 9h1v1h-1zM7 9h1v1h-1zM10 9h1v1h-1zM4 10h1v1h-1zM9 10h2v1h-2z"/><path id="g247" d="M1 0h3v1h-3zM0 1h1v1h-1zM4 1h1v1h-1zM0 2h1v1h-1zM4 2h1v1h-1zM0 3h1v1h-1zM4 3h1v1h-1zM0 4h1v1h-1zM4 4h1v1h-1zM0 5h1v1h-1zM4 5h1v1h-1zM1 6h3v1h-3z"/><path id="g248" d="M0 0h6v1h-6zM1 1h1v1h-1zM4 1h1v1h-1zM6 1h5v1h-5zM1 2h1v1h-1zM4 2h1v1h-1zM6 2h1v1h-1zM10 2h1v1h-1zM1 3h4v1h-4zM6 3h1v1h-1zM10 3h1v1h-1zM1 4h1v1h-1zM4 4h1v1h-1zM7 4h1v1h-1zM9 4h1v1h-1zM1 5h4v1h-4zM7 5h1v1h-1zM9 5h1v1h-1zM1 6h1v1h-1zM4 6h1v1h-1zM8 6h1v1h-1zM1 7h1v1h-1zM4 7h2v1h-2zM8 7h1v1h-1zM0 8h5v1h-5zM7 8h1v1h-1zM9 8h1v1h-1zM4 9h1v1h-1zM6 9h1v1h-1zM9 9h1v1h-1zM4 10h2v1h-2zM10 10h1v1h-1z"/><path id="g249" d="M1 0h1v1h-1zM4 0h1v1h-1zM7 0h1v1h-1zM10 0h1v1h-1zM2 1h1v1h-1zM5 1h1v1h-1zM7 1h1v1h-1zM9 1h1v1h-1zM0 2h1v1h-1zM7 2h1v1h-1zM1 3h1v1h-1zM3 3h1v1h-1zM5 3h6v1h-6zM3 4h1v1h-1zM5 4h1v1h-1zM10 4h1v1h-1zM2 5h1v1h-1zM5 5h6v1h-6zM2 6h1v1h-1zM5 6h1v1h-1zM10 6h1v1h-1zM0 7h2v1h-2zM5 7h6v1h-6zM1 8h1v1h-1zM5 8h1v1h-1zM10 8h1v1h-1zM1 9h1v1h-1zM5 9h1v1h-1zM10 9h1v1h-1zM1 10h1v1h-1zM5 10h1v1h-1zM9 10h2v1h-2z"/></defs></svg>
<div class="a" style="left:0px;top:0px;width:1440px;height:26px;background:linear-gradient(#97abe6 0px,#a3baee 2px,#8aaae6 3px,#7b9ae1 5px,#7895df 9px,#7b9de2 14px,#81a8e9 19px,#7fa5e7 22px,#7394df 24px,#6b88da 26px)"></div>
<div class="a" style="left:0px;top:0px;width:1px;height:26px;background:#6e84d8"></div>
<svg class="a" style="left:4px;top:4px" width="14" height="16" viewBox="0 0 14 16"><defs><linearGradient id="wsh" x1="0" y1="0" x2="0" y2="1"><stop offset="0" stop-color="#ff2020"/><stop offset="1" stop-color="#d00000"/></linearGradient></defs><path d="M1 12.5 L1 5 Q1 0 6 0 Q11 0 11 5 L11.2 12.5Z" fill="#a04818"/><ellipse cx="6.8" cy="6.6" rx="2.7" ry="3.3" fill="#fcc8a0"/><path d="M2.5 6.5 Q2.8 1 7.5 1.2 Q10.2 2 10.5 4.8 Q7.5 2.6 4.2 7.5Z" fill="#a04818"/><rect x="5.6" y="9" width="2.6" height="3" fill="#f0b088"/><path d="M0 14.8 Q0 12 3 11.5 L6.8 13.8 L10.6 11.5 Q13.6 12 13.6 14.8 Q6.8 16.8 0 14.8Z" fill="url(#wsh)"/><path d="M2.8 11.6 L6.8 14.6 L10.8 11.6 L9.2 10.7 L6.8 12.6 L4.4 10.7Z" fill="#fff"/></svg>
<div class="a t" style="left:21px;top:6px;color:transparent">红管家财务出纳记账系统（注册版）</div>
<svg class="a" style="left:21px;top:6px;overflow:visible" width="221.8" height="13" fill="#e6ecf8" shape-rendering="crispEdges"><use href="#g0" x="0" y="0"/><use href="#g0" x="1" y="0"/><use href="#g1" x="13.8" y="0"/><use href="#g1" x="14.8" y="0"/><use href="#g2" x="27.6" y="0"/><use href="#g2" x="28.6" y="0"/><use href="#g3" x="41.400000000000006" y="0"/><use href="#g3" x="42.400000000000006" y="0"/><use href="#g4" x="55.2" y="0"/><use href="#g4" x="56.2" y="0"/><use href="#g5" x="70.0" y="0"/><use href="#g5" x="71.0" y="0"/><use href="#g6" x="82.8" y="0"/><use href="#g6" x="83.8" y="0"/><use href="#g7" x="96.6" y="0"/><use href="#g7" x="97.6" y="0"/><use href="#g8" x="110.39999999999999" y="0"/><use href="#g8" x="111.39999999999999" y="0"/><use href="#g9" x="125.19999999999999" y="0"/><use href="#g9" x="126.19999999999999" y="0"/><use href="#g10" x="138.0" y="0"/><use href="#g10" x="139.0" y="0"/><use href="#g11" x="159.8" y="0"/><use href="#g11" x="160.8" y="0"/><use href="#g12" x="165.60000000000002" y="0"/><use href="#g12" x="166.60000000000002" y="0"/><use href="#g13" x="179.40000000000003" y="0"/><use href="#g13" x="180.40000000000003" y="0"/><use href="#g14" x="193.20000000000005" y="0"/><use href="#g14" x="194.20000000000005" y="0"/><use href="#g15" x="210.00000000000006" y="0"/><use href="#g15" x="211.00000000000006" y="0"/></svg>
<div class="a" style="left:254px;top:12px;width:7px;height:2px;background:#e6ecf8"></div>
<div class="a t" style="left:272px;top:6px;color:transparent">[</div>
<svg class="a" style="left:272px;top:6px;overflow:visible" width="7.8" height="13" fill="#e6ecf8" shape-rendering="crispEdges"><use href="#g16" x="1" y="2"/><use href="#g16" x="2" y="2"/></svg>
<div class="a t" style="left:278px;top:6px;color:transparent">工资发放模版设置</div>
<svg class="a" style="left:278px;top:6px;overflow:visible" width="111.4" height="13" fill="#e6ecf8" shape-rendering="crispEdges"><use href="#g17" x="0" y="1"/><use href="#g17" x="1" y="1"/><use href="#g18" x="13.8" y="0"/><use href="#g18" x="14.8" y="0"/><use href="#g19" x="27.6" y="0"/><use href="#g19" x="28.6" y="0"/><use href="#g20" x="41.400000000000006" y="0"/><use href="#g20" x="42.400000000000006" y="0"/><use href="#g21" x="55.2" y="0"/><use href="#g21" x="56.2" y="0"/><use href="#g14" x="69.0" y="0"/><use href="#g14" x="70.0" y="0"/><use href="#g22" x="82.8" y="0"/><use href="#g22" x="83.8" y="0"/><use href="#g23" x="96.6" y="0"/><use href="#g23" x="97.6" y="0"/></svg>
<div class="a t" style="left:390px;top:6px;color:transparent">]</div>
<svg class="a" style="left:390px;top:6px;overflow:visible" width="7.8" height="13" fill="#e6ecf8" shape-rendering="crispEdges"><use href="#g24" x="0" y="2"/><use href="#g24" x="1" y="2"/></svg>
<div class="a" style="left:1371px;top:2px;width:21px;height:21px;border:1px solid #d0dcf8;border-radius:3px;background:linear-gradient(135deg,#8aa4f0 0%,#5a7ce8 45%,#3a66e6 100%)"></div>
<div class="a" style="left:1394px;top:2px;width:21px;height:21px;border:1px solid #d0dcf8;border-radius:3px;background:linear-gradient(135deg,#8aa4f0 0%,#5a7ce8 45%,#3a66e6 100%)"></div>
<div class="a" style="left:1417px;top:2px;width:21px;height:21px;border:1px solid #d0dcf8;border-radius:3px;background:linear-gradient(135deg,#c09ab0 0%,#b06a80 50%,#a85068 100%)"></div>
<div class="a" style="left:1439px;top:0px;width:1px;height:26px;background:#6a78d8"></div>
<div class="a" style="left:1376px;top:15px;width:7px;height:3px;background:#fff"></div>
<div class="a" style="left:1399px;top:10px;width:8px;height:8px;border:1px solid #fff;border-top-width:2px"></div>
<div class="a" style="left:1402px;top:7px;width:7px;height:2px;background:#fff"></div>
<div class="a" style="left:1408px;top:7px;width:1px;height:7px;background:#fff"></div>
<svg class="a" style="left:1421px;top:6px" width="13" height="13" viewBox="0 0 13 13"><path d="M1.5 1.5 L11.5 11.5 M11.5 1.5 L1.5 11.5" stroke="#fff" stroke-width="2.2"/></svg>
<div class="a" style="left:4px;top:27px;width:16px;height:17px;background:#fff"></div>
<svg class="a" style="left:6px;top:28px" width="14" height="16" viewBox="0 0 14 16"><defs><linearGradient id="wsh" x1="0" y1="0" x2="0" y2="1"><stop offset="0" stop-color="#ff2020"/><stop offset="1" stop-color="#d00000"/></linearGradient></defs><path d="M1 12.5 L1 5 Q1 0 6 0 Q11 0 11 5 L11.2 12.5Z" fill="#a04818"/><ellipse cx="6.8" cy="6.6" rx="2.7" ry="3.3" fill="#fcc8a0"/><path d="M2.5 6.5 Q2.8 1 7.5 1.2 Q10.2 2 10.5 4.8 Q7.5 2.6 4.2 7.5Z" fill="#a04818"/><rect x="5.6" y="9" width="2.6" height="3" fill="#f0b088"/><path d="M0 14.8 Q0 12 3 11.5 L6.8 13.8 L10.6 11.5 Q13.6 12 13.6 14.8 Q6.8 16.8 0 14.8Z" fill="url(#wsh)"/><path d="M2.8 11.6 L6.8 14.6 L10.8 11.6 L9.2 10.7 L6.8 12.6 L4.4 10.7Z" fill="#fff"/></svg>
<div class="a t" style="left:26px;top:30px;color:transparent">系统管理</div>
<svg class="a" style="left:26px;top:30px;overflow:visible" width="48" height="12" fill="#aca899" shape-rendering="crispEdges"><use href="#g25" x="1" y="0"/><use href="#g26" x="12" y="0"/><use href="#g27" x="24" y="0"/><use href="#g28" x="36" y="0"/></svg>
<div class="a t" style="left:86px;top:30px;color:transparent">业务处理</div>
<svg class="a" style="left:86px;top:30px;overflow:visible" width="48" height="12" fill="#aca899" shape-rendering="crispEdges"><use href="#g29" x="0" y="0"/><use href="#g30" x="12" y="0"/><use href="#g31" x="24" y="0"/><use href="#g28" x="36" y="0"/></svg>
<div class="a t" style="left:146px;top:30px;color:transparent">账簿报表</div>
<svg class="a" style="left:146px;top:30px;overflow:visible" width="48" height="12" fill="#aca899" shape-rendering="crispEdges"><use href="#g32" x="0" y="0"/><use href="#g33" x="12" y="0"/><use href="#g34" x="24" y="0"/><use href="#g35" x="36" y="0"/></svg>
<div class="a t" style="left:206px;top:30px;color:transparent">基础资料</div>
<svg class="a" style="left:206px;top:30px;overflow:visible" width="48" height="12" fill="#aca899" shape-rendering="crispEdges"><use href="#g36" x="0" y="0"/><use href="#g37" x="12" y="0"/><use href="#g38" x="24" y="0"/><use href="#g39" x="36" y="0"/></svg>
<div class="a t" style="left:266px;top:30px;color:transparent">辅助工具</div>
<svg class="a" style="left:266px;top:30px;overflow:visible" width="48" height="12" fill="#aca899" shape-rendering="crispEdges"><use href="#g40" x="0" y="0"/><use href="#g41" x="12" y="0"/><use href="#g42" x="24" y="1"/><use href="#g43" x="36" y="0"/></svg>
<div class="a t" style="left:326px;top:30px;color:transparent">窗口(W)</div>
<svg class="a" style="left:326px;top:30px;overflow:visible" width="42" height="12" fill="#aca899" shape-rendering="crispEdges"><use href="#g44" x="1" y="0"/><use href="#g45" x="13" y="1"/><use href="#g46" x="25" y="2"/><use href="#g47" x="29" y="3"/><use href="#g48" x="37" y="2"/></svg>
<div class="a" style="left:356px;top:41px;width:6px;height:1px;background:#aca899"></div>
<div class="a t" style="left:380px;top:30px;color:transparent">帮助(H)</div>
<svg class="a" style="left:380px;top:30px;overflow:visible" width="42" height="12" fill="#aca899" shape-rendering="crispEdges"><use href="#g49" x="0" y="0"/><use href="#g41" x="12" y="0"/><use href="#g46" x="25" y="2"/><use href="#g50" x="30" y="3"/><use href="#g48" x="37" y="2"/></svg>
<div class="a" style="left:410px;top:41px;width:6px;height:1px;background:#aca899"></div>
<div class="a" style="left:1387px;top:29px;width:15px;height:14px;border:1px solid #e6e3d4;border-radius:2px"></div>
<div class="a" style="left:1405px;top:29px;width:15px;height:14px;border:1px solid #e6e3d4;border-radius:2px"></div>
<div class="a" style="left:1423px;top:29px;width:15px;height:14px;border:1px solid #e6e3d4;border-radius:2px"></div>
<div class="a" style="left:1391px;top:37px;width:6px;height:2px;background:#c5c2b2"></div>
<div class="a" style="left:1408px;top:33px;width:7px;height:6px;border:1px solid #c5c2b2;border-top-width:2px"></div>
<div class="a" style="left:1410px;top:31px;width:7px;height:5px;border-top:2px solid #c5c2b2;border-right:1px solid #c5c2b2"></div>
<svg class="a" style="left:1426px;top:31px" width="10" height="10" viewBox="0 0 10 10"><path d="M1.5 1.5 L8.5 8.5 M8.5 1.5 L1.5 8.5" stroke="#c5c2b2" stroke-width="1.8"/></svg>
<div class="a" style="left:0px;top:45px;width:1440px;height:1px;background:#fff"></div>
<div class="a" style="left:0px;top:46px;width:1439px;height:1px;background:#aca899"></div>
<div class="a" style="left:0px;top:46px;width:1px;height:37px;background:#aca899"></div>
<div class="a" style="left:1px;top:47px;width:1437px;height:1px;background:#fff"></div>
<div class="a" style="left:1px;top:47px;width:1px;height:35px;background:#fff"></div>
<div class="a" style="left:0px;top:82px;width:1439px;height:1px;background:#aca899"></div>
<div class="a" style="left:1438px;top:46px;width:1px;height:37px;background:#aca899"></div>
<div class="a" style="left:0px;top:83px;width:1440px;height:1px;background:#fff"></div>
<div class="a" style="left:4px;top:50px;width:1px;height:31px;background:#fff"></div>
<div class="a" style="left:5px;top:50px;width:1px;height:31px;background:#aca899"></div>
<svg class="a" style="left:18px;top:52px" width="24" height="24" viewBox="0 0 24 24"><defs><linearGradient id="hroof" x1="0" y1="0" x2="0" y2="1"><stop offset="0" stop-color="#ffc030"/><stop offset="1" stop-color="#ff6a10"/></linearGradient><linearGradient id="hdoor" x1="0" y1="0" x2="0" y2="1"><stop offset="0" stop-color="#ffb828"/><stop offset="1" stop-color="#ff5a08"/></linearGradient></defs><rect x="15.5" y="1.5" width="4" height="7" fill="#fafafa" stroke="#b8b8b8" stroke-width="0.8"/><path d="M3.5 12 L11.5 4 L19.5 12 V22 Q19.5 23.5 18 23.5 H5 Q3.5 23.5 3.5 22 Z" fill="#f6f6f6" stroke="#9a9a9a" stroke-width="0.9"/><path d="M0 13 L11.5 1.2 L23 13 L21 15.5 L11.5 6 L2 15.5Z" fill="url(#hroof)" stroke="#d85a10" stroke-width="0.4"/><rect x="9" y="15" width="5" height="8.5" fill="url(#hdoor)"/><rect x="11.8" y="18" width="1" height="2" fill="#fff"/></svg>
<svg class="a" style="left:125px;top:53px" width="24" height="24" viewBox="0 0 24 24"><defs><radialGradient id="ukh" cx="0.5" cy="0.6" r="0.6"><stop offset="0" stop-color="#ffa040"/><stop offset="1" stop-color="#e06000"/></radialGradient><linearGradient id="ukk" x1="0" y1="0" x2="1" y2="1"><stop offset="0" stop-color="#e0e2e8"/><stop offset="1" stop-color="#8a8e98"/></linearGradient></defs><circle cx="7" cy="6.5" r="5.8" fill="url(#ukh)"/><path d="M1.2 6 Q1.5 0.3 7.5 0.6 Q11 1 12 4 L9 3 L6 4.5 L3 8 Z" fill="#9a5a18"/><path d="M0.5 19.5 Q0 13 6.5 12.5 Q12 12.5 12.5 17 L11 20 L1 20.5Z" fill="#2e5ee0"/><path d="M5.5 12.5 H8.5 L7 16Z" fill="#fff"/><path d="M13.5 7.5 L17 5.5 L21.5 6.5 L23.5 10.5 L22 15 L17.5 16 L15.5 14.5 L8.5 22.5 L5.5 23.5 L5 20.5 L12.5 12.5 Z" fill="url(#ukk)" stroke="#5c6068" stroke-width="0.9"/><path d="M15 10 L19 14" stroke="#4a4e56" stroke-width="1.2"/><circle cx="19.5" cy="9" r="1.4" fill="#f4f4f4" stroke="#666" stroke-width="0.5"/></svg>
<svg class="a" style="left:224px;top:53px" width="24" height="24" viewBox="0 0 24 24"><defs><linearGradient id="usm" x1="0" y1="0" x2="0" y2="1"><stop offset="0" stop-color="#c8eaff"/><stop offset="1" stop-color="#2a98e8"/></linearGradient><radialGradient id="ush" cx="0.5" cy="0.6" r="0.6"><stop offset="0" stop-color="#ffb050"/><stop offset="1" stop-color="#e87000"/></radialGradient></defs><circle cx="5.5" cy="5" r="4.6" fill="url(#ush)"/><path d="M0.8 5 Q1 0 6 0.3 Q9 0.8 10 3 L7 2.5 L4 4 L2 7Z" fill="#9a6018"/><path d="M0.5 16 Q0 10 5.5 9.8 Q11 10 10.8 16Z" fill="#2e5ee0"/><path d="M4.5 9.8 H6.5 L5.5 13Z" fill="#fff"/><path d="M12 9.5 L22.5 8 L22.5 19 L12 19.5Z" fill="url(#usm)" stroke="#8a8e98" stroke-width="1.2"/><path d="M13 20 L21.5 19.5 L20 22 Q17 23.5 14 22Z" fill="#a8aab0"/><ellipse cx="17" cy="22.5" rx="4.5" ry="1.3" fill="#808288"/><path d="M10.5 1.2 Q18 1 18.5 8 L21 8 L17 13 L13 8 L15.5 8 Q15 4.2 10.5 4.2Z" fill="#3cbc1c" stroke="#2a8a10" stroke-width="0.5"/></svg>
<svg class="a" style="left:323px;top:53px" width="24" height="24" viewBox="0 0 24 24"><defs><linearGradient id="stg" x1="0.2" y1="0" x2="0.6" y2="1"><stop offset="0" stop-color="#fff6c8"/><stop offset="0.45" stop-color="#f6dc80"/><stop offset="0.55" stop-color="#ffd000"/><stop offset="1" stop-color="#f8e860"/></linearGradient></defs><path d="M11.80 2.00 L15.33 8.15 L22.26 9.60 L17.51 14.85 L18.27 21.90 L11.80 19.00 L5.33 21.90 L6.09 14.85 L1.34 9.60 L8.27 8.15Z" fill="url(#stg)" stroke="#b89028" stroke-width="1.1" stroke-linejoin="round"/></svg>
<svg class="a" style="left:431px;top:54px" width="22" height="22" viewBox="0 0 22 22"><defs><linearGradient id="pwg" x1="0" y1="0" x2="1" y2="1"><stop offset="0" stop-color="#f07860"/><stop offset="1" stop-color="#d83a10"/></linearGradient></defs><rect x="0.5" y="0.5" width="21" height="21" rx="2.5" fill="url(#pwg)" stroke="#c03010" stroke-width="0.8"/><circle cx="11" cy="11" r="6" fill="none" stroke="#fff" stroke-width="1.6"/><rect x="10" y="7.5" width="2" height="6" fill="#fff"/></svg>
<div class="a t" style="left:46px;top:59px;color:transparent">功能导航窗</div>
<svg class="a" style="left:46px;top:59px;overflow:visible" width="60" height="12" fill="#000" shape-rendering="crispEdges"><use href="#g51" x="0" y="0"/><use href="#g52" x="12" y="0"/><use href="#g53" x="24" y="0"/><use href="#g54" x="36" y="0"/><use href="#g44" x="49" y="0"/></svg>
<div class="a t" style="left:153px;top:59px;color:transparent">修改密码</div>
<svg class="a" style="left:153px;top:59px;overflow:visible" width="48" height="12" fill="#000" shape-rendering="crispEdges"><use href="#g55" x="0" y="0"/><use href="#g56" x="12" y="0"/><use href="#g57" x="24" y="0"/><use href="#g58" x="36" y="0"/></svg>
<div class="a t" style="left:252px;top:59px;color:transparent">更换操作员</div>
<svg class="a" style="left:252px;top:59px;overflow:visible" width="60" height="12" fill="#000" shape-rendering="crispEdges"><use href="#g59" x="0" y="0"/><use href="#g60" x="12" y="0"/><use href="#g61" x="24" y="0"/><use href="#g62" x="36" y="0"/><use href="#g63" x="48" y="0"/></svg>
<div class="a t" style="left:351px;top:59px;color:transparent">官方网站</div>
<svg class="a" style="left:351px;top:59px;overflow:visible" width="48" height="12" fill="#000" shape-rendering="crispEdges"><use href="#g64" x="0" y="0"/><use href="#g65" x="12" y="0"/><use href="#g66" x="25" y="0"/><use href="#g67" x="36" y="0"/></svg>
<div class="a t" style="left:458px;top:59px;color:transparent">退出系统</div>
<svg class="a" style="left:458px;top:59px;overflow:visible" width="48" height="12" fill="#000" shape-rendering="crispEdges"><use href="#g68" x="0" y="0"/><use href="#g69" x="12" y="0"/><use href="#g25" x="25" y="0"/><use href="#g26" x="36" y="0"/></svg>
<div class="a" style="left:113px;top:49px;width:1px;height:31px;background:#aca899"></div>
<div class="a" style="left:114px;top:49px;width:1px;height:31px;background:#fff"></div>
<div class="a" style="left:418px;top:49px;width:1px;height:31px;background:#aca899"></div>
<div class="a" style="left:419px;top:49px;width:1px;height:31px;background:#fff"></div>
<div class="a" style="left:525px;top:49px;width:1px;height:31px;background:#aca899"></div>
<div class="a" style="left:526px;top:49px;width:1px;height:31px;background:#fff"></div>
<div class="a" style="left:0px;top:109px;width:268px;height:1px;background:#aca899"></div>
<div class="a" style="left:406px;top:109px;width:1034px;height:1px;background:#aca899"></div>
<div class="a" style="left:0px;top:110px;width:268px;height:1px;background:#fff"></div>
<div class="a" style="left:406px;top:110px;width:1034px;height:1px;background:#fff"></div>
<div class="a" style="left:2px;top:86px;width:134px;height:23px;border-top:1px solid #fff;border-left:1px solid #fff;border-top-left-radius:3px"></div>
<div class="a" style="left:135px;top:87px;width:1px;height:22px;background:#716f64"></div>
<div class="a" style="left:134px;top:88px;width:1px;height:21px;background:#aca899"></div>
<div class="a" style="left:137px;top:86px;width:131px;height:23px;border-top:1px solid #fff;border-left:1px solid #fff;border-top-left-radius:3px"></div>
<div class="a" style="left:268px;top:84px;width:138px;height:27px;border-top:1px solid #fff;border-left:1px solid #fff;border-top-left-radius:3px"></div>
<div class="a" style="left:405px;top:85px;width:1px;height:26px;background:#716f64"></div>
<div class="a" style="left:404px;top:86px;width:1px;height:25px;background:#aca899"></div>
<svg class="a" style="left:16px;top:90px" width="16" height="16" viewBox="0 0 16 16"><rect x="2.5" y="1" width="2.5" height="5" fill="#c89060"/><path d="M2 8 L8 3 L14 8 L14 15 L2 15Z" fill="#eef5ff" stroke="#6aa0e0" stroke-width="0.8"/><path d="M0.5 9 L8 2 L15.5 9 L14.5 10 L8 4 L1.5 10Z" fill="#f59a10"/><path d="M8 15 L8 10 Q10 8 12 10 L12 15Z" fill="#c08860"/><rect x="3.5" y="9.5" width="1" height="1" fill="#789"/><rect x="5.5" y="9.5" width="1" height="1" fill="#789"/><rect x="3.5" y="12" width="1" height="1" fill="#789"/><rect x="5.5" y="12" width="1" height="1" fill="#789"/></svg>
<svg class="a" style="left:162px;top:91px" width="16" height="13" viewBox="0 0 16 13"><path d="M0.5 0.5 H15.5 V11.5 H11 Q10 10.5 9 11.5 H7 Q6 10.5 5 11.5 H0.5Z" fill="#eef6ff" stroke="#5c9ae0" stroke-width="1"/><rect x="2" y="2" width="5" height="6" fill="#2a5db0"/><circle cx="4.5" cy="5" r="1.8" fill="#f26a2a"/><circle cx="4.5" cy="4.8" r="0.9" fill="#fff"/><rect x="2" y="2" width="5" height="1.3" fill="#222"/><rect x="2" y="8" width="5" height="1" fill="#a8c8f0"/><rect x="9" y="2" width="5" height="1" fill="#5b8fd8"/><rect x="9" y="4" width="5" height="1" fill="#9ab"/><rect x="9" y="6" width="5" height="1" fill="#9ab"/><rect x="9" y="8" width="5" height="1" fill="#9ab"/></svg>
<svg class="a" style="left:278px;top:90px" width="16" height="13" viewBox="0 0 16 13"><path d="M0.5 0.5 H15.5 V11.5 H11 Q10 10.5 9 11.5 H7 Q6 10.5 5 11.5 H0.5Z" fill="#eef6ff" stroke="#5c9ae0" stroke-width="1"/><rect x="2" y="2" width="5" height="6" fill="#2a5db0"/><circle cx="4.5" cy="5" r="1.8" fill="#f26a2a"/><circle cx="4.5" cy="4.8" r="0.9" fill="#fff"/><rect x="2" y="2" width="5" height="1.3" fill="#222"/><rect x="2" y="8" width="5" height="1" fill="#a8c8f0"/><rect x="9" y="2" width="5" height="1" fill="#5b8fd8"/><rect x="9" y="4" width="5" height="1" fill="#9ab"/><rect x="9" y="6" width="5" height="1" fill="#9ab"/><rect x="9" y="8" width="5" height="1" fill="#9ab"/></svg>
<div class="a t" style="left:38px;top:93px;color:transparent">系统功能导航窗</div>
<svg class="a" style="left:38px;top:93px;overflow:visible" width="84" height="12" fill="#000" shape-rendering="crispEdges"><use href="#g25" x="1" y="0"/><use href="#g26" x="12" y="0"/><use href="#g51" x="24" y="0"/><use href="#g52" x="36" y="0"/><use href="#g53" x="48" y="0"/><use href="#g54" x="60" y="0"/><use href="#g44" x="73" y="0"/></svg>
<div class="a t" style="left:184px;top:93px;color:transparent">工资单管理</div>
<svg class="a" style="left:184px;top:93px;overflow:visible" width="60" height="12" fill="#000" shape-rendering="crispEdges"><use href="#g42" x="0" y="1"/><use href="#g38" x="12" y="0"/><use href="#g70" x="24" y="0"/><use href="#g27" x="36" y="0"/><use href="#g28" x="48" y="0"/></svg>
<div class="a t" style="left:300px;top:91px;color:transparent">工资发放模版设置</div>
<svg class="a" style="left:300px;top:91px;overflow:visible" width="96" height="12" fill="#000" shape-rendering="crispEdges"><use href="#g42" x="0" y="1"/><use href="#g38" x="12" y="0"/><use href="#g71" x="24" y="0"/><use href="#g72" x="36" y="0"/><use href="#g73" x="48" y="0"/><use href="#g74" x="60" y="0"/><use href="#g75" x="72" y="0"/><use href="#g76" x="84" y="0"/></svg>
<div class="a" style="left:0px;top:111px;width:1440px;height:1px;background:#aca899"></div>
<div class="a" style="left:0px;top:111px;width:1px;height:50px;background:#aca899"></div>
<div class="a" style="left:1px;top:112px;width:1439px;height:1px;background:#fff"></div>
<div class="a" style="left:1px;top:112px;width:1px;height:48px;background:#fff"></div>
<div class="a" style="left:0px;top:160px;width:1439px;height:1px;background:#aca899"></div>
<div class="a" style="left:0px;top:161px;width:1440px;height:1px;background:#fff"></div>
<div class="a" style="left:1438px;top:111px;width:1px;height:50px;background:#aca899"></div>
<div class="a" style="left:1439px;top:111px;width:1px;height:50px;background:#fff"></div>
<div class="a" style="left:4px;top:115px;width:1px;height:43px;background:#fff"></div>
<div class="a" style="left:6px;top:115px;width:1px;height:43px;background:#aca899"></div>
<svg class="a" style="left:39px;top:116px" width="23" height="23" viewBox="0 0 23 23"><defs><linearGradient id="gpc" x1="0" y1="0" x2="0" y2="1"><stop offset="0" stop-color="#6ee82a"/><stop offset="0.5" stop-color="#3cc818"/><stop offset="1" stop-color="#1a9a16"/></linearGradient></defs><circle cx="11" cy="11.2" r="11" fill="url(#gpc)"/><path d="M9 5 h4 v4.2 h4 v4 h-4 v4.5 h-4 v-4.5 h-4 v-4 h4z" fill="#fff"/></svg>
<svg class="a" style="left:118px;top:116px" width="23" height="23" viewBox="0 0 23 23"><defs><linearGradient id="gbs" x1="0" y1="0" x2="0" y2="1"><stop offset="0" stop-color="#66d0ff"/><stop offset="1" stop-color="#2a90f0"/></linearGradient></defs><rect x="0" y="0" width="23" height="23" rx="5" fill="url(#gbs)"/><rect x="5" y="5" width="13" height="13" rx="2" fill="#50b0ff" stroke="#fff" stroke-width="2"/></svg>
<svg class="a" style="left:197px;top:116px" width="22" height="22" viewBox="0 0 22 22"><defs><radialGradient id="gxc" cx="0.4" cy="0.3" r="0.8"><stop offset="0" stop-color="#ff9a6a"/><stop offset="1" stop-color="#e0401a"/></radialGradient></defs><circle cx="11" cy="11" r="10.5" fill="url(#gxc)"/><path d="M6.5 6.5 L15.5 15.5 M15.5 6.5 L6.5 15.5" stroke="#fff" stroke-width="3.2" stroke-linecap="round"/></svg>
<svg class="a" style="left:283px;top:116px" width="24" height="24" viewBox="0 0 24 24"><defs><linearGradient id="stg" x1="0.2" y1="0" x2="0.6" y2="1"><stop offset="0" stop-color="#fff6c8"/><stop offset="0.45" stop-color="#f6dc80"/><stop offset="0.55" stop-color="#ffd000"/><stop offset="1" stop-color="#f8e860"/></linearGradient></defs><path d="M11.80 2.00 L15.33 8.15 L22.26 9.60 L17.51 14.85 L18.27 21.90 L11.80 19.00 L5.33 21.90 L6.09 14.85 L1.34 9.60 L8.27 8.15Z" fill="url(#stg)" stroke="#b89028" stroke-width="1.1" stroke-linejoin="round"/><path d="M16.5 13.5 h3 v3 h3 v3 h-3 v3 h-3 v-3 h-3 v-3 h3z" fill="#88ee66" stroke="#0a7a0a" stroke-width="1.2"/></svg>
<svg class="a" style="left:370px;top:117px" width="24" height="22" viewBox="0 0 24 22"><defs><linearGradient id="dhd" x1="0" y1="0" x2="1" y2="1"><stop offset="0" stop-color="#ffffff"/><stop offset="1" stop-color="#c8dcf0"/></linearGradient><linearGradient id="dhh" x1="0" y1="0" x2="1" y2="0"><stop offset="0" stop-color="#f8d890"/><stop offset="1" stop-color="#e89038"/></linearGradient></defs><rect x="0.5" y="3.5" width="14" height="17.5" fill="url(#dhd)" stroke="#5a6ab0" stroke-width="1"/><rect x="3" y="10" width="8" height="1.2" fill="#5aa8f0"/><rect x="3" y="13" width="8" height="1.2" fill="#5aa8f0"/><rect x="3" y="15.5" width="8" height="1.2" fill="#5aa8f0"/><path d="M2.5 11 L9.5 3 L12 1.5 L17 1.5 L17.5 8 L13 9 L10.5 11.5 Z" fill="url(#dhh)" stroke="#a05020" stroke-width="0.7"/><rect x="17" y="1.5" width="3" height="8" fill="#e8e8e8" stroke="#888" stroke-width="0.5"/><rect x="20" y="0.5" width="4" height="10" fill="#505050"/></svg>
<svg class="a" style="left:452px;top:117px" width="22" height="22" viewBox="0 0 22 22"><defs><linearGradient id="flp" x1="0" y1="0" x2="1" y2="0"><stop offset="0" stop-color="#e8e8e8"/><stop offset="0.4" stop-color="#ffffff"/><stop offset="1" stop-color="#707070"/></linearGradient></defs><rect x="0.5" y="0.5" width="6" height="21.5" rx="1" fill="url(#flp)" stroke="#909090" stroke-width="0.6"/><path d="M6.5 1.5 H12 L12.5 1 H18.5 V11.5 H13 L12 12.5 H6.5 Z" fill="#ff8a20" stroke="#e83a00" stroke-width="0.9"/><rect x="11" y="2" width="2" height="10" fill="#ff4a00"/></svg>
<svg class="a" style="left:536px;top:116px" width="24" height="24" viewBox="0 0 24 24"><defs><linearGradient id="gdx" x1="0" y1="0" x2="1" y2="1"><stop offset="0" stop-color="#ffffff"/><stop offset="1" stop-color="#c8dcf4"/></linearGradient></defs><path d="M0.5 0.5 H12 L17 5 V21.5 H0.5Z" fill="url(#gdx)" stroke="#8090c8" stroke-width="1"/><path d="M12 0.5 L12 5 L17 5Z" fill="#80b0f0"/><rect x="8.5" y="8.5" width="15" height="15" fill="#fff" stroke="#0b6a0b" stroke-width="1.6"/><path d="M12 20 Q16 19 16 15 L14 15 L17.5 11 L21 15 L19 15 Q18 20 12 20Z" fill="#2aa020"/></svg>
<svg class="a" style="left:624px;top:117px" width="22" height="22" viewBox="0 0 22 22"><defs><linearGradient id="gox22" x1="0" y1="0" x2="1" y2="1"><stop offset="0" stop-color="#ffa030"/><stop offset="0.5" stop-color="#f47800"/><stop offset="1" stop-color="#c85000"/></linearGradient></defs><rect x="0" y="0" width="22" height="22" rx="3.6666666666666665" fill="url(#gox22)"/><path d="M6.82 6.82 L15.18 15.18 M15.18 6.82 L6.82 15.18" stroke="#fff" stroke-width="2.6399999999999997" stroke-linecap="round"/></svg>
<div class="a t" style="left:26px;top:145px;color:transparent">添加模版</div>
<svg class="a" style="left:26px;top:145px;overflow:visible" width="48" height="12" fill="#000" shape-rendering="crispEdges"><use href="#g77" x="0" y="0"/><use href="#g78" x="12" y="0"/><use href="#g73" x="24" y="0"/><use href="#g74" x="36" y="0"/></svg>
<div class="a t" style="left:98px;top:145px;color:transparent">修改模版名</div>
<svg class="a" style="left:98px;top:145px;overflow:visible" width="60" height="12" fill="#000" shape-rendering="crispEdges"><use href="#g55" x="0" y="0"/><use href="#g56" x="12" y="0"/><use href="#g73" x="24" y="0"/><use href="#g74" x="36" y="0"/><use href="#g79" x="48" y="0"/></svg>
<div class="a t" style="left:183px;top:145px;color:transparent">删除模版</div>
<svg class="a" style="left:183px;top:145px;overflow:visible" width="48" height="12" fill="#000" shape-rendering="crispEdges"><use href="#g80" x="0" y="0"/><use href="#g81" x="12" y="0"/><use href="#g73" x="24" y="0"/><use href="#g74" x="36" y="0"/></svg>
<div class="a t" style="left:271px;top:145px;color:transparent">复制模版</div>
<svg class="a" style="left:271px;top:145px;overflow:visible" width="48" height="12" fill="#000" shape-rendering="crispEdges"><use href="#g82" x="0" y="0"/><use href="#g83" x="12" y="0"/><use href="#g73" x="24" y="0"/><use href="#g74" x="36" y="0"/></svg>
<div class="a t" style="left:345px;top:145px;color:transparent">设置工资项目</div>
<svg class="a" style="left:345px;top:145px;overflow:visible" width="72" height="12" fill="#000" shape-rendering="crispEdges"><use href="#g75" x="0" y="0"/><use href="#g76" x="12" y="0"/><use href="#g42" x="24" y="1"/><use href="#g38" x="36" y="0"/><use href="#g84" x="48" y="0"/><use href="#g85" x="62" y="0"/></svg>
<div class="a t" style="left:436px;top:145px;color:transparent">工资接口</div>
<svg class="a" style="left:436px;top:145px;overflow:visible" width="48" height="12" fill="#000" shape-rendering="crispEdges"><use href="#g42" x="0" y="1"/><use href="#g38" x="12" y="0"/><use href="#g86" x="24" y="0"/><use href="#g45" x="37" y="1"/></svg>
<div class="a t" style="left:610px;top:145px;color:transparent">关闭窗口</div>
<svg class="a" style="left:610px;top:145px;overflow:visible" width="48" height="12" fill="#000" shape-rendering="crispEdges"><use href="#g87" x="0" y="0"/><use href="#g88" x="12" y="0"/><use href="#g44" x="25" y="0"/><use href="#g45" x="37" y="1"/></svg>
<div class="a t" style="left:515px;top:145px;color:transparent">导出到EXCEL</div>
<svg class="a" style="left:515px;top:145px;overflow:visible" width="66" height="12" fill="#000" shape-rendering="crispEdges"><use href="#g53" x="0" y="0"/><use href="#g69" x="12" y="0"/><use href="#g89" x="24" y="0"/><use href="#g90" x="36" y="3"/><use href="#g91" x="41" y="3"/><use href="#g92" x="48" y="3"/><use href="#g90" x="54" y="3"/><use href="#g93" x="60" y="3"/></svg>
<div class="a" style="left:252px;top:114px;width:1px;height:44px;background:#aca899"></div>
<div class="a" style="left:253px;top:114px;width:1px;height:44px;background:#fff"></div>
<div class="a" style="left:338px;top:114px;width:1px;height:44px;background:#aca899"></div>
<div class="a" style="left:339px;top:114px;width:1px;height:44px;background:#fff"></div>
<div class="a" style="left:504px;top:114px;width:1px;height:44px;background:#aca899"></div>
<div class="a" style="left:505px;top:114px;width:1px;height:44px;background:#fff"></div>
<div class="a" style="left:591px;top:114px;width:1px;height:44px;background:#aca899"></div>
<div class="a" style="left:592px;top:114px;width:1px;height:44px;background:#fff"></div>
<div class="a" style="left:678px;top:114px;width:1px;height:44px;background:#aca899"></div>
<div class="a" style="left:679px;top:114px;width:1px;height:44px;background:#fff"></div>
<div class="a" style="left:0px;top:162px;width:203px;height:685px;background:#fff;border-top:1px solid #aca899;border-left:1px solid #aca899;border-right:1px solid #fff;border-bottom:1px solid #fff"></div>
<div class="a" style="left:1px;top:163px;width:201px;height:683px;border-top:1px solid #716f64;border-left:1px solid #716f64;border-right:1px solid #f1efe2;border-bottom:1px solid #f1efe2"></div>
<div class="a" style="left:52px;top:164px;width:76px;height:20px;background:#ece9d8"></div>
<svg class="a" style="left:11px;top:173px" width="20" height="23"><g fill="#a0a0a0" shape-rendering="crispEdges"><rect x="1" y="1" width="1" height="1"/><rect x="1" y="21" width="1" height="1"/><rect x="3" y="1" width="1" height="1"/><rect x="3" y="21" width="1" height="1"/><rect x="5" y="1" width="1" height="1"/><rect x="5" y="21" width="1" height="1"/><rect x="7" y="1" width="1" height="1"/><rect x="7" y="21" width="1" height="1"/><rect x="9" y="1" width="1" height="1"/><rect x="9" y="21" width="1" height="1"/><rect x="11" y="1" width="1" height="1"/><rect x="11" y="21" width="1" height="1"/><rect x="13" y="1" width="1" height="1"/><rect x="13" y="21" width="1" height="1"/><rect x="15" y="1" width="1" height="1"/><rect x="15" y="21" width="1" height="1"/><rect x="17" y="1" width="1" height="1"/><rect x="17" y="21" width="1" height="1"/><rect x="1" y="3" width="1" height="1"/><rect x="1" y="5" width="1" height="1"/><rect x="1" y="7" width="1" height="1"/><rect x="1" y="9" width="1" height="1"/><rect x="1" y="11" width="1" height="1"/><rect x="1" y="13" width="1" height="1"/><rect x="1" y="15" width="1" height="1"/><rect x="1" y="17" width="1" height="1"/><rect x="1" y="19" width="1" height="1"/></g></svg>
<svg class="a" style="left:31px;top:166px" width="16" height="16" viewBox="0 0 16 16"><defs><radialGradient id="gcc" cx="0.4" cy="0.3" r="0.8"><stop offset="0" stop-color="#9be87a"/><stop offset="1" stop-color="#3aa82a"/></radialGradient></defs><circle cx="8" cy="8" r="7" fill="url(#gcc)"/><path d="M4 8.5 L7 11 L12 5" fill="none" stroke="#fff" stroke-width="2.2"/></svg>
<svg class="a" style="left:31px;top:186px" width="16" height="16" viewBox="0 0 16 16"><g shape-rendering="crispEdges"><rect x="1" y="3" width="14" height="13" fill="#eaf4ff"/><rect x="1" y="3" width="1" height="12" fill="#7ab4f0"/><rect x="14" y="3" width="1" height="12" fill="#7ab4f0"/><rect x="1" y="2" width="14" height="4" fill="#e83a1a"/><rect x="1" y="15" width="14" height="1" fill="#d83a1a"/><rect x="3" y="7" width="10" height="7" fill="#a8b8c8"/><rect x="3" y="7" width="10" height="2" fill="#3cb83c"/><rect x="4" y="10" width="2" height="1" fill="#fff"/><rect x="7" y="10" width="2" height="1" fill="#fff"/><rect x="10" y="10" width="2" height="1" fill="#fff"/><rect x="4" y="12" width="2" height="1" fill="#fff"/><rect x="7" y="12" width="2" height="1" fill="#fff"/><rect x="10" y="12" width="2" height="1" fill="#fff"/><rect x="3" y="0" width="2" height="4" fill="#a0a0a0"/><rect x="10" y="0" width="2" height="4" fill="#a0a0a0"/><rect x="3" y="4" width="2" height="1" fill="#fff"/></g></svg>
<div class="a t" style="left:54px;top:168px;color:transparent">正式员工工资</div>
<svg class="a" style="left:54px;top:168px;overflow:visible" width="72" height="12" fill="#000" shape-rendering="crispEdges"><use href="#g94" x="0" y="1"/><use href="#g95" x="12" y="0"/><use href="#g63" x="24" y="0"/><use href="#g42" x="36" y="1"/><use href="#g42" x="48" y="1"/><use href="#g38" x="60" y="0"/></svg>
<div class="a t" style="left:54px;top:188px;color:transparent">临时工工资</div>
<svg class="a" style="left:54px;top:188px;overflow:visible" width="60" height="12" fill="#000" shape-rendering="crispEdges"><use href="#g96" x="0" y="0"/><use href="#g97" x="12" y="0"/><use href="#g42" x="24" y="1"/><use href="#g42" x="36" y="1"/><use href="#g38" x="48" y="0"/></svg>
<div class="a" style="left:209px;top:162px;width:1230px;height:407px;background:#fff;border-top:1px solid #aca899;border-left:1px solid #aca899"></div>
<div class="a" style="left:210px;top:163px;width:919px;height:23px;background:#ece9d8"></div>
<div class="a" style="left:210px;top:186px;width:919px;height:1px;background:#808080"></div>
<div class="a" style="left:210px;top:163px;width:10px;height:1px;background:#fff"></div>
<div class="a" style="left:210px;top:163px;width:1px;height:23px;background:#fff"></div>
<div class="a" style="left:221px;top:163px;width:1px;height:23px;background:#808080"></div>
<div class="a" style="left:222px;top:163px;width:42px;height:1px;background:#fff"></div>
<div class="a" style="left:222px;top:163px;width:1px;height:23px;background:#fff"></div>
<div class="a" style="left:264px;top:163px;width:1px;height:23px;background:#808080"></div>
<div class="a" style="left:265px;top:163px;width:139px;height:1px;background:#fff"></div>
<div class="a" style="left:265px;top:163px;width:1px;height:23px;background:#fff"></div>
<div class="a" style="left:404px;top:163px;width:1px;height:23px;background:#808080"></div>
<div class="a" style="left:405px;top:163px;width:80px;height:1px;background:#fff"></div>
<div class="a" style="left:405px;top:163px;width:1px;height:23px;background:#fff"></div>
<div class="a" style="left:485px;top:163px;width:1px;height:23px;background:#808080"></div>
<div class="a" style="left:486px;top:163px;width:76px;height:1px;background:#fff"></div>
<div class="a" style="left:486px;top:163px;width:1px;height:23px;background:#fff"></div>
<div class="a" style="left:562px;top:163px;width:1px;height:23px;background:#808080"></div>
<div class="a" style="left:563px;top:163px;width:77px;height:1px;background:#fff"></div>
<div class="a" style="left:563px;top:163px;width:1px;height:23px;background:#fff"></div>
<div class="a" style="left:640px;top:163px;width:1px;height:23px;background:#808080"></div>
<div class="a" style="left:641px;top:163px;width:76px;height:1px;background:#fff"></div>
<div class="a" style="left:641px;top:163px;width:1px;height:23px;background:#fff"></div>
<div class="a" style="left:717px;top:163px;width:1px;height:23px;background:#808080"></div>
<div class="a" style="left:718px;top:163px;width:74px;height:1px;background:#fff"></div>
<div class="a" style="left:718px;top:163px;width:1px;height:23px;background:#fff"></div>
<div class="a" style="left:792px;top:163px;width:1px;height:23px;background:#808080"></div>
<div class="a" style="left:793px;top:163px;width:50px;height:1px;background:#fff"></div>
<div class="a" style="left:793px;top:163px;width:1px;height:23px;background:#fff"></div>
<div class="a" style="left:843px;top:163px;width:1px;height:23px;background:#808080"></div>
<div class="a" style="left:844px;top:163px;width:284px;height:1px;background:#fff"></div>
<div class="a" style="left:844px;top:163px;width:1px;height:23px;background:#fff"></div>
<div class="a" style="left:1128px;top:163px;width:1px;height:23px;background:#808080"></div>
<div class="a t" style="left:231px;top:168px;color:transparent">显示</div>
<svg class="a" style="left:231px;top:168px;overflow:visible" width="24" height="12" fill="#000" shape-rendering="crispEdges"><use href="#g98" x="0" y="0"/><use href="#g99" x="12" y="1"/></svg>
<div class="a t" style="left:299px;top:168px;color:transparent">工资项目名称</div>
<svg class="a" style="left:299px;top:168px;overflow:visible" width="72" height="12" fill="#000" shape-rendering="crispEdges"><use href="#g42" x="0" y="1"/><use href="#g38" x="12" y="0"/><use href="#g84" x="24" y="0"/><use href="#g85" x="38" y="0"/><use href="#g79" x="48" y="0"/><use href="#g100" x="60" y="0"/></svg>
<div class="a t" style="left:433px;top:168px;color:transparent">类型</div>
<svg class="a" style="left:433px;top:168px;overflow:visible" width="24" height="12" fill="#000" shape-rendering="crispEdges"><use href="#g101" x="0" y="0"/><use href="#g102" x="12" y="0"/></svg>
<div class="a t" style="left:494px;top:168px;color:transparent">小数点位数</div>
<svg class="a" style="left:494px;top:168px;overflow:visible" width="60" height="12" fill="#000" shape-rendering="crispEdges"><use href="#g103" x="0" y="0"/><use href="#g104" x="12" y="0"/><use href="#g105" x="24" y="0"/><use href="#g106" x="36" y="0"/><use href="#g104" x="48" y="0"/></svg>
<div class="a t" style="left:578px;top:168px;color:transparent">数据精度</div>
<svg class="a" style="left:578px;top:168px;overflow:visible" width="48" height="12" fill="#000" shape-rendering="crispEdges"><use href="#g104" x="0" y="0"/><use href="#g107" x="12" y="0"/><use href="#g108" x="24" y="0"/><use href="#g109" x="36" y="0"/></svg>
<div class="a t" style="left:661px;top:168px;color:transparent">默认值</div>
<svg class="a" style="left:661px;top:168px;overflow:visible" width="36" height="12" fill="#000" shape-rendering="crispEdges"><use href="#g110" x="0" y="0"/><use href="#g111" x="12" y="0"/><use href="#g112" x="24" y="0"/></svg>
<div class="a t" style="left:725px;top:168px;color:transparent">从上期复制</div>
<svg class="a" style="left:725px;top:168px;overflow:visible" width="60" height="12" fill="#000" shape-rendering="crispEdges"><use href="#g113" x="0" y="0"/><use href="#g114" x="12" y="0"/><use href="#g115" x="24" y="0"/><use href="#g82" x="36" y="0"/><use href="#g83" x="48" y="0"/></svg>
<div class="a t" style="left:806px;top:168px;color:transparent">排序</div>
<svg class="a" style="left:806px;top:168px;overflow:visible" width="24" height="12" fill="#000" shape-rendering="crispEdges"><use href="#g116" x="0" y="0"/><use href="#g117" x="12" y="0"/></svg>
<div class="a t" style="left:962px;top:168px;color:transparent">计算公式</div>
<svg class="a" style="left:962px;top:168px;overflow:visible" width="48" height="12" fill="#000" shape-rendering="crispEdges"><use href="#g118" x="0" y="0"/><use href="#g119" x="12" y="0"/><use href="#g120" x="24" y="0"/><use href="#g95" x="36" y="0"/></svg>
<div class="a" style="left:844px;top:187px;width:284px;height:329px;background:#ffffe1"></div>
<div class="a" style="left:210px;top:187px;width:11px;height:21px;background:#ece9d8;border-left:1px solid #fff;border-top:1px solid #fff"></div>
<div class="a" style="left:210px;top:208px;width:11px;height:1px;background:#808080"></div>
<div class="a" style="left:222px;top:208px;width:907px;height:1px;background:#c0c0c0"></div>
<div class="a" style="left:238px;top:192px;width:11px;height:11px;border:1px solid #aca899;background:#fff"></div>
<svg class="a" style="left:240px;top:194px" width="7" height="7" viewBox="0 0 7 7"><g shape-rendering="crispEdges"><rect x="6" y="0" width="1" height="1"/><rect x="5" y="1" width="2" height="1"/><rect x="0" y="2" width="1" height="1"/><rect x="4" y="2" width="3" height="1"/><rect x="0" y="3" width="2" height="1"/><rect x="3" y="3" width="3" height="1"/><rect x="0" y="4" width="5" height="1"/><rect x="1" y="5" width="3" height="1"/><rect x="2" y="6" width="1" height="1"/></g></svg>
<div class="a t" style="left:269px;top:191px;color:transparent">基本工资</div>
<svg class="a" style="left:269px;top:191px;overflow:visible" width="48" height="12" fill="#000" shape-rendering="crispEdges"><use href="#g36" x="0" y="0"/><use href="#g121" x="12" y="0"/><use href="#g42" x="24" y="1"/><use href="#g38" x="36" y="0"/></svg>
<div class="a t" style="left:410px;top:191px;color:transparent">输入项</div>
<svg class="a" style="left:410px;top:191px;overflow:visible" width="36" height="12" fill="#000" shape-rendering="crispEdges"><use href="#g122" x="0" y="0"/><use href="#g123" x="12" y="0"/><use href="#g84" x="24" y="0"/></svg>
<div class="a t" style="left:490px;top:191px;color:transparent">2</div>
<svg class="a" style="left:490px;top:191px;overflow:visible" width="6" height="12" fill="#000" shape-rendering="crispEdges"><use href="#g124" x="0" y="3"/></svg>
<div class="a t" style="left:568px;top:191px;color:transparent">四舍五入</div>
<svg class="a" style="left:568px;top:191px;overflow:visible" width="48" height="12" fill="#000" shape-rendering="crispEdges"><use href="#g125" x="1" y="1"/><use href="#g126" x="12" y="0"/><use href="#g127" x="24" y="1"/><use href="#g123" x="36" y="0"/></svg>
<svg class="a" style="left:751px;top:189px" width="7" height="9" viewBox="0 0 7 9"><g shape-rendering="crispEdges"><rect x="0" y="6" width="1" height="1"/><rect x="1" y="5" width="1" height="1"/><rect x="2" y="6" width="1" height="1"/><rect x="3" y="7" width="1" height="1"/><rect x="4" y="6" width="1" height="1"/><rect x="4" y="7" width="1" height="1"/><rect x="4" y="8" width="1" height="1"/><rect x="5" y="3" width="1" height="1"/><rect x="5" y="4" width="1" height="1"/><rect x="5" y="5" width="1" height="1"/><rect x="6" y="0" width="1" height="1"/><rect x="6" y="1" width="1" height="1"/><rect x="6" y="2" width="1" height="1"/></g></svg>
<div class="a t" style="left:815px;top:191px;color:transparent">1</div>
<svg class="a" style="left:815px;top:191px;overflow:visible" width="6" height="12" fill="#000" shape-rendering="crispEdges"><use href="#g128" x="0" y="3"/></svg>
<div class="a" style="left:210px;top:209px;width:11px;height:21px;background:#ece9d8;border-left:1px solid #fff;border-top:1px solid #fff"></div>
<div class="a" style="left:210px;top:230px;width:11px;height:1px;background:#808080"></div>
<div class="a" style="left:222px;top:230px;width:907px;height:1px;background:#c0c0c0"></div>
<div class="a" style="left:238px;top:214px;width:11px;height:11px;border:1px solid #aca899;background:#fff"></div>
<svg class="a" style="left:240px;top:216px" width="7" height="7" viewBox="0 0 7 7"><g shape-rendering="crispEdges"><rect x="6" y="0" width="1" height="1"/><rect x="5" y="1" width="2" height="1"/><rect x="0" y="2" width="1" height="1"/><rect x="4" y="2" width="3" height="1"/><rect x="0" y="3" width="2" height="1"/><rect x="3" y="3" width="3" height="1"/><rect x="0" y="4" width="5" height="1"/><rect x="1" y="5" width="3" height="1"/><rect x="2" y="6" width="1" height="1"/></g></svg>
<div class="a t" style="left:269px;top:213px;color:transparent">岗位补贴</div>
<svg class="a" style="left:269px;top:213px;overflow:visible" width="48" height="12" fill="#000" shape-rendering="crispEdges"><use href="#g129" x="1" y="0"/><use href="#g106" x="12" y="0"/><use href="#g130" x="24" y="0"/><use href="#g131" x="36" y="0"/></svg>
<div class="a t" style="left:410px;top:213px;color:transparent">输入项</div>
<svg class="a" style="left:410px;top:213px;overflow:visible" width="36" height="12" fill="#000" shape-rendering="crispEdges"><use href="#g122" x="0" y="0"/><use href="#g123" x="12" y="0"/><use href="#g84" x="24" y="0"/></svg>
<div class="a t" style="left:490px;top:213px;color:transparent">2</div>
<svg class="a" style="left:490px;top:213px;overflow:visible" width="6" height="12" fill="#000" shape-rendering="crispEdges"><use href="#g124" x="0" y="3"/></svg>
<div class="a t" style="left:568px;top:213px;color:transparent">四舍五入</div>
<svg class="a" style="left:568px;top:213px;overflow:visible" width="48" height="12" fill="#000" shape-rendering="crispEdges"><use href="#g125" x="1" y="1"/><use href="#g126" x="12" y="0"/><use href="#g127" x="24" y="1"/><use href="#g123" x="36" y="0"/></svg>
<svg class="a" style="left:751px;top:211px" width="7" height="9" viewBox="0 0 7 9"><g shape-rendering="crispEdges"><rect x="0" y="6" width="1" height="1"/><rect x="1" y="5" width="1" height="1"/><rect x="2" y="6" width="1" height="1"/><rect x="3" y="7" width="1" height="1"/><rect x="4" y="6" width="1" height="1"/><rect x="4" y="7" width="1" height="1"/><rect x="4" y="8" width="1" height="1"/><rect x="5" y="3" width="1" height="1"/><rect x="5" y="4" width="1" height="1"/><rect x="5" y="5" width="1" height="1"/><rect x="6" y="0" width="1" height="1"/><rect x="6" y="1" width="1" height="1"/><rect x="6" y="2" width="1" height="1"/></g></svg>
<div class="a t" style="left:815px;top:213px;color:transparent">2</div>
<svg class="a" style="left:815px;top:213px;overflow:visible" width="6" height="12" fill="#000" shape-rendering="crispEdges"><use href="#g124" x="0" y="3"/></svg>
<div class="a" style="left:210px;top:231px;width:11px;height:21px;background:#ece9d8;border-left:1px solid #fff;border-top:1px solid #fff"></div>
<div class="a" style="left:210px;top:252px;width:11px;height:1px;background:#808080"></div>
<div class="a" style="left:222px;top:252px;width:907px;height:1px;background:#c0c0c0"></div>
<div class="a" style="left:238px;top:236px;width:11px;height:11px;border:1px solid #aca899;background:#fff"></div>
<svg class="a" style="left:240px;top:238px" width="7" height="7" viewBox="0 0 7 7"><g shape-rendering="crispEdges"><rect x="6" y="0" width="1" height="1"/><rect x="5" y="1" width="2" height="1"/><rect x="0" y="2" width="1" height="1"/><rect x="4" y="2" width="3" height="1"/><rect x="0" y="3" width="2" height="1"/><rect x="3" y="3" width="3" height="1"/><rect x="0" y="4" width="5" height="1"/><rect x="1" y="5" width="3" height="1"/><rect x="2" y="6" width="1" height="1"/></g></svg>
<div class="a t" style="left:269px;top:235px;color:transparent">午餐补贴</div>
<svg class="a" style="left:269px;top:235px;overflow:visible" width="48" height="12" fill="#000" shape-rendering="crispEdges"><use href="#g132" x="1" y="0"/><use href="#g133" x="12" y="0"/><use href="#g130" x="24" y="0"/><use href="#g131" x="36" y="0"/></svg>
<div class="a t" style="left:410px;top:235px;color:transparent">输入项</div>
<svg class="a" style="left:410px;top:235px;overflow:visible" width="36" height="12" fill="#000" shape-rendering="crispEdges"><use href="#g122" x="0" y="0"/><use href="#g123" x="12" y="0"/><use href="#g84" x="24" y="0"/></svg>
<div class="a t" style="left:490px;top:235px;color:transparent">2</div>
<svg class="a" style="left:490px;top:235px;overflow:visible" width="6" height="12" fill="#000" shape-rendering="crispEdges"><use href="#g124" x="0" y="3"/></svg>
<div class="a t" style="left:568px;top:235px;color:transparent">四舍五入</div>
<svg class="a" style="left:568px;top:235px;overflow:visible" width="48" height="12" fill="#000" shape-rendering="crispEdges"><use href="#g125" x="1" y="1"/><use href="#g126" x="12" y="0"/><use href="#g127" x="24" y="1"/><use href="#g123" x="36" y="0"/></svg>
<svg class="a" style="left:751px;top:233px" width="7" height="9" viewBox="0 0 7 9"><g shape-rendering="crispEdges"><rect x="0" y="6" width="1" height="1"/><rect x="1" y="5" width="1" height="1"/><rect x="2" y="6" width="1" height="1"/><rect x="3" y="7" width="1" height="1"/><rect x="4" y="6" width="1" height="1"/><rect x="4" y="7" width="1" height="1"/><rect x="4" y="8" width="1" height="1"/><rect x="5" y="3" width="1" height="1"/><rect x="5" y="4" width="1" height="1"/><rect x="5" y="5" width="1" height="1"/><rect x="6" y="0" width="1" height="1"/><rect x="6" y="1" width="1" height="1"/><rect x="6" y="2" width="1" height="1"/></g></svg>
<div class="a t" style="left:815px;top:235px;color:transparent">3</div>
<svg class="a" style="left:815px;top:235px;overflow:visible" width="6" height="12" fill="#000" shape-rendering="crispEdges"><use href="#g134" x="0" y="3"/></svg>
<div class="a" style="left:210px;top:253px;width:11px;height:21px;background:#ece9d8;border-left:1px solid #fff;border-top:1px solid #fff"></div>
<div class="a" style="left:210px;top:274px;width:11px;height:1px;background:#808080"></div>
<div class="a" style="left:222px;top:274px;width:907px;height:1px;background:#c0c0c0"></div>
<div class="a" style="left:238px;top:258px;width:11px;height:11px;border:1px solid #aca899;background:#fff"></div>
<svg class="a" style="left:240px;top:260px" width="7" height="7" viewBox="0 0 7 7"><g shape-rendering="crispEdges"><rect x="6" y="0" width="1" height="1"/><rect x="5" y="1" width="2" height="1"/><rect x="0" y="2" width="1" height="1"/><rect x="4" y="2" width="3" height="1"/><rect x="0" y="3" width="2" height="1"/><rect x="3" y="3" width="3" height="1"/><rect x="0" y="4" width="5" height="1"/><rect x="1" y="5" width="3" height="1"/><rect x="2" y="6" width="1" height="1"/></g></svg>
<div class="a t" style="left:269px;top:257px;color:transparent">通讯补贴</div>
<svg class="a" style="left:269px;top:257px;overflow:visible" width="48" height="12" fill="#000" shape-rendering="crispEdges"><use href="#g135" x="0" y="0"/><use href="#g136" x="12" y="0"/><use href="#g130" x="24" y="0"/><use href="#g131" x="36" y="0"/></svg>
<div class="a t" style="left:410px;top:257px;color:transparent">输入项</div>
<svg class="a" style="left:410px;top:257px;overflow:visible" width="36" height="12" fill="#000" shape-rendering="crispEdges"><use href="#g122" x="0" y="0"/><use href="#g123" x="12" y="0"/><use href="#g84" x="24" y="0"/></svg>
<div class="a t" style="left:490px;top:257px;color:transparent">2</div>
<svg class="a" style="left:490px;top:257px;overflow:visible" width="6" height="12" fill="#000" shape-rendering="crispEdges"><use href="#g124" x="0" y="3"/></svg>
<div class="a t" style="left:568px;top:257px;color:transparent">四舍五入</div>
<svg class="a" style="left:568px;top:257px;overflow:visible" width="48" height="12" fill="#000" shape-rendering="crispEdges"><use href="#g125" x="1" y="1"/><use href="#g126" x="12" y="0"/><use href="#g127" x="24" y="1"/><use href="#g123" x="36" y="0"/></svg>
<div class="a t" style="left:815px;top:257px;color:transparent">4</div>
<svg class="a" style="left:815px;top:257px;overflow:visible" width="6" height="12" fill="#000" shape-rendering="crispEdges"><use href="#g137" x="0" y="3"/></svg>
<div class="a" style="left:210px;top:275px;width:11px;height:21px;background:#ece9d8;border-left:1px solid #fff;border-top:1px solid #fff"></div>
<div class="a" style="left:210px;top:296px;width:11px;height:1px;background:#808080"></div>
<div class="a" style="left:222px;top:296px;width:907px;height:1px;background:#c0c0c0"></div>
<div class="a" style="left:238px;top:280px;width:11px;height:11px;border:1px solid #aca899;background:#fff"></div>
<svg class="a" style="left:240px;top:282px" width="7" height="7" viewBox="0 0 7 7"><g shape-rendering="crispEdges"><rect x="6" y="0" width="1" height="1"/><rect x="5" y="1" width="2" height="1"/><rect x="0" y="2" width="1" height="1"/><rect x="4" y="2" width="3" height="1"/><rect x="0" y="3" width="2" height="1"/><rect x="3" y="3" width="3" height="1"/><rect x="0" y="4" width="5" height="1"/><rect x="1" y="5" width="3" height="1"/><rect x="2" y="6" width="1" height="1"/></g></svg>
<div class="a t" style="left:269px;top:279px;color:transparent">应发工资</div>
<svg class="a" style="left:269px;top:279px;overflow:visible" width="48" height="12" fill="#000" shape-rendering="crispEdges"><use href="#g138" x="0" y="0"/><use href="#g71" x="12" y="0"/><use href="#g42" x="24" y="1"/><use href="#g38" x="36" y="0"/></svg>
<div class="a t" style="left:410px;top:279px;color:transparent">计算项</div>
<svg class="a" style="left:410px;top:279px;overflow:visible" width="36" height="12" fill="#000" shape-rendering="crispEdges"><use href="#g118" x="0" y="0"/><use href="#g119" x="12" y="0"/><use href="#g84" x="24" y="0"/></svg>
<div class="a t" style="left:490px;top:279px;color:transparent">2</div>
<svg class="a" style="left:490px;top:279px;overflow:visible" width="6" height="12" fill="#000" shape-rendering="crispEdges"><use href="#g124" x="0" y="3"/></svg>
<div class="a t" style="left:568px;top:279px;color:transparent">四舍五入</div>
<svg class="a" style="left:568px;top:279px;overflow:visible" width="48" height="12" fill="#000" shape-rendering="crispEdges"><use href="#g125" x="1" y="1"/><use href="#g126" x="12" y="0"/><use href="#g127" x="24" y="1"/><use href="#g123" x="36" y="0"/></svg>
<div class="a t" style="left:815px;top:279px;color:transparent">5</div>
<svg class="a" style="left:815px;top:279px;overflow:visible" width="6" height="12" fill="#000" shape-rendering="crispEdges"><use href="#g139" x="0" y="3"/></svg>
<div class="a" style="left:844px;top:275px;width:284px;height:21px;overflow:hidden">
<div class="a t" style="left:5px;top:4px;color:transparent">{基本工资} + {岗位补贴} + {午餐补贴} + {通讯补贴}</div>
<svg class="a" style="left:5px;top:4px;overflow:visible" width="294" height="12" fill="#000" shape-rendering="crispEdges"><use href="#g140" x="0" y="2"/><use href="#g36" x="6" y="0"/><use href="#g121" x="18" y="0"/><use href="#g42" x="30" y="1"/><use href="#g38" x="42" y="0"/><use href="#g141" x="54" y="2"/><use href="#g142" x="66" y="4"/><use href="#g140" x="78" y="2"/><use href="#g129" x="85" y="0"/><use href="#g106" x="96" y="0"/><use href="#g130" x="108" y="0"/><use href="#g131" x="120" y="0"/><use href="#g141" x="132" y="2"/><use href="#g142" x="144" y="4"/><use href="#g140" x="156" y="2"/><use href="#g132" x="163" y="0"/><use href="#g133" x="174" y="0"/><use href="#g130" x="186" y="0"/><use href="#g131" x="198" y="0"/><use href="#g141" x="210" y="2"/><use href="#g142" x="222" y="4"/><use href="#g140" x="234" y="2"/><use href="#g135" x="240" y="0"/><use href="#g136" x="252" y="0"/><use href="#g130" x="264" y="0"/><use href="#g131" x="276" y="0"/><use href="#g141" x="288" y="2"/></svg>
</div>
<div class="a" style="left:210px;top:297px;width:11px;height:21px;background:#ece9d8;border-left:1px solid #fff;border-top:1px solid #fff"></div>
<div class="a" style="left:210px;top:318px;width:11px;height:1px;background:#808080"></div>
<div class="a" style="left:222px;top:318px;width:907px;height:1px;background:#c0c0c0"></div>
<div class="a" style="left:238px;top:302px;width:11px;height:11px;border:1px solid #aca899;background:#fff"></div>
<svg class="a" style="left:240px;top:304px" width="7" height="7" viewBox="0 0 7 7"><g shape-rendering="crispEdges"><rect x="6" y="0" width="1" height="1"/><rect x="5" y="1" width="2" height="1"/><rect x="0" y="2" width="1" height="1"/><rect x="4" y="2" width="3" height="1"/><rect x="0" y="3" width="2" height="1"/><rect x="3" y="3" width="3" height="1"/><rect x="0" y="4" width="5" height="1"/><rect x="1" y="5" width="3" height="1"/><rect x="2" y="6" width="1" height="1"/></g></svg>
<div class="a t" style="left:269px;top:301px;color:transparent">养老金</div>
<svg class="a" style="left:269px;top:301px;overflow:visible" width="36" height="12" fill="#000" shape-rendering="crispEdges"><use href="#g143" x="0" y="0"/><use href="#g144" x="12" y="0"/><use href="#g145" x="24" y="0"/></svg>
<div class="a t" style="left:410px;top:301px;color:transparent">输入项</div>
<svg class="a" style="left:410px;top:301px;overflow:visible" width="36" height="12" fill="#000" shape-rendering="crispEdges"><use href="#g122" x="0" y="0"/><use href="#g123" x="12" y="0"/><use href="#g84" x="24" y="0"/></svg>
<div class="a t" style="left:490px;top:301px;color:transparent">2</div>
<svg class="a" style="left:490px;top:301px;overflow:visible" width="6" height="12" fill="#000" shape-rendering="crispEdges"><use href="#g124" x="0" y="3"/></svg>
<div class="a t" style="left:568px;top:301px;color:transparent">四舍五入</div>
<svg class="a" style="left:568px;top:301px;overflow:visible" width="48" height="12" fill="#000" shape-rendering="crispEdges"><use href="#g125" x="1" y="1"/><use href="#g126" x="12" y="0"/><use href="#g127" x="24" y="1"/><use href="#g123" x="36" y="0"/></svg>
<div class="a t" style="left:815px;top:301px;color:transparent">6</div>
<svg class="a" style="left:815px;top:301px;overflow:visible" width="6" height="12" fill="#000" shape-rendering="crispEdges"><use href="#g146" x="0" y="3"/></svg>
<div class="a" style="left:210px;top:319px;width:11px;height:21px;background:#ece9d8;border-left:1px solid #fff;border-top:1px solid #fff"></div>
<div class="a" style="left:210px;top:340px;width:11px;height:1px;background:#808080"></div>
<div class="a" style="left:222px;top:340px;width:907px;height:1px;background:#c0c0c0"></div>
<div class="a" style="left:238px;top:324px;width:11px;height:11px;border:1px solid #aca899;background:#fff"></div>
<svg class="a" style="left:240px;top:326px" width="7" height="7" viewBox="0 0 7 7"><g shape-rendering="crispEdges"><rect x="6" y="0" width="1" height="1"/><rect x="5" y="1" width="2" height="1"/><rect x="0" y="2" width="1" height="1"/><rect x="4" y="2" width="3" height="1"/><rect x="0" y="3" width="2" height="1"/><rect x="3" y="3" width="3" height="1"/><rect x="0" y="4" width="5" height="1"/><rect x="1" y="5" width="3" height="1"/><rect x="2" y="6" width="1" height="1"/></g></svg>
<div class="a t" style="left:269px;top:323px;color:transparent">公积金</div>
<svg class="a" style="left:269px;top:323px;overflow:visible" width="36" height="12" fill="#000" shape-rendering="crispEdges"><use href="#g120" x="0" y="0"/><use href="#g147" x="12" y="0"/><use href="#g145" x="24" y="0"/></svg>
<div class="a t" style="left:410px;top:323px;color:transparent">输入项</div>
<svg class="a" style="left:410px;top:323px;overflow:visible" width="36" height="12" fill="#000" shape-rendering="crispEdges"><use href="#g122" x="0" y="0"/><use href="#g123" x="12" y="0"/><use href="#g84" x="24" y="0"/></svg>
<div class="a t" style="left:490px;top:323px;color:transparent">2</div>
<svg class="a" style="left:490px;top:323px;overflow:visible" width="6" height="12" fill="#000" shape-rendering="crispEdges"><use href="#g124" x="0" y="3"/></svg>
<div class="a t" style="left:568px;top:323px;color:transparent">四舍五入</div>
<svg class="a" style="left:568px;top:323px;overflow:visible" width="48" height="12" fill="#000" shape-rendering="crispEdges"><use href="#g125" x="1" y="1"/><use href="#g126" x="12" y="0"/><use href="#g127" x="24" y="1"/><use href="#g123" x="36" y="0"/></svg>
<div class="a t" style="left:815px;top:323px;color:transparent">7</div>
<svg class="a" style="left:815px;top:323px;overflow:visible" width="6" height="12" fill="#000" shape-rendering="crispEdges"><use href="#g148" x="0" y="3"/></svg>
<div class="a" style="left:210px;top:341px;width:11px;height:21px;background:#ece9d8;border-left:1px solid #fff;border-top:1px solid #fff"></div>
<div class="a" style="left:210px;top:362px;width:11px;height:1px;background:#808080"></div>
<div class="a" style="left:222px;top:362px;width:907px;height:1px;background:#c0c0c0"></div>
<div class="a" style="left:238px;top:346px;width:11px;height:11px;border:1px solid #aca899;background:#fff"></div>
<svg class="a" style="left:240px;top:348px" width="7" height="7" viewBox="0 0 7 7"><g shape-rendering="crispEdges"><rect x="6" y="0" width="1" height="1"/><rect x="5" y="1" width="2" height="1"/><rect x="0" y="2" width="1" height="1"/><rect x="4" y="2" width="3" height="1"/><rect x="0" y="3" width="2" height="1"/><rect x="3" y="3" width="3" height="1"/><rect x="0" y="4" width="5" height="1"/><rect x="1" y="5" width="3" height="1"/><rect x="2" y="6" width="1" height="1"/></g></svg>
<div class="a t" style="left:269px;top:345px;color:transparent">病假扣款</div>
<svg class="a" style="left:269px;top:345px;overflow:visible" width="48" height="12" fill="#000" shape-rendering="crispEdges"><use href="#g149" x="0" y="0"/><use href="#g150" x="12" y="0"/><use href="#g151" x="24" y="0"/><use href="#g152" x="36" y="0"/></svg>
<div class="a t" style="left:410px;top:345px;color:transparent">输入项</div>
<svg class="a" style="left:410px;top:345px;overflow:visible" width="36" height="12" fill="#000" shape-rendering="crispEdges"><use href="#g122" x="0" y="0"/><use href="#g123" x="12" y="0"/><use href="#g84" x="24" y="0"/></svg>
<div class="a t" style="left:490px;top:345px;color:transparent">2</div>
<svg class="a" style="left:490px;top:345px;overflow:visible" width="6" height="12" fill="#000" shape-rendering="crispEdges"><use href="#g124" x="0" y="3"/></svg>
<div class="a t" style="left:568px;top:345px;color:transparent">四舍五入</div>
<svg class="a" style="left:568px;top:345px;overflow:visible" width="48" height="12" fill="#000" shape-rendering="crispEdges"><use href="#g125" x="1" y="1"/><use href="#g126" x="12" y="0"/><use href="#g127" x="24" y="1"/><use href="#g123" x="36" y="0"/></svg>
<div class="a t" style="left:815px;top:345px;color:transparent">8</div>
<svg class="a" style="left:815px;top:345px;overflow:visible" width="6" height="12" fill="#000" shape-rendering="crispEdges"><use href="#g153" x="0" y="3"/></svg>
<div class="a" style="left:210px;top:363px;width:11px;height:21px;background:#ece9d8;border-left:1px solid #fff;border-top:1px solid #fff"></div>
<div class="a" style="left:210px;top:384px;width:11px;height:1px;background:#808080"></div>
<div class="a" style="left:222px;top:384px;width:907px;height:1px;background:#c0c0c0"></div>
<div class="a" style="left:238px;top:368px;width:11px;height:11px;border:1px solid #aca899;background:#fff"></div>
<svg class="a" style="left:240px;top:370px" width="7" height="7" viewBox="0 0 7 7"><g shape-rendering="crispEdges"><rect x="6" y="0" width="1" height="1"/><rect x="5" y="1" width="2" height="1"/><rect x="0" y="2" width="1" height="1"/><rect x="4" y="2" width="3" height="1"/><rect x="0" y="3" width="2" height="1"/><rect x="3" y="3" width="3" height="1"/><rect x="0" y="4" width="5" height="1"/><rect x="1" y="5" width="3" height="1"/><rect x="2" y="6" width="1" height="1"/></g></svg>
<div class="a t" style="left:269px;top:367px;color:transparent">个人所得税</div>
<svg class="a" style="left:269px;top:367px;overflow:visible" width="60" height="12" fill="#000" shape-rendering="crispEdges"><use href="#g154" x="1" y="0"/><use href="#g155" x="12" y="0"/><use href="#g156" x="24" y="0"/><use href="#g157" x="36" y="0"/><use href="#g158" x="48" y="0"/></svg>
<div class="a t" style="left:410px;top:367px;color:transparent">输入项</div>
<svg class="a" style="left:410px;top:367px;overflow:visible" width="36" height="12" fill="#000" shape-rendering="crispEdges"><use href="#g122" x="0" y="0"/><use href="#g123" x="12" y="0"/><use href="#g84" x="24" y="0"/></svg>
<div class="a t" style="left:490px;top:367px;color:transparent">2</div>
<svg class="a" style="left:490px;top:367px;overflow:visible" width="6" height="12" fill="#000" shape-rendering="crispEdges"><use href="#g124" x="0" y="3"/></svg>
<div class="a t" style="left:568px;top:367px;color:transparent">四舍五入</div>
<svg class="a" style="left:568px;top:367px;overflow:visible" width="48" height="12" fill="#000" shape-rendering="crispEdges"><use href="#g125" x="1" y="1"/><use href="#g126" x="12" y="0"/><use href="#g127" x="24" y="1"/><use href="#g123" x="36" y="0"/></svg>
<div class="a t" style="left:815px;top:367px;color:transparent">9</div>
<svg class="a" style="left:815px;top:367px;overflow:visible" width="6" height="12" fill="#000" shape-rendering="crispEdges"><use href="#g159" x="0" y="3"/></svg>
<div class="a" style="left:210px;top:385px;width:11px;height:21px;background:#ece9d8;border-left:1px solid #fff;border-top:1px solid #fff"></div>
<div class="a" style="left:210px;top:406px;width:11px;height:1px;background:#808080"></div>
<div class="a" style="left:222px;top:406px;width:907px;height:1px;background:#c0c0c0"></div>
<div class="a" style="left:238px;top:390px;width:11px;height:11px;border:1px solid #aca899;background:#fff"></div>
<div class="a t" style="left:269px;top:389px;color:transparent">自定义项目1</div>
<svg class="a" style="left:269px;top:389px;overflow:visible" width="66" height="12" fill="#000" shape-rendering="crispEdges"><use href="#g160" x="2" y="0"/><use href="#g161" x="12" y="0"/><use href="#g162" x="24" y="0"/><use href="#g84" x="36" y="0"/><use href="#g85" x="50" y="0"/><use href="#g128" x="60" y="3"/></svg>
<div class="a t" style="left:410px;top:389px;color:transparent">输入项</div>
<svg class="a" style="left:410px;top:389px;overflow:visible" width="36" height="12" fill="#000" shape-rendering="crispEdges"><use href="#g122" x="0" y="0"/><use href="#g123" x="12" y="0"/><use href="#g84" x="24" y="0"/></svg>
<div class="a t" style="left:490px;top:389px;color:transparent">2</div>
<svg class="a" style="left:490px;top:389px;overflow:visible" width="6" height="12" fill="#000" shape-rendering="crispEdges"><use href="#g124" x="0" y="3"/></svg>
<div class="a t" style="left:568px;top:389px;color:transparent">四舍五入</div>
<svg class="a" style="left:568px;top:389px;overflow:visible" width="48" height="12" fill="#000" shape-rendering="crispEdges"><use href="#g125" x="1" y="1"/><use href="#g126" x="12" y="0"/><use href="#g127" x="24" y="1"/><use href="#g123" x="36" y="0"/></svg>
<div class="a t" style="left:812px;top:389px;color:transparent">10</div>
<svg class="a" style="left:812px;top:389px;overflow:visible" width="12" height="12" fill="#000" shape-rendering="crispEdges"><use href="#g128" x="0" y="3"/><use href="#g163" x="6" y="3"/></svg>
<div class="a" style="left:210px;top:407px;width:11px;height:21px;background:#ece9d8;border-left:1px solid #fff;border-top:1px solid #fff"></div>
<div class="a" style="left:210px;top:428px;width:11px;height:1px;background:#808080"></div>
<div class="a" style="left:222px;top:428px;width:907px;height:1px;background:#c0c0c0"></div>
<div class="a" style="left:238px;top:412px;width:11px;height:11px;border:1px solid #aca899;background:#fff"></div>
<div class="a t" style="left:269px;top:411px;color:transparent">自定义项目2</div>
<svg class="a" style="left:269px;top:411px;overflow:visible" width="66" height="12" fill="#000" shape-rendering="crispEdges"><use href="#g160" x="2" y="0"/><use href="#g161" x="12" y="0"/><use href="#g162" x="24" y="0"/><use href="#g84" x="36" y="0"/><use href="#g85" x="50" y="0"/><use href="#g124" x="60" y="3"/></svg>
<div class="a t" style="left:410px;top:411px;color:transparent">输入项</div>
<svg class="a" style="left:410px;top:411px;overflow:visible" width="36" height="12" fill="#000" shape-rendering="crispEdges"><use href="#g122" x="0" y="0"/><use href="#g123" x="12" y="0"/><use href="#g84" x="24" y="0"/></svg>
<div class="a t" style="left:490px;top:411px;color:transparent">2</div>
<svg class="a" style="left:490px;top:411px;overflow:visible" width="6" height="12" fill="#000" shape-rendering="crispEdges"><use href="#g124" x="0" y="3"/></svg>
<div class="a t" style="left:568px;top:411px;color:transparent">四舍五入</div>
<svg class="a" style="left:568px;top:411px;overflow:visible" width="48" height="12" fill="#000" shape-rendering="crispEdges"><use href="#g125" x="1" y="1"/><use href="#g126" x="12" y="0"/><use href="#g127" x="24" y="1"/><use href="#g123" x="36" y="0"/></svg>
<div class="a t" style="left:812px;top:411px;color:transparent">11</div>
<svg class="a" style="left:812px;top:411px;overflow:visible" width="12" height="12" fill="#000" shape-rendering="crispEdges"><use href="#g128" x="0" y="3"/><use href="#g128" x="6" y="3"/></svg>
<div class="a" style="left:210px;top:429px;width:11px;height:21px;background:#ece9d8;border-left:1px solid #fff;border-top:1px solid #fff"></div>
<div class="a" style="left:210px;top:450px;width:11px;height:1px;background:#808080"></div>
<div class="a" style="left:222px;top:450px;width:907px;height:1px;background:#c0c0c0"></div>
<div class="a" style="left:238px;top:434px;width:11px;height:11px;border:1px solid #aca899;background:#fff"></div>
<div class="a t" style="left:269px;top:433px;color:transparent">自定义项目3</div>
<svg class="a" style="left:269px;top:433px;overflow:visible" width="66" height="12" fill="#000" shape-rendering="crispEdges"><use href="#g160" x="2" y="0"/><use href="#g161" x="12" y="0"/><use href="#g162" x="24" y="0"/><use href="#g84" x="36" y="0"/><use href="#g85" x="50" y="0"/><use href="#g134" x="60" y="3"/></svg>
<div class="a t" style="left:410px;top:433px;color:transparent">输入项</div>
<svg class="a" style="left:410px;top:433px;overflow:visible" width="36" height="12" fill="#000" shape-rendering="crispEdges"><use href="#g122" x="0" y="0"/><use href="#g123" x="12" y="0"/><use href="#g84" x="24" y="0"/></svg>
<div class="a t" style="left:490px;top:433px;color:transparent">2</div>
<svg class="a" style="left:490px;top:433px;overflow:visible" width="6" height="12" fill="#000" shape-rendering="crispEdges"><use href="#g124" x="0" y="3"/></svg>
<div class="a t" style="left:568px;top:433px;color:transparent">四舍五入</div>
<svg class="a" style="left:568px;top:433px;overflow:visible" width="48" height="12" fill="#000" shape-rendering="crispEdges"><use href="#g125" x="1" y="1"/><use href="#g126" x="12" y="0"/><use href="#g127" x="24" y="1"/><use href="#g123" x="36" y="0"/></svg>
<div class="a t" style="left:812px;top:433px;color:transparent">12</div>
<svg class="a" style="left:812px;top:433px;overflow:visible" width="12" height="12" fill="#000" shape-rendering="crispEdges"><use href="#g128" x="0" y="3"/><use href="#g124" x="6" y="3"/></svg>
<div class="a" style="left:210px;top:451px;width:11px;height:21px;background:#ece9d8;border-left:1px solid #fff;border-top:1px solid #fff"></div>
<div class="a" style="left:210px;top:472px;width:11px;height:1px;background:#808080"></div>
<div class="a" style="left:222px;top:472px;width:907px;height:1px;background:#c0c0c0"></div>
<div class="a" style="left:238px;top:456px;width:11px;height:11px;border:1px solid #aca899;background:#fff"></div>
<div class="a t" style="left:269px;top:455px;color:transparent">自定义项目4</div>
<svg class="a" style="left:269px;top:455px;overflow:visible" width="66" height="12" fill="#000" shape-rendering="crispEdges"><use href="#g160" x="2" y="0"/><use href="#g161" x="12" y="0"/><use href="#g162" x="24" y="0"/><use href="#g84" x="36" y="0"/><use href="#g85" x="50" y="0"/><use href="#g137" x="60" y="3"/></svg>
<div class="a t" style="left:410px;top:455px;color:transparent">输入项</div>
<svg class="a" style="left:410px;top:455px;overflow:visible" width="36" height="12" fill="#000" shape-rendering="crispEdges"><use href="#g122" x="0" y="0"/><use href="#g123" x="12" y="0"/><use href="#g84" x="24" y="0"/></svg>
<div class="a t" style="left:490px;top:455px;color:transparent">2</div>
<svg class="a" style="left:490px;top:455px;overflow:visible" width="6" height="12" fill="#000" shape-rendering="crispEdges"><use href="#g124" x="0" y="3"/></svg>
<div class="a t" style="left:568px;top:455px;color:transparent">四舍五入</div>
<svg class="a" style="left:568px;top:455px;overflow:visible" width="48" height="12" fill="#000" shape-rendering="crispEdges"><use href="#g125" x="1" y="1"/><use href="#g126" x="12" y="0"/><use href="#g127" x="24" y="1"/><use href="#g123" x="36" y="0"/></svg>
<div class="a t" style="left:812px;top:455px;color:transparent">13</div>
<svg class="a" style="left:812px;top:455px;overflow:visible" width="12" height="12" fill="#000" shape-rendering="crispEdges"><use href="#g128" x="0" y="3"/><use href="#g134" x="6" y="3"/></svg>
<div class="a" style="left:210px;top:473px;width:11px;height:21px;background:#ece9d8;border-left:1px solid #fff;border-top:1px solid #fff"></div>
<div class="a" style="left:210px;top:494px;width:11px;height:1px;background:#808080"></div>
<div class="a" style="left:222px;top:494px;width:907px;height:1px;background:#c0c0c0"></div>
<div class="a" style="left:238px;top:478px;width:11px;height:11px;border:1px solid #aca899;background:#fff"></div>
<div class="a t" style="left:269px;top:477px;color:transparent">自定义项目5</div>
<svg class="a" style="left:269px;top:477px;overflow:visible" width="66" height="12" fill="#000" shape-rendering="crispEdges"><use href="#g160" x="2" y="0"/><use href="#g161" x="12" y="0"/><use href="#g162" x="24" y="0"/><use href="#g84" x="36" y="0"/><use href="#g85" x="50" y="0"/><use href="#g139" x="60" y="3"/></svg>
<div class="a t" style="left:410px;top:477px;color:transparent">输入项</div>
<svg class="a" style="left:410px;top:477px;overflow:visible" width="36" height="12" fill="#000" shape-rendering="crispEdges"><use href="#g122" x="0" y="0"/><use href="#g123" x="12" y="0"/><use href="#g84" x="24" y="0"/></svg>
<div class="a t" style="left:490px;top:477px;color:transparent">2</div>
<svg class="a" style="left:490px;top:477px;overflow:visible" width="6" height="12" fill="#000" shape-rendering="crispEdges"><use href="#g124" x="0" y="3"/></svg>
<div class="a t" style="left:568px;top:477px;color:transparent">四舍五入</div>
<svg class="a" style="left:568px;top:477px;overflow:visible" width="48" height="12" fill="#000" shape-rendering="crispEdges"><use href="#g125" x="1" y="1"/><use href="#g126" x="12" y="0"/><use href="#g127" x="24" y="1"/><use href="#g123" x="36" y="0"/></svg>
<div class="a t" style="left:812px;top:477px;color:transparent">14</div>
<svg class="a" style="left:812px;top:477px;overflow:visible" width="12" height="12" fill="#000" shape-rendering="crispEdges"><use href="#g128" x="0" y="3"/><use href="#g137" x="6" y="3"/></svg>
<div class="a" style="left:210px;top:495px;width:11px;height:21px;background:#ece9d8;border-left:1px solid #fff;border-top:1px solid #fff"></div>
<div class="a" style="left:210px;top:516px;width:11px;height:1px;background:#808080"></div>
<div class="a" style="left:222px;top:516px;width:907px;height:1px;background:#c0c0c0"></div>
<div class="a" style="left:238px;top:500px;width:11px;height:11px;border:1px solid #aca899;background:#fff"></div>
<svg class="a" style="left:240px;top:502px" width="7" height="7" viewBox="0 0 7 7"><g shape-rendering="crispEdges"><rect x="6" y="0" width="1" height="1"/><rect x="5" y="1" width="2" height="1"/><rect x="0" y="2" width="1" height="1"/><rect x="4" y="2" width="3" height="1"/><rect x="0" y="3" width="2" height="1"/><rect x="3" y="3" width="3" height="1"/><rect x="0" y="4" width="5" height="1"/><rect x="1" y="5" width="3" height="1"/><rect x="2" y="6" width="1" height="1"/></g></svg>
<div class="a t" style="left:269px;top:499px;color:transparent">实发工资</div>
<svg class="a" style="left:269px;top:499px;overflow:visible" width="48" height="12" fill="#000" shape-rendering="crispEdges"><use href="#g164" x="0" y="0"/><use href="#g71" x="12" y="0"/><use href="#g42" x="24" y="1"/><use href="#g38" x="36" y="0"/></svg>
<div class="a t" style="left:410px;top:499px;color:transparent">计算项</div>
<svg class="a" style="left:410px;top:499px;overflow:visible" width="36" height="12" fill="#000" shape-rendering="crispEdges"><use href="#g118" x="0" y="0"/><use href="#g119" x="12" y="0"/><use href="#g84" x="24" y="0"/></svg>
<div class="a t" style="left:490px;top:499px;color:transparent">2</div>
<svg class="a" style="left:490px;top:499px;overflow:visible" width="6" height="12" fill="#000" shape-rendering="crispEdges"><use href="#g124" x="0" y="3"/></svg>
<div class="a t" style="left:568px;top:499px;color:transparent">四舍五入</div>
<svg class="a" style="left:568px;top:499px;overflow:visible" width="48" height="12" fill="#000" shape-rendering="crispEdges"><use href="#g125" x="1" y="1"/><use href="#g126" x="12" y="0"/><use href="#g127" x="24" y="1"/><use href="#g123" x="36" y="0"/></svg>
<div class="a t" style="left:812px;top:499px;color:transparent">15</div>
<svg class="a" style="left:812px;top:499px;overflow:visible" width="12" height="12" fill="#000" shape-rendering="crispEdges"><use href="#g128" x="0" y="3"/><use href="#g139" x="6" y="3"/></svg>
<div class="a" style="left:844px;top:495px;width:284px;height:21px;overflow:hidden">
<div class="a t" style="left:5px;top:4px;color:transparent">{应发工资} - {养老金} - {公积金} - {病假扣款} - {个人所得税}</div>
<svg class="a" style="left:5px;top:4px;overflow:visible" width="360" height="12" fill="#000" shape-rendering="crispEdges"><use href="#g140" x="0" y="2"/><use href="#g138" x="6" y="0"/><use href="#g71" x="18" y="0"/><use href="#g42" x="30" y="1"/><use href="#g38" x="42" y="0"/><use href="#g141" x="54" y="2"/><use href="#g165" x="67" y="6"/><use href="#g140" x="78" y="2"/><use href="#g143" x="84" y="0"/><use href="#g144" x="96" y="0"/><use href="#g145" x="108" y="0"/><use href="#g141" x="120" y="2"/><use href="#g165" x="133" y="6"/><use href="#g140" x="144" y="2"/><use href="#g120" x="150" y="0"/><use href="#g147" x="162" y="0"/><use href="#g145" x="174" y="0"/><use href="#g141" x="186" y="2"/><use href="#g165" x="199" y="6"/><use href="#g140" x="210" y="2"/><use href="#g149" x="216" y="0"/><use href="#g150" x="228" y="0"/><use href="#g151" x="240" y="0"/><use href="#g152" x="252" y="0"/><use href="#g141" x="264" y="2"/><use href="#g165" x="277" y="6"/><use href="#g140" x="288" y="2"/><use href="#g154" x="295" y="0"/><use href="#g155" x="306" y="0"/><use href="#g156" x="318" y="0"/><use href="#g157" x="330" y="0"/><use href="#g158" x="342" y="0"/><use href="#g141" x="354" y="2"/></svg>
</div>
<div class="a" style="left:221px;top:163px;width:1px;height:354px;background:#808080"></div>
<div class="a" style="left:264px;top:187px;width:1px;height:330px;background:#c0c0c0"></div>
<div class="a" style="left:404px;top:187px;width:1px;height:330px;background:#c0c0c0"></div>
<div class="a" style="left:485px;top:187px;width:1px;height:330px;background:#c0c0c0"></div>
<div class="a" style="left:562px;top:187px;width:1px;height:330px;background:#c0c0c0"></div>
<div class="a" style="left:640px;top:187px;width:1px;height:330px;background:#c0c0c0"></div>
<div class="a" style="left:717px;top:187px;width:1px;height:330px;background:#c0c0c0"></div>
<div class="a" style="left:792px;top:187px;width:1px;height:330px;background:#c0c0c0"></div>
<div class="a" style="left:843px;top:187px;width:1px;height:330px;background:#c0c0c0"></div>
<div class="a" style="left:1128px;top:187px;width:1px;height:330px;background:#c0c0c0"></div>
<svg class="a" style="left:213px;top:280px" width="6" height="11" viewBox="0 0 6 11"><g shape-rendering="crispEdges"><rect x="0" y="0" width="1" height="11"/><rect x="1" y="1" width="1" height="9"/><rect x="2" y="2" width="1" height="7"/><rect x="3" y="3" width="1" height="5"/><rect x="4" y="4" width="1" height="3"/><rect x="5" y="5" width="1" height="1"/></g></svg>
<div class="a" style="left:218px;top:570px;width:1218px;height:1px;background:#aca899"></div>
<div class="a" style="left:218px;top:571px;width:1218px;height:1px;background:#fff"></div>
<div class="a" style="left:211px;top:572px;width:1px;height:24px;background:#fff"></div>
<div class="a" style="left:213px;top:572px;width:1px;height:24px;background:#aca899"></div>
<svg class="a" style="left:225px;top:578px" width="15" height="15" viewBox="0 0 15 15"><defs><linearGradient id="gp16" x1="0" y1="0" x2="0" y2="1"><stop offset="0" stop-color="#90ee80"/><stop offset="1" stop-color="#30b030"/></linearGradient></defs><path d="M5.5 0.5 h4 v5 h5 v4 h-5 v5 h-4 v-5 h-5 v-4 h5z" fill="url(#gp16)" stroke="#1a8a1a" stroke-width="1"/></svg>
<svg class="a" style="left:305px;top:577px" width="15" height="15" viewBox="0 0 15 15"><path d="M2 2 L13 13 M13 2 L2 13" stroke="#f04020" stroke-width="3.4" stroke-linecap="round"/></svg>
<svg class="a" style="left:392px;top:578px" width="13" height="15" viewBox="0 0 13 15"><path d="M6.5 0.5 L12.5 7 L9 7 L9 14 L4 14 L4 7 L0.5 7Z" fill="#7cc4f8" stroke="#2a78c8" stroke-width="0.9"/></svg>
<div class="a t" style="left:244px;top:579px;color:transparent">添加人员</div>
<svg class="a" style="left:244px;top:579px;overflow:visible" width="48" height="12" fill="#000" shape-rendering="crispEdges"><use href="#g77" x="0" y="0"/><use href="#g78" x="12" y="0"/><use href="#g155" x="24" y="0"/><use href="#g63" x="36" y="0"/></svg>
<div class="a t" style="left:324px;top:579px;color:transparent">删除人员</div>
<svg class="a" style="left:324px;top:579px;overflow:visible" width="48" height="12" fill="#000" shape-rendering="crispEdges"><use href="#g80" x="0" y="0"/><use href="#g81" x="12" y="0"/><use href="#g155" x="24" y="0"/><use href="#g63" x="36" y="0"/></svg>
<div class="a t" style="left:412px;top:579px;color:transparent">向上移动</div>
<svg class="a" style="left:412px;top:579px;overflow:visible" width="48" height="12" fill="#000" shape-rendering="crispEdges"><use href="#g166" x="0" y="0"/><use href="#g114" x="12" y="0"/><use href="#g167" x="24" y="0"/><use href="#g168" x="36" y="0"/></svg>
<div class="a" style="left:379px;top:574px;width:1px;height:20px;background:#aca899"></div>
<div class="a" style="left:380px;top:574px;width:1px;height:20px;background:#fff"></div>
<svg class="a" style="left:470px;top:577px" width="8" height="15" viewBox="0 0 8 15"><path d="M4 1 L7 6 L5 6 L5 14 L3 14 L3 6 L1 6Z" fill="#7cc4f8" stroke="#2a78c8" stroke-width="0.8"/></svg>
<div class="a" style="left:209px;top:598px;width:1230px;height:248px;background:#fff;border-top:1px solid #aca899;border-left:1px solid #aca899"></div>
<div class="a" style="left:210px;top:599px;width:842px;height:23px;background:#ece9d8"></div>
<div class="a" style="left:210px;top:622px;width:842px;height:1px;background:#808080"></div>
<div class="a" style="left:210px;top:599px;width:10px;height:1px;background:#fff"></div>
<div class="a" style="left:210px;top:599px;width:1px;height:23px;background:#fff"></div>
<div class="a" style="left:221px;top:599px;width:1px;height:23px;background:#808080"></div>
<div class="a" style="left:222px;top:599px;width:110px;height:1px;background:#fff"></div>
<div class="a" style="left:222px;top:599px;width:1px;height:23px;background:#fff"></div>
<div class="a" style="left:332px;top:599px;width:1px;height:23px;background:#808080"></div>
<div class="a" style="left:333px;top:599px;width:127px;height:1px;background:#fff"></div>
<div class="a" style="left:333px;top:599px;width:1px;height:23px;background:#fff"></div>
<div class="a" style="left:460px;top:599px;width:1px;height:23px;background:#808080"></div>
<div class="a" style="left:461px;top:599px;width:154px;height:1px;background:#fff"></div>
<div class="a" style="left:461px;top:599px;width:1px;height:23px;background:#fff"></div>
<div class="a" style="left:615px;top:599px;width:1px;height:23px;background:#808080"></div>
<div class="a" style="left:616px;top:599px;width:142px;height:1px;background:#fff"></div>
<div class="a" style="left:616px;top:599px;width:1px;height:23px;background:#fff"></div>
<div class="a" style="left:758px;top:599px;width:1px;height:23px;background:#808080"></div>
<div class="a" style="left:759px;top:599px;width:242px;height:1px;background:#fff"></div>
<div class="a" style="left:759px;top:599px;width:1px;height:23px;background:#fff"></div>
<div class="a" style="left:1001px;top:599px;width:1px;height:23px;background:#808080"></div>
<div class="a" style="left:1002px;top:599px;width:49px;height:1px;background:#fff"></div>
<div class="a" style="left:1002px;top:599px;width:1px;height:23px;background:#fff"></div>
<div class="a" style="left:1051px;top:599px;width:1px;height:23px;background:#808080"></div>
<div class="a t" style="left:253px;top:604px;color:transparent">人员编号</div>
<svg class="a" style="left:253px;top:604px;overflow:visible" width="48" height="12" fill="#000" shape-rendering="crispEdges"><use href="#g155" x="0" y="0"/><use href="#g63" x="12" y="0"/><use href="#g169" x="24" y="0"/><use href="#g170" x="36" y="0"/></svg>
<div class="a t" style="left:385px;top:604px;color:transparent">姓名</div>
<svg class="a" style="left:385px;top:604px;overflow:visible" width="24" height="12" fill="#000" shape-rendering="crispEdges"><use href="#g171" x="0" y="0"/><use href="#g79" x="12" y="0"/></svg>
<div class="a t" style="left:526px;top:604px;color:transparent">部门</div>
<svg class="a" style="left:526px;top:604px;overflow:visible" width="24" height="12" fill="#000" shape-rendering="crispEdges"><use href="#g172" x="0" y="0"/><use href="#g173" x="13" y="0"/></svg>
<div class="a t" style="left:675px;top:604px;color:transparent">职务</div>
<svg class="a" style="left:675px;top:604px;overflow:visible" width="24" height="12" fill="#000" shape-rendering="crispEdges"><use href="#g174" x="0" y="0"/><use href="#g30" x="12" y="0"/></svg>
<div class="a t" style="left:868px;top:604px;color:transparent">备注</div>
<svg class="a" style="left:868px;top:604px;overflow:visible" width="24" height="12" fill="#000" shape-rendering="crispEdges"><use href="#g175" x="0" y="0"/><use href="#g176" x="12" y="0"/></svg>
<div class="a t" style="left:1015px;top:604px;color:transparent">排序</div>
<svg class="a" style="left:1015px;top:604px;overflow:visible" width="24" height="12" fill="#000" shape-rendering="crispEdges"><use href="#g116" x="0" y="0"/><use href="#g117" x="12" y="0"/></svg>
<div class="a" style="left:210px;top:623px;width:11px;height:21px;background:#ece9d8;border-left:1px solid #fff;border-top:1px solid #fff"></div>
<div class="a" style="left:210px;top:644px;width:11px;height:1px;background:#808080"></div>
<div class="a" style="left:222px;top:644px;width:830px;height:1px;background:#c0c0c0"></div>
<div class="a t" style="left:268px;top:627px;color:transparent">zjf</div>
<svg class="a" style="left:268px;top:627px;overflow:visible" width="18" height="12" fill="#000" shape-rendering="crispEdges"><use href="#g177" x="0" y="4"/><use href="#g178" x="6" y="2"/><use href="#g179" x="12" y="2"/></svg>
<div class="a t" style="left:379px;top:627px;color:transparent">章巨峰</div>
<svg class="a" style="left:379px;top:627px;overflow:visible" width="36" height="12" fill="#000" shape-rendering="crispEdges"><use href="#g180" x="0" y="0"/><use href="#g181" x="13" y="0"/><use href="#g182" x="24" y="0"/></svg>
<div class="a t" style="left:538px;top:627px;color:transparent"></div>
<svg class="a" style="left:538px;top:627px;overflow:visible" width="1" height="12" fill="#000" shape-rendering="crispEdges"></svg>
<div class="a t" style="left:687px;top:627px;color:transparent"></div>
<svg class="a" style="left:687px;top:627px;overflow:visible" width="1" height="12" fill="#000" shape-rendering="crispEdges"></svg>
<div class="a t" style="left:1024px;top:627px;color:transparent">1</div>
<svg class="a" style="left:1024px;top:627px;overflow:visible" width="6" height="12" fill="#000" shape-rendering="crispEdges"><use href="#g128" x="0" y="3"/></svg>
<div class="a" style="left:210px;top:645px;width:11px;height:21px;background:#ece9d8;border-left:1px solid #fff;border-top:1px solid #fff"></div>
<div class="a" style="left:210px;top:666px;width:11px;height:1px;background:#808080"></div>
<div class="a" style="left:222px;top:666px;width:830px;height:1px;background:#c0c0c0"></div>
<div class="a t" style="left:268px;top:649px;color:transparent">mhw</div>
<svg class="a" style="left:268px;top:649px;overflow:visible" width="18" height="12" fill="#000" shape-rendering="crispEdges"><use href="#g183" x="0" y="4"/><use href="#g184" x="6" y="2"/><use href="#g185" x="11" y="4"/></svg>
<div class="a t" style="left:379px;top:649px;color:transparent">马红薇</div>
<svg class="a" style="left:379px;top:649px;overflow:visible" width="36" height="12" fill="#000" shape-rendering="crispEdges"><use href="#g186" x="0" y="0"/><use href="#g187" x="12" y="0"/><use href="#g188" x="24" y="0"/></svg>
<div class="a t" style="left:520px;top:649px;color:transparent">办公室</div>
<svg class="a" style="left:520px;top:649px;overflow:visible" width="36" height="12" fill="#000" shape-rendering="crispEdges"><use href="#g189" x="1" y="0"/><use href="#g120" x="12" y="0"/><use href="#g190" x="24" y="0"/></svg>
<div class="a t" style="left:675px;top:649px;color:transparent">财务</div>
<svg class="a" style="left:675px;top:649px;overflow:visible" width="24" height="12" fill="#000" shape-rendering="crispEdges"><use href="#g191" x="0" y="0"/><use href="#g30" x="12" y="0"/></svg>
<div class="a t" style="left:1024px;top:649px;color:transparent">2</div>
<svg class="a" style="left:1024px;top:649px;overflow:visible" width="6" height="12" fill="#000" shape-rendering="crispEdges"><use href="#g124" x="0" y="3"/></svg>
<div class="a" style="left:210px;top:667px;width:11px;height:21px;background:#ece9d8;border-left:1px solid #fff;border-top:1px solid #fff"></div>
<div class="a" style="left:210px;top:688px;width:11px;height:1px;background:#808080"></div>
<div class="a" style="left:222px;top:688px;width:830px;height:1px;background:#c0c0c0"></div>
<div class="a t" style="left:268px;top:671px;color:transparent">mht</div>
<svg class="a" style="left:268px;top:671px;overflow:visible" width="18" height="12" fill="#000" shape-rendering="crispEdges"><use href="#g183" x="0" y="4"/><use href="#g184" x="6" y="2"/><use href="#g192" x="12" y="2"/></svg>
<div class="a t" style="left:379px;top:671px;color:transparent">马胡腾</div>
<svg class="a" style="left:379px;top:671px;overflow:visible" width="36" height="12" fill="#000" shape-rendering="crispEdges"><use href="#g186" x="0" y="0"/><use href="#g193" x="12" y="0"/><use href="#g194" x="24" y="0"/></svg>
<div class="a t" style="left:520px;top:671px;color:transparent">销售部</div>
<svg class="a" style="left:520px;top:671px;overflow:visible" width="36" height="12" fill="#000" shape-rendering="crispEdges"><use href="#g195" x="0" y="0"/><use href="#g196" x="12" y="0"/><use href="#g172" x="24" y="0"/></svg>
<div class="a t" style="left:687px;top:671px;color:transparent"></div>
<svg class="a" style="left:687px;top:671px;overflow:visible" width="1" height="12" fill="#000" shape-rendering="crispEdges"></svg>
<div class="a t" style="left:1024px;top:671px;color:transparent">3</div>
<svg class="a" style="left:1024px;top:671px;overflow:visible" width="6" height="12" fill="#000" shape-rendering="crispEdges"><use href="#g134" x="0" y="3"/></svg>
<div class="a" style="left:210px;top:689px;width:11px;height:21px;background:#ece9d8;border-left:1px solid #fff;border-top:1px solid #fff"></div>
<div class="a" style="left:210px;top:710px;width:11px;height:1px;background:#808080"></div>
<div class="a" style="left:222px;top:710px;width:830px;height:1px;background:#c0c0c0"></div>
<div class="a t" style="left:268px;top:693px;color:transparent">ljf</div>
<svg class="a" style="left:268px;top:693px;overflow:visible" width="18" height="12" fill="#000" shape-rendering="crispEdges"><use href="#g197" x="0" y="2"/><use href="#g178" x="6" y="2"/><use href="#g179" x="12" y="2"/></svg>
<div class="a t" style="left:379px;top:693px;color:transparent">刘俊峰</div>
<svg class="a" style="left:379px;top:693px;overflow:visible" width="36" height="12" fill="#000" shape-rendering="crispEdges"><use href="#g198" x="0" y="0"/><use href="#g199" x="12" y="0"/><use href="#g182" x="24" y="0"/></svg>
<div class="a t" style="left:520px;top:693px;color:transparent">销售部</div>
<svg class="a" style="left:520px;top:693px;overflow:visible" width="36" height="12" fill="#000" shape-rendering="crispEdges"><use href="#g195" x="0" y="0"/><use href="#g196" x="12" y="0"/><use href="#g172" x="24" y="0"/></svg>
<div class="a t" style="left:687px;top:693px;color:transparent"></div>
<svg class="a" style="left:687px;top:693px;overflow:visible" width="1" height="12" fill="#000" shape-rendering="crispEdges"></svg>
<div class="a t" style="left:1024px;top:693px;color:transparent">4</div>
<svg class="a" style="left:1024px;top:693px;overflow:visible" width="6" height="12" fill="#000" shape-rendering="crispEdges"><use href="#g137" x="0" y="3"/></svg>
<div class="a" style="left:221px;top:599px;width:1px;height:112px;background:#808080"></div>
<div class="a" style="left:332px;top:623px;width:1px;height:88px;background:#c0c0c0"></div>
<div class="a" style="left:460px;top:623px;width:1px;height:88px;background:#c0c0c0"></div>
<div class="a" style="left:615px;top:623px;width:1px;height:88px;background:#c0c0c0"></div>
<div class="a" style="left:758px;top:623px;width:1px;height:88px;background:#c0c0c0"></div>
<div class="a" style="left:1001px;top:623px;width:1px;height:88px;background:#c0c0c0"></div>
<div class="a" style="left:1051px;top:623px;width:1px;height:88px;background:#c0c0c0"></div>
<svg class="a" style="left:213px;top:628px" width="6" height="11" viewBox="0 0 6 11"><g shape-rendering="crispEdges"><rect x="0" y="0" width="1" height="11"/><rect x="1" y="1" width="1" height="9"/><rect x="2" y="2" width="1" height="7"/><rect x="3" y="3" width="1" height="5"/><rect x="4" y="4" width="1" height="3"/><rect x="5" y="5" width="1" height="1"/></g></svg>
<div class="a" style="left:1422px;top:163px;width:17px;height:406px;background:linear-gradient(to right,#eeede5 0px,#f3f1ea 3px,#fcfcf9 12px,#fdfdfa 16px,#fff 17px)"></div>
<div class="a" style="left:1424px;top:164px;width:14px;height:15px;border-radius:2px;border:1px solid #fff;background:linear-gradient(135deg,#d6e2fd,#b5cbf8);box-shadow:0 1px 0 #8faee8"></div>
<svg class="a" style="left:1424px;top:164px" width="14" height="15" viewBox="0 0 14 15"><path d="M3.5 9 L7 5.5 L10.5 9" fill="none" stroke="#4d6185" stroke-width="2.2"/></svg>
<div class="a" style="left:1424px;top:552px;width:14px;height:15px;border-radius:2px;border:1px solid #fff;background:linear-gradient(135deg,#d6e2fd,#b5cbf8);box-shadow:0 1px 0 #8faee8"></div>
<svg class="a" style="left:1424px;top:552px" width="14" height="15" viewBox="0 0 14 15"><path d="M3.5 6 L7 9.5 L10.5 6" fill="none" stroke="#4d6185" stroke-width="2.2"/></svg>
<div class="a" style="left:1424px;top:231px;width:14px;height:191px;border-radius:2px;border:1px solid #fff;background:linear-gradient(to right,#b9cdf8,#c8d6fb 40%,#b3c8f8);box-shadow:1px 1px 0 #8faee8"></div>
<div class="a" style="left:1428px;top:323px;width:6px;height:1px;background:#8eaaf0"></div>
<div class="a" style="left:1428px;top:325px;width:6px;height:1px;background:#8eaaf0"></div>
<div class="a" style="left:1428px;top:327px;width:6px;height:1px;background:#8eaaf0"></div>
<div class="a" style="left:1428px;top:329px;width:6px;height:1px;background:#8eaaf0"></div>
<div class="a" style="left:1422px;top:599px;width:17px;height:247px;background:linear-gradient(to right,#eeede5 0px,#f3f1ea 3px,#fcfcf9 12px,#fdfdfa 16px,#fff 17px)"></div>
<div class="a" style="left:1424px;top:600px;width:14px;height:15px;border-radius:2px;border:1px solid #fff;background:linear-gradient(135deg,#d6e2fd,#b5cbf8);box-shadow:0 1px 0 #8faee8"></div>
<svg class="a" style="left:1424px;top:600px" width="14" height="15" viewBox="0 0 14 15"><path d="M3.5 9 L7 5.5 L10.5 9" fill="none" stroke="#4d6185" stroke-width="2.2"/></svg>
<div class="a" style="left:1424px;top:829px;width:14px;height:15px;border-radius:2px;border:1px solid #fff;background:linear-gradient(135deg,#d6e2fd,#b5cbf8);box-shadow:0 1px 0 #8faee8"></div>
<svg class="a" style="left:1424px;top:829px" width="14" height="15" viewBox="0 0 14 15"><path d="M3.5 6 L7 9.5 L10.5 6" fill="none" stroke="#4d6185" stroke-width="2.2"/></svg>
<div class="a" style="left:1424px;top:617px;width:14px;height:120px;border-radius:2px;border:1px solid #fff;background:linear-gradient(to right,#b9cdf8,#c8d6fb 40%,#b3c8f8);box-shadow:1px 1px 0 #8faee8"></div>
<div class="a" style="left:1428px;top:673px;width:6px;height:1px;background:#8eaaf0"></div>
<div class="a" style="left:1428px;top:675px;width:6px;height:1px;background:#8eaaf0"></div>
<div class="a" style="left:1428px;top:677px;width:6px;height:1px;background:#8eaaf0"></div>
<div class="a" style="left:1428px;top:679px;width:6px;height:1px;background:#8eaaf0"></div>
<div class="a" style="left:0px;top:847px;width:1440px;height:1px;background:#ece9d8"></div>
<div class="a" style="left:0px;top:849px;width:200px;height:21px;border-top:1px solid #aca899;border-left:1px solid #aca899;border-right:1px solid #fff"></div>
<div class="a" style="left:202px;top:849px;width:147px;height:21px;border-top:1px solid #aca899;border-left:1px solid #aca899;border-right:1px solid #fff"></div>
<div class="a" style="left:351px;top:849px;width:118px;height:21px;border-top:1px solid #aca899;border-left:1px solid #aca899;border-right:1px solid #fff"></div>
<div class="a" style="left:471px;top:849px;width:218px;height:21px;border-top:1px solid #aca899;border-left:1px solid #aca899;border-right:1px solid #fff"></div>
<div class="a" style="left:691px;top:849px;width:749px;height:21px;border-top:1px solid #aca899;border-left:1px solid #aca899;border-right:1px solid #fff"></div>
<div class="a t" style="left:14px;top:853px;color:transparent">欢迎使用红管家财务出纳记帐系统</div>
<svg class="a" style="left:14px;top:853px;overflow:visible" width="180" height="12" fill="#000" shape-rendering="crispEdges"><use href="#g200" x="0" y="0"/><use href="#g201" x="12" y="0"/><use href="#g202" x="24" y="0"/><use href="#g203" x="36" y="0"/><use href="#g187" x="48" y="0"/><use href="#g27" x="60" y="0"/><use href="#g204" x="72" y="0"/><use href="#g191" x="84" y="0"/><use href="#g30" x="96" y="0"/><use href="#g69" x="108" y="0"/><use href="#g205" x="120" y="0"/><use href="#g206" x="132" y="0"/><use href="#g207" x="144" y="0"/><use href="#g25" x="157" y="0"/><use href="#g26" x="168" y="0"/></svg>
<div class="a t" style="left:216px;top:853px;color:transparent">当前用户：系统管理员</div>
<svg class="a" style="left:216px;top:853px;overflow:visible" width="120" height="12" fill="#000" shape-rendering="crispEdges"><use href="#g208" x="1" y="0"/><use href="#g209" x="13" y="0"/><use href="#g203" x="24" y="0"/><use href="#g210" x="36" y="0"/><use href="#g211" x="52" y="2"/><use href="#g25" x="61" y="0"/><use href="#g26" x="72" y="0"/><use href="#g27" x="84" y="0"/><use href="#g28" x="96" y="0"/><use href="#g63" x="108" y="0"/></svg>
<div class="a t" style="left:368px;top:853px;color:transparent">2011年03月09日</div>
<svg class="a" style="left:368px;top:853px;overflow:visible" width="84" height="12" fill="#000" shape-rendering="crispEdges"><use href="#g124" x="0" y="3"/><use href="#g163" x="6" y="3"/><use href="#g128" x="12" y="3"/><use href="#g128" x="18" y="3"/><use href="#g212" x="24" y="0"/><use href="#g163" x="36" y="3"/><use href="#g134" x="42" y="3"/><use href="#g213" x="49" y="0"/><use href="#g163" x="60" y="3"/><use href="#g159" x="66" y="3"/><use href="#g214" x="74" y="1"/></svg>
<div class="a t" style="left:480px;top:853px;color:transparent">帐套名称：出纳记账帐套(FMSDB2010)</div>
<svg class="a" style="left:480px;top:853px;overflow:visible" width="198" height="12" fill="#000" shape-rendering="crispEdges"><use href="#g207" x="0" y="0"/><use href="#g215" x="12" y="0"/><use href="#g79" x="24" y="0"/><use href="#g100" x="36" y="0"/><use href="#g211" x="52" y="2"/><use href="#g69" x="60" y="0"/><use href="#g205" x="72" y="0"/><use href="#g206" x="84" y="0"/><use href="#g32" x="96" y="0"/><use href="#g207" x="108" y="0"/><use href="#g215" x="120" y="0"/><use href="#g46" x="133" y="2"/><use href="#g216" x="138" y="3"/><use href="#g217" x="144" y="3"/><use href="#g218" x="149" y="3"/><use href="#g219" x="156" y="3"/><use href="#g220" x="162" y="3"/><use href="#g124" x="168" y="3"/><use href="#g163" x="174" y="3"/><use href="#g128" x="180" y="3"/><use href="#g163" x="186" y="3"/><use href="#g48" x="193" y="2"/></svg>
<div class="a t" style="left:700px;top:853px;color:transparent">授权许可方式：注册码版 授权给：亚拓软件</div>
<svg class="a" style="left:700px;top:853px;overflow:visible" width="234" height="12" fill="#000" shape-rendering="crispEdges"><use href="#g221" x="0" y="0"/><use href="#g222" x="12" y="0"/><use href="#g223" x="24" y="0"/><use href="#g224" x="36" y="1"/><use href="#g65" x="48" y="0"/><use href="#g95" x="60" y="0"/><use href="#g211" x="76" y="2"/><use href="#g176" x="84" y="0"/><use href="#g225" x="96" y="0"/><use href="#g58" x="108" y="0"/><use href="#g74" x="120" y="0"/><use href="#g221" x="138" y="0"/><use href="#g222" x="150" y="0"/><use href="#g226" x="162" y="0"/><use href="#g211" x="178" y="2"/><use href="#g227" x="186" y="1"/><use href="#g228" x="198" y="0"/><use href="#g229" x="210" y="0"/><use href="#g230" x="222" y="0"/></svg>
<div class="a" style="left:474px;top:260px;width:492px;height:380px;border-radius:7px 7px 0 0;background:linear-gradient(to right,#001ca8 0px,#0832e8 1px,#0a3cf5 3px,#1a48f0 4px,#1a48f0 calc(100% - 4px),#0832e0 calc(100% - 3px),#0428c8 calc(100% - 1px),#00158a 100%)"></div>
<div class="a" style="left:474px;top:636px;width:492px;height:4px;background:linear-gradient(#0a3cf5 0px,#0832e8 2px,#00158a 4px)"></div>
<div class="a" style="left:474px;top:260px;width:492px;height:30px;border-radius:7px 7px 0 0;background:linear-gradient(#0a4ee0 0px,#3d95ff 1px,#2c80fb 3px,#0a5eeb 6px,#0054e3 12px,#0058e8 17px,#0064f8 21px,#0066fc 25px,#005cf0 27px,#0044d2 29px,#0040cc 30px)"></div>
<div class="a" style="left:474px;top:264px;width:4px;height:26px;background:linear-gradient(to right,rgba(0,20,140,0.55),rgba(0,20,140,0))"></div>
<div class="a" style="left:962px;top:264px;width:4px;height:26px;background:linear-gradient(to right,rgba(0,20,140,0),rgba(0,20,140,0.55))"></div>
<div class="a" style="left:478px;top:290px;width:484px;height:346px;background:#ece9d8;border-top:1px solid #f8f4e4;border-left:1px solid #fdf6df"></div>
<svg class="a" style="left:481px;top:268px" width="14" height="16" viewBox="0 0 14 16"><defs><linearGradient id="wsh" x1="0" y1="0" x2="0" y2="1"><stop offset="0" stop-color="#ff2020"/><stop offset="1" stop-color="#d00000"/></linearGradient></defs><path d="M1 12.5 L1 5 Q1 0 6 0 Q11 0 11 5 L11.2 12.5Z" fill="#a04818"/><ellipse cx="6.8" cy="6.6" rx="2.7" ry="3.3" fill="#fcc8a0"/><path d="M2.5 6.5 Q2.8 1 7.5 1.2 Q10.2 2 10.5 4.8 Q7.5 2.6 4.2 7.5Z" fill="#a04818"/><rect x="5.6" y="9" width="2.6" height="3" fill="#f0b088"/><path d="M0 14.8 Q0 12 3 11.5 L6.8 13.8 L10.6 11.5 Q13.6 12 13.6 14.8 Q6.8 16.8 0 14.8Z" fill="url(#wsh)"/><path d="M2.8 11.6 L6.8 14.6 L10.8 11.6 L9.2 10.7 L6.8 12.6 L4.4 10.7Z" fill="#fff"/></svg>
<div class="a t" style="left:500px;top:270px;color:transparent">工资项目属性设置</div>
<svg class="a" style="left:500px;top:270px;overflow:visible" width="111.4" height="13" fill="#fff" shape-rendering="crispEdges"><use href="#g17" x="1" y="2" fill="#0a2a90"/><use href="#g17" x="2" y="2" fill="#0a2a90"/><use href="#g17" x="0" y="1"/><use href="#g17" x="1" y="1"/><use href="#g18" x="14.8" y="1" fill="#0a2a90"/><use href="#g18" x="15.8" y="1" fill="#0a2a90"/><use href="#g18" x="13.8" y="0"/><use href="#g18" x="14.8" y="0"/><use href="#g231" x="28.6" y="1" fill="#0a2a90"/><use href="#g231" x="29.6" y="1" fill="#0a2a90"/><use href="#g231" x="27.6" y="0"/><use href="#g231" x="28.6" y="0"/><use href="#g232" x="44.400000000000006" y="1" fill="#0a2a90"/><use href="#g232" x="45.400000000000006" y="1" fill="#0a2a90"/><use href="#g232" x="43.400000000000006" y="0"/><use href="#g232" x="44.400000000000006" y="0"/><use href="#g233" x="56.2" y="1" fill="#0a2a90"/><use href="#g233" x="57.2" y="1" fill="#0a2a90"/><use href="#g233" x="55.2" y="0"/><use href="#g233" x="56.2" y="0"/><use href="#g234" x="70.0" y="1" fill="#0a2a90"/><use href="#g234" x="71.0" y="1" fill="#0a2a90"/><use href="#g234" x="69.0" y="0"/><use href="#g234" x="70.0" y="0"/><use href="#g22" x="83.8" y="1" fill="#0a2a90"/><use href="#g22" x="84.8" y="1" fill="#0a2a90"/><use href="#g22" x="82.8" y="0"/><use href="#g22" x="83.8" y="0"/><use href="#g23" x="97.6" y="1" fill="#0a2a90"/><use href="#g23" x="98.6" y="1" fill="#0a2a90"/><use href="#g23" x="96.6" y="0"/><use href="#g23" x="97.6" y="0"/></svg>
<div class="a" style="left:939px;top:266px;width:21px;height:21px;border:1px solid #fff;border-radius:3px;background:linear-gradient(135deg,#f09a80 0%,#e35f3c 45%,#d5441a 100%)"></div>
<svg class="a" style="left:939px;top:266px" width="21" height="21" viewBox="0 0 21 21"><path d="M6 6 L15 15 M15 6 L6 15" stroke="#fff" stroke-width="2"/></svg>
<div class="a" style="left:489px;top:305px;width:361px;height:313px;border:1px solid #aca899;border-radius:2px;box-shadow:1px 1px 0 #fff, inset 1px 1px 0 #fff"></div>
<div class="a" style="left:497px;top:299px;width:84px;height:14px;background:#ece9d8"></div>
<div class="a t" style="left:503px;top:300px;color:transparent">工资项目属性</div>
<svg class="a" style="left:503px;top:300px;overflow:visible" width="72" height="12" fill="#000" shape-rendering="crispEdges"><use href="#g42" x="0" y="1"/><use href="#g38" x="12" y="0"/><use href="#g84" x="24" y="0"/><use href="#g85" x="38" y="0"/><use href="#g235" x="48" y="0"/><use href="#g236" x="60" y="0"/></svg>
<div class="a t" style="left:529px;top:327px;color:transparent">是否显示：</div>
<svg class="a" style="left:529px;top:327px;overflow:visible" width="60" height="12" fill="#000" shape-rendering="crispEdges"><use href="#g237" x="0" y="0"/><use href="#g238" x="12" y="0"/><use href="#g98" x="24" y="0"/><use href="#g99" x="36" y="1"/><use href="#g211" x="52" y="2"/></svg>
<div class="a" style="left:589px;top:326px;width:13px;height:13px;background:#fff;border-top:1px solid #aca899;border-left:1px solid #aca899;border-bottom:1px solid #fff;border-right:1px solid #fff"></div>
<div class="a" style="left:590px;top:327px;width:11px;height:11px;border-top:1px solid #716f64;border-left:1px solid #716f64;border-bottom:1px solid #f1efe2;border-right:1px solid #f1efe2"></div>
<svg class="a" style="left:592px;top:329px" width="7" height="7" viewBox="0 0 7 7"><g shape-rendering="crispEdges"><rect x="6" y="0" width="1" height="1"/><rect x="5" y="1" width="2" height="1"/><rect x="0" y="2" width="1" height="1"/><rect x="4" y="2" width="3" height="1"/><rect x="0" y="3" width="2" height="1"/><rect x="3" y="3" width="3" height="1"/><rect x="0" y="4" width="5" height="1"/><rect x="1" y="5" width="3" height="1"/><rect x="2" y="6" width="1" height="1"/></g></svg>
<div class="a t" style="left:607px;top:327px;color:transparent">显示（打勾选择是否显示该工资项目）</div>
<svg class="a" style="left:607px;top:327px;overflow:visible" width="204" height="12" fill="#000" shape-rendering="crispEdges"><use href="#g98" x="0" y="0"/><use href="#g99" x="12" y="1"/><use href="#g239" x="31" y="-1"/><use href="#g240" x="36" y="0"/><use href="#g241" x="49" y="0"/><use href="#g242" x="60" y="0"/><use href="#g243" x="72" y="0"/><use href="#g237" x="84" y="0"/><use href="#g238" x="96" y="0"/><use href="#g98" x="108" y="0"/><use href="#g99" x="120" y="1"/><use href="#g244" x="132" y="0"/><use href="#g42" x="144" y="1"/><use href="#g38" x="156" y="0"/><use href="#g84" x="168" y="0"/><use href="#g85" x="182" y="0"/><use href="#g245" x="195" y="-1"/></svg>
<div class="a" style="left:606px;top:325px;width:206px;height:16px;border:1px dotted #000"></div>
<div class="a t" style="left:529px;top:359px;color:transparent">项目名称：</div>
<svg class="a" style="left:529px;top:359px;overflow:visible" width="60" height="12" fill="#000" shape-rendering="crispEdges"><use href="#g84" x="0" y="0"/><use href="#g85" x="14" y="0"/><use href="#g79" x="24" y="0"/><use href="#g100" x="36" y="0"/><use href="#g211" x="52" y="2"/></svg>
<div class="a" style="left:589px;top:355px;width:221px;height:20px;background:#fff;border-top:1px solid #aca899;border-left:1px solid #aca899;border-bottom:1px solid #fff;border-right:1px solid #fff"></div>
<div class="a" style="left:590px;top:356px;width:219px;height:18px;border-top:1px solid #716f64;border-left:1px solid #716f64;border-bottom:1px solid #f1efe2;border-right:1px solid #f1efe2"></div>
<div class="a t" style="left:592px;top:359px;color:transparent">应发工资</div>
<svg class="a" style="left:592px;top:359px;overflow:visible" width="48" height="12" fill="#000" shape-rendering="crispEdges"><use href="#g138" x="0" y="0"/><use href="#g71" x="12" y="0"/><use href="#g42" x="24" y="1"/><use href="#g38" x="36" y="0"/></svg>
<div class="a t" style="left:553px;top:395px;color:transparent">类型：</div>
<svg class="a" style="left:553px;top:395px;overflow:visible" width="36" height="12" fill="#000" shape-rendering="crispEdges"><use href="#g101" x="0" y="0"/><use href="#g102" x="12" y="0"/><use href="#g211" x="28" y="2"/></svg>
<div class="a" style="left:589px;top:391px;width:97px;height:20px;background:#fff;border-top:1px solid #aca899;border-left:1px solid #aca899;border-bottom:1px solid #fff;border-right:1px solid #fff"></div>
<div class="a" style="left:590px;top:392px;width:95px;height:18px;border-top:1px solid #716f64;border-left:1px solid #716f64;border-bottom:1px solid #f1efe2;border-right:1px solid #f1efe2"></div>
<div class="a" style="left:667px;top:393px;width:17px;height:16px;background:#ece9d8;border-top:1px solid #f1efe2;border-left:1px solid #f1efe2;border-bottom:1px solid #716f64;border-right:1px solid #716f64;box-shadow:inset -1px -1px 0 #aca899, inset 1px 1px 0 #fff"></div>
<svg class="a" style="left:672px;top:399px" width="7" height="4" viewBox="0 0 7 4"><g shape-rendering="crispEdges"><rect x="0" y="0" width="7" height="1"/><rect x="1" y="1" width="5" height="1"/><rect x="2" y="2" width="3" height="1"/><rect x="3" y="3" width="1" height="1"/></g></svg>
<div class="a t" style="left:592px;top:395px;color:transparent">计算项</div>
<svg class="a" style="left:592px;top:395px;overflow:visible" width="36" height="12" fill="#000" shape-rendering="crispEdges"><use href="#g118" x="0" y="0"/><use href="#g119" x="12" y="0"/><use href="#g84" x="24" y="0"/></svg>
<div class="a t" style="left:517px;top:431px;color:transparent">小数点位数：</div>
<svg class="a" style="left:517px;top:431px;overflow:visible" width="72" height="12" fill="#000" shape-rendering="crispEdges"><use href="#g103" x="0" y="0"/><use href="#g104" x="12" y="0"/><use href="#g105" x="24" y="0"/><use href="#g106" x="36" y="0"/><use href="#g104" x="48" y="0"/><use href="#g211" x="64" y="2"/></svg>
<div class="a" style="left:589px;top:428px;width:96px;height:20px;background:#fff;border-top:1px solid #aca899;border-left:1px solid #aca899;border-bottom:1px solid #fff;border-right:1px solid #fff"></div>
<div class="a" style="left:590px;top:429px;width:94px;height:18px;border-top:1px solid #716f64;border-left:1px solid #716f64;border-bottom:1px solid #f1efe2;border-right:1px solid #f1efe2"></div>
<div class="a" style="left:666px;top:430px;width:17px;height:16px;background:#ece9d8;border-top:1px solid #f1efe2;border-left:1px solid #f1efe2;border-bottom:1px solid #716f64;border-right:1px solid #716f64;box-shadow:inset -1px -1px 0 #aca899, inset 1px 1px 0 #fff"></div>
<svg class="a" style="left:671px;top:436px" width="7" height="4" viewBox="0 0 7 4"><g shape-rendering="crispEdges"><rect x="0" y="0" width="7" height="1"/><rect x="1" y="1" width="5" height="1"/><rect x="2" y="2" width="3" height="1"/><rect x="3" y="3" width="1" height="1"/></g></svg>
<div class="a t" style="left:592px;top:432px;color:transparent">2</div>
<svg class="a" style="left:592px;top:432px;overflow:visible" width="6" height="12" fill="#000" shape-rendering="crispEdges"><use href="#g124" x="0" y="3"/></svg>
<div class="a t" style="left:529px;top:470px;color:transparent">数据精度：</div>
<svg class="a" style="left:529px;top:470px;overflow:visible" width="60" height="12" fill="#000" shape-rendering="crispEdges"><use href="#g104" x="0" y="0"/><use href="#g107" x="12" y="0"/><use href="#g108" x="24" y="0"/><use href="#g109" x="36" y="0"/><use href="#g211" x="52" y="2"/></svg>
<div class="a" style="left:589px;top:466px;width:96px;height:20px;background:#fff;border-top:1px solid #aca899;border-left:1px solid #aca899;border-bottom:1px solid #fff;border-right:1px solid #fff"></div>
<div class="a" style="left:590px;top:467px;width:94px;height:18px;border-top:1px solid #716f64;border-left:1px solid #716f64;border-bottom:1px solid #f1efe2;border-right:1px solid #f1efe2"></div>
<div class="a" style="left:666px;top:468px;width:17px;height:16px;background:#ece9d8;border-top:1px solid #f1efe2;border-left:1px solid #f1efe2;border-bottom:1px solid #716f64;border-right:1px solid #716f64;box-shadow:inset -1px -1px 0 #aca899, inset 1px 1px 0 #fff"></div>
<svg class="a" style="left:671px;top:474px" width="7" height="4" viewBox="0 0 7 4"><g shape-rendering="crispEdges"><rect x="0" y="0" width="7" height="1"/><rect x="1" y="1" width="5" height="1"/><rect x="2" y="2" width="3" height="1"/><rect x="3" y="3" width="1" height="1"/></g></svg>
<div class="a t" style="left:592px;top:470px;color:transparent">四舍五入</div>
<svg class="a" style="left:592px;top:470px;overflow:visible" width="48" height="12" fill="#000" shape-rendering="crispEdges"><use href="#g125" x="1" y="1"/><use href="#g126" x="12" y="0"/><use href="#g127" x="24" y="1"/><use href="#g123" x="36" y="0"/></svg>
<div class="a t" style="left:541px;top:508px;color:transparent">默认值：</div>
<svg class="a" style="left:541px;top:508px;overflow:visible" width="48" height="12" fill="#000" shape-rendering="crispEdges"><use href="#g110" x="0" y="0"/><use href="#g111" x="12" y="0"/><use href="#g112" x="24" y="0"/><use href="#g211" x="40" y="2"/></svg>
<div class="a" style="left:589px;top:503px;width:97px;height:21px;background:#fff;border-top:1px solid #aca899;border-left:1px solid #aca899;border-bottom:1px solid #fff;border-right:1px solid #fff"></div>
<div class="a" style="left:590px;top:504px;width:95px;height:19px;border-top:1px solid #716f64;border-left:1px solid #716f64;border-bottom:1px solid #f1efe2;border-right:1px solid #f1efe2"></div>
<div class="a t" style="left:517px;top:542px;color:transparent">从上期复制：</div>
<svg class="a" style="left:517px;top:542px;overflow:visible" width="72" height="12" fill="#000" shape-rendering="crispEdges"><use href="#g113" x="0" y="0"/><use href="#g114" x="12" y="0"/><use href="#g115" x="24" y="0"/><use href="#g82" x="36" y="0"/><use href="#g83" x="48" y="0"/><use href="#g211" x="64" y="2"/></svg>
<div class="a" style="left:589px;top:541px;width:13px;height:13px;background:#fff;border-top:1px solid #aca899;border-left:1px solid #aca899;border-bottom:1px solid #fff;border-right:1px solid #fff"></div>
<div class="a" style="left:590px;top:542px;width:11px;height:11px;border-top:1px solid #716f64;border-left:1px solid #716f64;border-bottom:1px solid #f1efe2;border-right:1px solid #f1efe2"></div>
<svg class="a" style="left:592px;top:544px" width="7" height="7" viewBox="0 0 7 7"><g shape-rendering="crispEdges"><rect x="6" y="0" width="1" height="1"/><rect x="5" y="1" width="2" height="1"/><rect x="0" y="2" width="1" height="1"/><rect x="4" y="2" width="3" height="1"/><rect x="0" y="3" width="2" height="1"/><rect x="3" y="3" width="3" height="1"/><rect x="0" y="4" width="5" height="1"/><rect x="1" y="5" width="3" height="1"/><rect x="2" y="6" width="1" height="1"/></g></svg>
<div class="a t" style="left:607px;top:542px;color:transparent">从上个月复制数据</div>
<svg class="a" style="left:607px;top:542px;overflow:visible" width="96" height="12" fill="#000" shape-rendering="crispEdges"><use href="#g113" x="0" y="0"/><use href="#g114" x="12" y="0"/><use href="#g154" x="25" y="0"/><use href="#g213" x="37" y="0"/><use href="#g82" x="48" y="0"/><use href="#g83" x="60" y="0"/><use href="#g104" x="72" y="0"/><use href="#g107" x="84" y="0"/></svg>
<div class="a t" style="left:529px;top:571px;color:transparent">计算公式：</div>
<svg class="a" style="left:529px;top:571px;overflow:visible" width="60" height="12" fill="#000" shape-rendering="crispEdges"><use href="#g118" x="0" y="0"/><use href="#g119" x="12" y="0"/><use href="#g120" x="24" y="0"/><use href="#g95" x="36" y="0"/><use href="#g211" x="52" y="2"/></svg>
<div class="a" style="left:589px;top:570px;width:221px;height:40px;background:#ffffe1;border-top:1px solid #aca899;border-left:1px solid #aca899;border-bottom:1px solid #fff;border-right:1px solid #fff"></div>
<div class="a" style="left:590px;top:571px;width:219px;height:38px;border-top:1px solid #716f64;border-left:1px solid #716f64;border-bottom:1px solid #f1efe2;border-right:1px solid #f1efe2"></div>
<div class="a t" style="left:593px;top:573px;color:transparent">{基本工资} + {岗位补贴} + {午餐补贴</div>
<svg class="a" style="left:593px;top:573px;overflow:visible" width="210" height="12" fill="#000" shape-rendering="crispEdges"><use href="#g140" x="0" y="2"/><use href="#g36" x="6" y="0"/><use href="#g121" x="18" y="0"/><use href="#g42" x="30" y="1"/><use href="#g38" x="42" y="0"/><use href="#g141" x="54" y="2"/><use href="#g142" x="66" y="4"/><use href="#g140" x="78" y="2"/><use href="#g129" x="85" y="0"/><use href="#g106" x="96" y="0"/><use href="#g130" x="108" y="0"/><use href="#g131" x="120" y="0"/><use href="#g141" x="132" y="2"/><use href="#g142" x="144" y="4"/><use href="#g140" x="156" y="2"/><use href="#g132" x="163" y="0"/><use href="#g133" x="174" y="0"/><use href="#g130" x="186" y="0"/><use href="#g131" x="198" y="0"/></svg>
<div class="a t" style="left:593px;top:584px;color:transparent">} + {通讯补贴}</div>
<svg class="a" style="left:593px;top:584px;overflow:visible" width="84" height="12" fill="#000" shape-rendering="crispEdges"><use href="#g141" x="0" y="2"/><use href="#g142" x="12" y="4"/><use href="#g140" x="24" y="2"/><use href="#g135" x="30" y="0"/><use href="#g136" x="42" y="0"/><use href="#g130" x="54" y="0"/><use href="#g131" x="66" y="0"/><use href="#g141" x="78" y="2"/></svg>
<div class="a" style="left:868px;top:311px;width:84px;height:30px;background:#ece9d8;border-top:1px solid #fff;border-left:1px solid #fff;border-bottom:1px solid #716f64;border-right:1px solid #716f64;box-shadow:inset -1px -1px 0 #aca899"></div>
<div class="a" style="left:868px;top:359px;width:84px;height:30px;background:#ece9d8;border-top:1px solid #fff;border-left:1px solid #fff;border-bottom:1px solid #716f64;border-right:1px solid #716f64;box-shadow:inset -1px -1px 0 #aca899"></div>
<div class="a" style="left:868px;top:407px;width:84px;height:30px;background:#ece9d8;border-top:1px solid #fff;border-left:1px solid #fff;border-bottom:1px solid #716f64;border-right:1px solid #716f64;box-shadow:inset -1px -1px 0 #aca899"></div>
<svg class="a" style="left:877px;top:319px" width="14" height="14" viewBox="0 0 14 14"><defs><linearGradient id="goc" x1="0" y1="0" x2="1" y2="1"><stop offset="0" stop-color="#ffa030"/><stop offset="0.5" stop-color="#f47800"/><stop offset="1" stop-color="#c85000"/></linearGradient></defs><rect x="0" y="0" width="14" height="14" rx="2" fill="url(#goc)"/><path d="M3.5 7 L5.8 9.8 L10.5 3.2" fill="none" stroke="#fff" stroke-width="1.7"/></svg>
<svg class="a" style="left:877px;top:366px" width="14" height="16" viewBox="0 0 14 16"><path d="M0.5 0.5 H10 L13.5 4 V15.5 H0.5Z" fill="#e8f0fc" stroke="#6a86c0" stroke-width="1"/><rect x="2.5" y="7.5" width="7" height="6" fill="none" stroke="#1a3aa0" stroke-width="1.2"/><path d="M3.5 9.5 L6 12 L12.5 4" fill="none" stroke="#e02010" stroke-width="1.6"/></svg>
<svg class="a" style="left:877px;top:415px" width="14" height="14" viewBox="0 0 14 14"><defs><linearGradient id="gox14" x1="0" y1="0" x2="1" y2="1"><stop offset="0" stop-color="#ffa030"/><stop offset="0.5" stop-color="#f47800"/><stop offset="1" stop-color="#c85000"/></linearGradient></defs><rect x="0" y="0" width="14" height="14" rx="2.3333333333333335" fill="url(#gox14)"/><path d="M4.34 4.34 L9.66 9.66 M9.66 4.34 L4.34 9.66" stroke="#fff" stroke-width="1.68" stroke-linecap="round"/></svg>
<div class="a t" style="left:896px;top:320px;color:transparent">确 定(O)</div>
<svg class="a" style="left:896px;top:320px;overflow:visible" width="48" height="12" fill="#000" shape-rendering="crispEdges"><use href="#g246" x="0" y="0"/><use href="#g161" x="18" y="0"/><use href="#g46" x="31" y="2"/><use href="#g247" x="36" y="3"/><use href="#g48" x="43" y="2"/></svg>
<div class="a t" style="left:896px;top:368px;color:transparent">计算公式</div>
<svg class="a" style="left:896px;top:368px;overflow:visible" width="48" height="12" fill="#000" shape-rendering="crispEdges"><use href="#g118" x="0" y="0"/><use href="#g119" x="12" y="0"/><use href="#g120" x="24" y="0"/><use href="#g95" x="36" y="0"/></svg>
<div class="a t" style="left:896px;top:416px;color:transparent">取 消(C)</div>
<svg class="a" style="left:896px;top:416px;overflow:visible" width="48" height="12" fill="#000" shape-rendering="crispEdges"><use href="#g248" x="0" y="0"/><use href="#g249" x="18" y="0"/><use href="#g46" x="31" y="2"/><use href="#g92" x="36" y="3"/><use href="#g48" x="43" y="2"/></svg>
</body></html>
